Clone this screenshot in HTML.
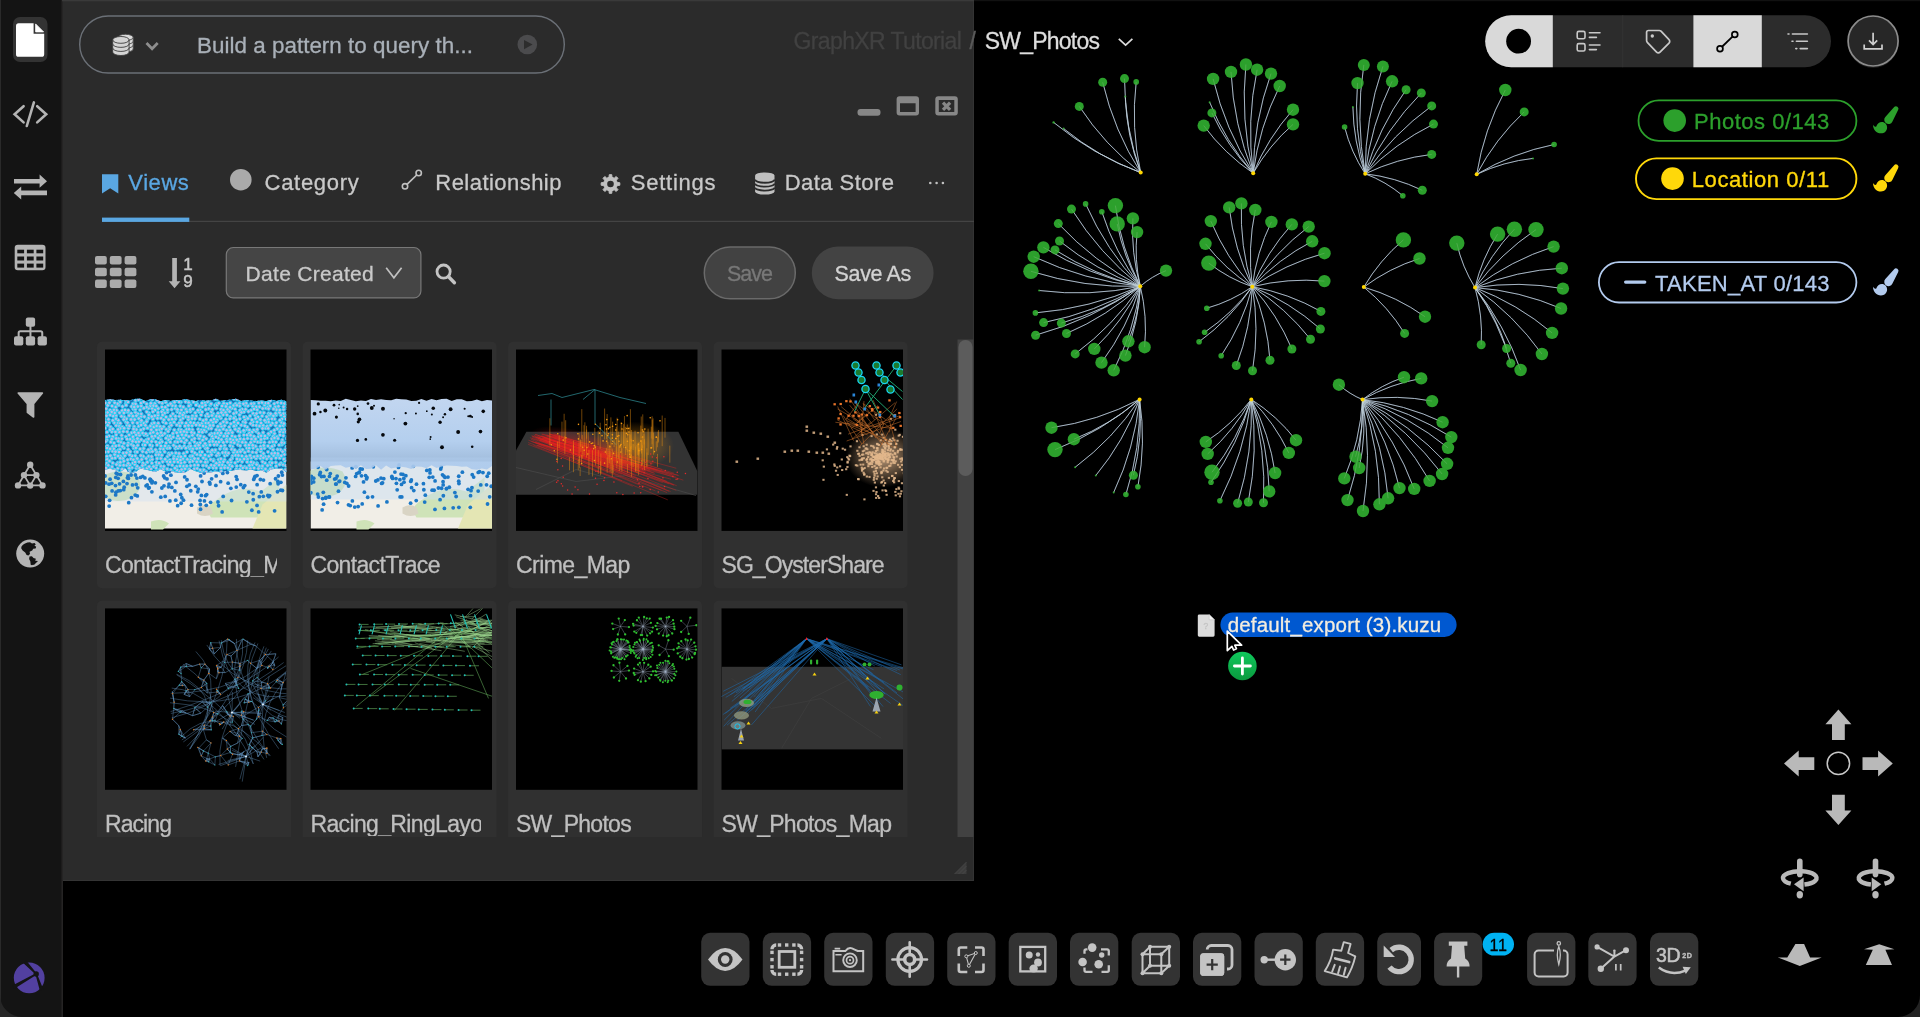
<!DOCTYPE html>
<html lang="en"><head><meta charset="utf-8"><title>GraphXR - SW_Photos</title>
<style>
html,body{margin:0;padding:0;background:#000;}
body{width:1920px;height:1017px;overflow:hidden;position:relative;font-family:"Liberation Sans",sans-serif;}
#g{position:absolute;left:0;top:0;width:1920px;height:1017px;display:block;}
.t{position:absolute;white-space:nowrap;display:block;-webkit-text-stroke:0.3px currentColor;}
#tx{position:absolute;left:0;top:0;width:1920px;height:1017px;will-change:transform;}
svg text{font-family:"Liberation Sans",sans-serif;}
</style></head><body>
<svg id="g" width="1920" height="1017" viewBox="0 0 1920 1017">
<rect x="0" y="0" width="61.200" height="1017" fill="#141414"/>
<rect x="61.200" y="0" width="1.800" height="1017" fill="#252424"/>
<rect x="0" y="0" width="1" height="1017" fill="#2a2a2a"/>
<rect x="13" y="17" width="34.5" height="45" rx="7" fill="#333"/>
<path d="M18.6 23.3H33.6V33.8H44.2V54.2a2.6 2.6 0 0 1-2.6 2.6H18.6a2.6 2.6 0 0 1-2.6-2.6V25.9a2.6 2.6 0 0 1 2.6-2.6Z" fill="#fff"/>
<path d="M35.6 23.9V31.9H43.6Z" fill="#fff" stroke="#fff" stroke-width="0.8" stroke-linejoin="round"/>
<path d="M23.6 106.2L14.6 114.2L23.6 122.4M33.9 102.4L26.8 126M37.2 106.2L46.2 114.2L37.2 122.4" fill="none" stroke="#b4b4b4" stroke-width="2.6" stroke-linecap="round" stroke-linejoin="miter"/>
<path d="M14 178.9H39.6V174.6L47 181.2L39.6 187.8V183.6H14ZM47 190.5H21.2V186.4L13.8 193L21.2 199.6V195.2H47Z" fill="#b4b4b4"/>
<rect x="14.7" y="244.7" width="30.8" height="25.6" rx="3.2" fill="#b4b4b4"/>
<rect x="17.3" y="249.7" width="6.8" height="3.6" fill="#141414"/>
<rect x="17.3" y="256.5" width="6.8" height="4" fill="#141414"/>
<rect x="17.3" y="263.6" width="6.8" height="4" fill="#141414"/>
<rect x="26.9" y="249.7" width="6.8" height="3.6" fill="#141414"/>
<rect x="26.9" y="256.5" width="6.8" height="4" fill="#141414"/>
<rect x="26.9" y="263.6" width="6.8" height="4" fill="#141414"/>
<rect x="36.4" y="249.7" width="6.8" height="3.6" fill="#141414"/>
<rect x="36.4" y="256.5" width="6.8" height="4" fill="#141414"/>
<rect x="36.4" y="263.6" width="6.8" height="4" fill="#141414"/>
<rect x="25.8" y="317.4" width="9.3" height="9.3" rx="2" fill="#b4b4b4"/>
<rect x="14" y="336.2" width="9.3" height="9.3" rx="2" fill="#b4b4b4"/>
<rect x="25.8" y="336.2" width="9.3" height="9.3" rx="2" fill="#b4b4b4"/>
<rect x="37.6" y="336.2" width="9.3" height="9.3" rx="2" fill="#b4b4b4"/>
<path d="M30.45 326V337M18.65 337V332.8a1.6 1.6 0 0 1 1.6-1.6H40.65a1.6 1.6 0 0 1 1.6 1.6V337" fill="none" stroke="#b4b4b4" stroke-width="2"/>
<path d="M18.2 393H42.4L33.6 403.8V417L27.4 412.4V403.8Z" fill="#b4b4b4" stroke="#b4b4b4" stroke-width="1.6" stroke-linejoin="round"/>
<path d="M30.2 464.8L18 485.4H42.5ZM24 475.1H36.4L30.2 485.6Z" fill="none" stroke="#b4b4b4" stroke-width="1.8" stroke-linejoin="round"/>
<circle cx="30.2" cy="464.8" r="3.2" fill="#b4b4b4"/>
<circle cx="24" cy="475.1" r="3.2" fill="#b4b4b4"/>
<circle cx="36.4" cy="475.1" r="3.2" fill="#b4b4b4"/>
<circle cx="18" cy="485.4" r="3.2" fill="#b4b4b4"/>
<circle cx="30.2" cy="485.6" r="3.2" fill="#b4b4b4"/>
<circle cx="42.5" cy="485.4" r="3.2" fill="#b4b4b4"/>
<circle cx="30.2" cy="553.6" r="14" fill="#b4b4b4"/>
<path d="M21.5 546.5c1.5-2.5 5-4.3 8.5-4.3l2 1.2 2.6-.4 1.2 1.6-1.4 1 1.8 1.2-.6 1.6-2.4.4-1 1.8-2.6 1.2.4 2.2-1.6 1.4-1.8-.4-1.4-2.6-2.6-1.8-1.4-2.4Z M29.5 556.5l2.4-.2 1.6 1.6 2.4.8-.8 2.2-2.2 2-.8 2.4-1.4-.6-.4-3.4-1.2-2.2Z M33 560.5l5 .6-3.8 3.6-2.4.2Z" fill="#141414"/>
<circle cx="29.200" cy="977.800" r="15.400" fill="#5240a0"/>
<path d="M36.78 973.45L25.99 960.3L23.21 962.9L35.62 974.55ZM35.8 973.31L12.45 985.56L14.35 988.84L36.6 974.69ZM35.44 974.26L39.8 990.61L43.4 989.39L36.96 973.74Z" fill="#141414"/>
<circle cx="36.200" cy="974" r="2.700" fill="#141414"/>
<path d="M0 1017V995A22 22 0 0 0 22 1017Z" fill="#262626"/>
<path d="M1920 1017V995A22 22 0 0 1 1898 1017Z" fill="#222"/>
<rect x="63" y="0" width="911" height="881" fill="#2b2b2b"/>
<rect x="63" y="880" width="911" height="1" fill="#343434"/>
<rect x="973" y="0" width="1" height="881" fill="#333"/>
<rect x="62" y="0" width="912" height="1.3" fill="#3a3a3a"/>
<rect x="974" y="0" width="946" height="1.2" fill="#111"/>
<rect x="79.7" y="16" width="484.6" height="57" rx="28.5" fill="none" stroke="#6b7077" stroke-width="1.4"/>
<path d="M118 37.4V49A7.6 3.1 0 0 0 133.2 49V37.4A7.6 3.1 0 0 0 118 37.4Z" fill="#dadada" stroke="#4a4a4a" stroke-width="0.9"/><path d="M118 37.4A7.6 3.1 0 0 0 133.2 37.4" fill="none" stroke="#4a4a4a" stroke-width="0.9"/><path d="M118 41.27A7.6 3.1 0 0 0 133.2 41.27" fill="none" stroke="#4a4a4a" stroke-width="0.9"/><path d="M118 45.13A7.6 3.1 0 0 0 133.2 45.13" fill="none" stroke="#4a4a4a" stroke-width="0.9"/>
<path d="M112.7 39.9V52.1A8.2 3.4 0 0 0 129.1 52.1V39.9A8.2 3.4 0 0 0 112.7 39.9Z" fill="#d4d4d4" stroke="#3c3c3c" stroke-width="0.9"/><path d="M112.7 39.9A8.2 3.4 0 0 0 129.1 39.9" fill="none" stroke="#3c3c3c" stroke-width="0.9"/><path d="M112.7 43.97A8.2 3.4 0 0 0 129.1 43.97" fill="none" stroke="#3c3c3c" stroke-width="0.9"/><path d="M112.7 48.03A8.2 3.4 0 0 0 129.1 48.03" fill="none" stroke="#3c3c3c" stroke-width="0.9"/>
<path d="M146.5 43L152.1 48.8L157.7 43" fill="none" stroke="#8e8e8e" stroke-width="2.7" stroke-linejoin="miter"/>
<circle cx="527.3" cy="44.5" r="9.8" fill="#4b4b4d"/>
<path d="M524 39.9V49.2L532.6 44.5Z" fill="#2d2d2d"/>
<rect x="857.500" y="109" width="23" height="6.800" rx="3" fill="#878787"/>
<path d="M899.600 96.300H916a3 3 0 0 1 3 3V112.600a3 3 0 0 1-3 3H899.600a3 3 0 0 1-3-3V99.300a3 3 0 0 1 3-3ZM900 103.300V111.900H915.600V103.300Z" fill="#878787" fill-rule="evenodd"/>
<path d="M938.300 96.300H954.800a3 3 0 0 1 3 3V112.600a3 3 0 0 1-3 3H938.300a3 3 0 0 1-3-3V99.300a3 3 0 0 1 3-3ZM938.800 99.900V111.900H954.300V99.900Z" fill="#878787" fill-rule="evenodd"/>
<path d="M943 102.700L950.100 109.800M950.100 102.700L943 109.800" stroke="#878787" stroke-width="3.300" fill="none"/>
<rect x="102" y="220.800" width="872" height="1.100" fill="#484848"/>
<rect x="102" y="217.600" width="87.300" height="4.300" fill="#5aa7e2"/>
<path d="M102 174.300H118.300V193.600L110.150 188.200L102 193.600Z" fill="#5aa7e2"/>
<circle cx="240.800" cy="179.700" r="10.800" fill="#aaa"/>
<path d="M407 184.300L416.700 175" stroke="#c0c0c0" stroke-width="1.700" fill="none"/>
<circle cx="418.700" cy="173" r="2.700" fill="none" stroke="#c0c0c0" stroke-width="1.600"/>
<circle cx="405" cy="186.300" r="2.700" fill="none" stroke="#c0c0c0" stroke-width="1.600"/>
<path d="M617.23 182.49L619.82 182.75L619.82 185.25L617.23 185.51L616.33 187.7L617.97 189.7L616.2 191.47L614.2 189.83L612.01 190.73L611.75 193.32L609.25 193.32L608.99 190.73L606.8 189.83L604.8 191.47L603.03 189.7L604.67 187.7L603.77 185.51L601.18 185.25L601.18 182.75L603.77 182.49L604.67 180.3L603.03 178.3L604.8 176.53L606.8 178.17L608.99 177.27L609.25 174.68L611.75 174.68L612.01 177.27L614.2 178.17L616.2 176.53L617.97 178.3L616.33 180.3Z" fill="#c0c0c0" stroke="#c0c0c0" stroke-width="1" stroke-linejoin="round"/><circle cx="610.5" cy="184" r="3.3" fill="#2b2b2b"/>
<path d="M755.1 175.6V191.4A9.7 3.2 0 0 0 774.5 191.4V175.6A9.7 3.2 0 0 0 755.1 175.6Z" fill="#c0c0c0"/><path d="M755.1 179.55A9.7 3.2 0 0 0 774.5 179.55" fill="none" stroke="#2b2b2b" stroke-width="1.8"/><path d="M755.1 183.5A9.7 3.2 0 0 0 774.5 183.5" fill="none" stroke="#2b2b2b" stroke-width="1.8"/><path d="M755.1 187.45A9.7 3.2 0 0 0 774.5 187.45" fill="none" stroke="#2b2b2b" stroke-width="1.8"/><path d="M755.1 175.6A9.7 3.2 0 0 0 774.5 175.6" fill="none" stroke="#2b2b2b" stroke-width="0"/>
<circle cx="930.3" cy="183" r="1.300" fill="#c0c0c0"/>
<circle cx="936.6" cy="183" r="1.300" fill="#c0c0c0"/>
<circle cx="942.9" cy="183" r="1.300" fill="#c0c0c0"/>
<rect x="95" y="256" width="11.800" height="8.600" rx="2" fill="#ababab"/>
<rect x="109.8" y="256" width="11.800" height="8.600" rx="2" fill="#ababab"/>
<rect x="124.6" y="256" width="11.800" height="8.600" rx="2" fill="#ababab"/>
<rect x="95" y="267.7" width="11.800" height="8.600" rx="2" fill="#ababab"/>
<rect x="109.8" y="267.7" width="11.800" height="8.600" rx="2" fill="#ababab"/>
<rect x="124.6" y="267.7" width="11.800" height="8.600" rx="2" fill="#ababab"/>
<rect x="95" y="279.4" width="11.800" height="8.600" rx="2" fill="#ababab"/>
<rect x="109.8" y="279.4" width="11.800" height="8.600" rx="2" fill="#ababab"/>
<rect x="124.6" y="279.4" width="11.800" height="8.600" rx="2" fill="#ababab"/>
<path d="M172.200 258.100H176.900V281.300H180.400L174.550 288.300L168.700 281.300H172.200Z" fill="#b4b4b4"/>
<rect x="226.300" y="247.500" width="194.600" height="50.400" rx="7" fill="#454545" stroke="#787878" stroke-width="1.200"/>
<path d="M386.200 267.800L393.900 277.800L401.600 267.800" fill="none" stroke="#c0c0c0" stroke-width="1.700"/>
<circle cx="443.600" cy="271.600" r="6.600" fill="none" stroke="#c4c4c4" stroke-width="2.800"/>
<path d="M448.600 276.800L454.400 282.800" stroke="#c4c4c4" stroke-width="3.400" stroke-linecap="round"/>
<rect x="704.300" y="247" width="91" height="51.800" rx="25.900" fill="#424242" stroke="#6a6a6a" stroke-width="1.500"/>
<rect x="811.800" y="246.500" width="121.800" height="52.800" rx="26.400" fill="#434343"/>
<rect x="957.500" y="339.500" width="16" height="497.500" fill="#424242"/>
<rect x="958.500" y="340" width="14" height="136" rx="7" fill="#5c5c5c"/>
<path d="M966.500 862L954.500 874H966.500Z" fill="#3c3c3c"/>
<path d="M966.500 866L958.500 874M966.500 870L962.500 874M966.500 862L954.500 874" stroke="#4a4a4a" stroke-width="0.800" fill="none"/>
<clipPath id="sc"><rect x="62" y="339" width="896" height="498"/></clipPath>
<g clip-path="url(#sc)">
<rect x="97" y="341.8" width="194" height="246.500" rx="5" fill="#303030"/>
<rect x="105" y="349.5" width="181.500" height="181.400" fill="#000"/>
<rect x="302.6" y="341.8" width="194" height="246.500" rx="5" fill="#303030"/>
<rect x="310.5" y="349.5" width="181.500" height="181.400" fill="#000"/>
<rect x="508.1" y="341.8" width="194" height="246.500" rx="5" fill="#303030"/>
<rect x="516" y="349.5" width="181.500" height="181.400" fill="#000"/>
<rect x="713.6" y="341.8" width="194" height="246.500" rx="5" fill="#303030"/>
<rect x="721.5" y="349.5" width="181.500" height="181.400" fill="#000"/>
<rect x="97" y="600.7" width="194" height="246.500" rx="5" fill="#303030"/>
<rect x="105" y="608.4" width="181.500" height="181.400" fill="#000"/>
<rect x="302.6" y="600.7" width="194" height="246.500" rx="5" fill="#303030"/>
<rect x="310.5" y="608.4" width="181.500" height="181.400" fill="#000"/>
<rect x="508.1" y="600.7" width="194" height="246.500" rx="5" fill="#303030"/>
<rect x="516" y="608.4" width="181.500" height="181.400" fill="#000"/>
<rect x="713.6" y="600.7" width="194" height="246.500" rx="5" fill="#303030"/>
<rect x="721.5" y="608.4" width="181.500" height="181.400" fill="#000"/>
</g>
<clipPath id="t1"><rect x="105" y="349.5" width="181.500" height="181.400"/></clipPath>
<clipPath id="t1b"><path d="M105 400L110.04 399.32L115.08 400.11L120.12 399.66L125.17 400.27L130.21 400.33L135.25 398.87L140.29 398.73L145.33 400.88L150.38 399.37L155.42 399.31L160.46 401.29L165.5 399.92L170.54 400.87L175.58 399.94L180.62 400.36L185.67 399.09L190.71 400.35L195.75 400.96L200.79 400.06L205.83 400.63L210.88 400.45L215.92 398.87L220.96 400.67L226 400.24L231.04 399.48L236.08 398.78L241.12 400.95L246.17 399.93L251.21 400.57L256.25 400.98L261.29 400.56L266.33 401.09L271.38 399.73L276.42 400.78L281.46 399.86L286.5 401.13L286.5 472.27L281.46 468.62L276.42 468.8L271.38 469.18L266.33 472.68L261.29 470.2L256.25 471.09L251.21 469.57L246.17 470.53L241.12 469.97L236.08 469.8L231.04 470.9L226 470.89L220.96 472.39L215.92 471.35L210.88 472.51L205.83 472.17L200.79 472.8L195.75 471.3L190.71 468.92L185.67 472.19L180.62 472.67L175.58 472.39L170.54 470.82L165.5 471.5L160.46 469.15L155.42 472.05L150.38 470.84L145.33 469.49L140.29 468.46L135.25 472.16L130.21 472.79L125.17 468.57L120.12 471.91L115.08 470.08L110.04 468.87L105 469.54Z"/></clipPath>
<g clip-path="url(#t1)"><rect x="105" y="465.5" width="181.500" height="63" fill="#f1eee7"/><path d="M103 475.5q16 -8 34 0q8 12 -4 22q-18 8 -32 -2z" fill="#c6deaa"/><path d="M217 499.5q20 -16 44 -8l18 -14v40h-68q-8 -10 6 -18z" fill="#cfe3b8"/><path d="M262.5 504.5l24 -20v44h-34z" fill="#e4e6b4"/><path d="M197 507.5q8 -5 14 0l2 6q-8 5 -16 0z" fill="#d9d4c4"/><path d="M151 521.5q10 -4 18 2l-6 6h-12z" fill="#cfe3b8"/><rect x="105" y="467.5" width="181.500" height="34" fill="#cfe0f4" opacity="0.420"/><g fill="#1c78c6"><circle cx="163.61" cy="476.01" r="1.900"/><circle cx="222.82" cy="473.4" r="1.900"/><circle cx="201.99" cy="481.49" r="1.900"/><circle cx="115.5" cy="485.53" r="1.900"/><circle cx="111.79" cy="483.36" r="1.900"/><circle cx="117.64" cy="474.1" r="1.900"/><circle cx="181.84" cy="497.73" r="1.900"/><circle cx="127.41" cy="477.86" r="1.900"/><circle cx="218.57" cy="505.73" r="1.900"/><circle cx="209.46" cy="482.33" r="1.900"/><circle cx="281.7" cy="472.23" r="1.900"/><circle cx="260.38" cy="479.5" r="1.900"/><circle cx="131.11" cy="475.02" r="1.900"/><circle cx="160.84" cy="497.19" r="1.900"/><circle cx="137.71" cy="487.87" r="1.900"/><circle cx="220.64" cy="481.67" r="1.900"/><circle cx="204.14" cy="472.99" r="1.900"/><circle cx="115.79" cy="477.44" r="1.900"/><circle cx="228.15" cy="483.19" r="1.900"/><circle cx="161.86" cy="488.01" r="1.900"/><circle cx="187.03" cy="479.76" r="1.900"/><circle cx="248.78" cy="492.07" r="1.900"/><circle cx="149.18" cy="487.64" r="1.900"/><circle cx="200.06" cy="500.41" r="1.900"/><circle cx="237.03" cy="479.46" r="1.900"/><circle cx="282.41" cy="475.03" r="1.900"/><circle cx="180.68" cy="494.45" r="1.900"/><circle cx="132.51" cy="484.97" r="1.900"/><circle cx="112.1" cy="490.9" r="1.900"/><circle cx="243.39" cy="487.59" r="1.900"/><circle cx="263.46" cy="480.12" r="1.900"/><circle cx="230.85" cy="488.3" r="1.900"/><circle cx="209.96" cy="484.01" r="1.900"/><circle cx="257.03" cy="505.46" r="1.900"/><circle cx="190.81" cy="490.75" r="1.900"/><circle cx="115.98" cy="492.17" r="1.900"/><circle cx="222.13" cy="511.95" r="1.900"/><circle cx="253.77" cy="479.38" r="1.900"/><circle cx="174.83" cy="490.92" r="1.900"/><circle cx="109.08" cy="484.17" r="1.900"/><circle cx="135.42" cy="475" r="1.900"/><circle cx="115.67" cy="494.94" r="1.900"/><circle cx="128.41" cy="478.45" r="1.900"/><circle cx="175.76" cy="500.19" r="1.900"/><circle cx="119.59" cy="483.8" r="1.900"/><circle cx="204.45" cy="500.92" r="1.900"/><circle cx="253.29" cy="499.75" r="1.900"/><circle cx="155.39" cy="482.84" r="1.900"/><circle cx="169.94" cy="500.97" r="1.900"/><circle cx="278.35" cy="476.01" r="1.900"/><circle cx="136.9" cy="478.07" r="1.900"/><circle cx="147.23" cy="484.85" r="1.900"/><circle cx="211.63" cy="478.83" r="1.900"/><circle cx="105.74" cy="482.94" r="1.900"/><circle cx="171.83" cy="487.38" r="1.900"/><circle cx="277.51" cy="491.74" r="1.900"/><circle cx="198.3" cy="489.09" r="1.900"/><circle cx="227.39" cy="472.59" r="1.900"/><circle cx="267.82" cy="495.47" r="1.900"/><circle cx="263.29" cy="496.3" r="1.900"/><circle cx="176.02" cy="482.39" r="1.900"/><circle cx="123.74" cy="489.67" r="1.900"/><circle cx="116.27" cy="473.19" r="1.900"/><circle cx="142.79" cy="476.33" r="1.900"/><circle cx="166.55" cy="472.52" r="1.900"/><circle cx="105.04" cy="476.02" r="1.900"/><circle cx="123.37" cy="481.43" r="1.900"/><circle cx="109.62" cy="500.36" r="1.900"/><circle cx="216.15" cy="475.94" r="1.900"/><circle cx="150.66" cy="481" r="1.900"/><circle cx="170.91" cy="475.18" r="1.900"/><circle cx="258.66" cy="511.95" r="1.900"/><circle cx="189.34" cy="484.82" r="1.900"/><circle cx="120.55" cy="474.5" r="1.900"/><circle cx="167.02" cy="478.88" r="1.900"/><circle cx="255.02" cy="476.3" r="1.900"/><circle cx="109.18" cy="506.04" r="1.900"/><circle cx="200.61" cy="475.89" r="1.900"/><circle cx="203.31" cy="471.1" r="1.900"/><circle cx="200.59" cy="509.24" r="1.900"/><circle cx="261.26" cy="491.96" r="1.900"/><circle cx="152.26" cy="481.51" r="1.900"/><circle cx="135.23" cy="495.1" r="1.900"/><circle cx="201.4" cy="495.43" r="1.900"/><circle cx="164.67" cy="477.85" r="1.900"/><circle cx="251.88" cy="510.26" r="1.900"/><circle cx="259.33" cy="496.69" r="1.900"/><circle cx="253.12" cy="493.72" r="1.900"/><circle cx="146.04" cy="485.84" r="1.900"/><circle cx="169.36" cy="471.23" r="1.900"/><circle cx="110.06" cy="479.25" r="1.900"/><circle cx="151.91" cy="491.82" r="1.900"/><circle cx="278.13" cy="483.75" r="1.900"/><circle cx="274.6" cy="510.83" r="1.900"/><circle cx="277.86" cy="481.46" r="1.900"/><circle cx="144.9" cy="477.95" r="1.900"/><circle cx="140.6" cy="477.4" r="1.900"/><circle cx="217.96" cy="502.02" r="1.900"/><circle cx="257.12" cy="484.69" r="1.900"/><circle cx="223.19" cy="496.38" r="1.900"/><circle cx="120.34" cy="490.62" r="1.900"/><circle cx="269.67" cy="495.57" r="1.900"/><circle cx="240.78" cy="484.64" r="1.900"/><circle cx="137.31" cy="495.89" r="1.900"/><circle cx="165.19" cy="496.44" r="1.900"/><circle cx="280.87" cy="482.3" r="1.900"/><circle cx="177.65" cy="505.65" r="1.900"/><circle cx="236.19" cy="476.53" r="1.900"/><circle cx="127.99" cy="476.02" r="1.900"/><circle cx="268.78" cy="496.71" r="1.900"/><circle cx="131.46" cy="497.71" r="1.900"/><circle cx="282.44" cy="490.5" r="1.900"/><circle cx="168.42" cy="486.81" r="1.900"/><circle cx="128.71" cy="470.11" r="1.900"/><circle cx="280.73" cy="490.22" r="1.900"/><circle cx="200.31" cy="504.5" r="1.900"/><circle cx="183.52" cy="500.2" r="1.900"/><circle cx="254.53" cy="477.57" r="1.900"/><circle cx="150.58" cy="479.59" r="1.900"/><circle cx="148.54" cy="488.03" r="1.900"/><circle cx="151.95" cy="482.95" r="1.900"/><circle cx="128.72" cy="502.69" r="1.900"/><circle cx="169.03" cy="484.06" r="1.900"/><circle cx="210.59" cy="502.29" r="1.900"/><circle cx="181.13" cy="503.25" r="1.900"/><circle cx="195.8" cy="486.28" r="1.900"/><circle cx="199.75" cy="470.5" r="1.900"/><circle cx="184.66" cy="476.88" r="1.900"/><circle cx="105.71" cy="496.36" r="1.900"/><circle cx="136.19" cy="484.51" r="1.900"/><circle cx="236.26" cy="487.06" r="1.900"/><circle cx="164" cy="485.86" r="1.900"/><circle cx="205.53" cy="495.66" r="1.900"/><circle cx="124.21" cy="487.18" r="1.900"/><circle cx="149.98" cy="479.18" r="1.900"/><circle cx="244.78" cy="485.53" r="1.900"/><circle cx="206.67" cy="494.58" r="1.900"/><circle cx="270.16" cy="483.63" r="1.900"/><circle cx="215.87" cy="485.47" r="1.900"/><circle cx="197.7" cy="491.83" r="1.900"/><circle cx="186.87" cy="486.32" r="1.900"/><circle cx="191.52" cy="505.17" r="1.900"/><circle cx="231.56" cy="500.49" r="1.900"/><circle cx="275.53" cy="478.75" r="1.900"/><circle cx="206.27" cy="505.33" r="1.900"/><circle cx="257.04" cy="475.61" r="1.900"/><circle cx="127.01" cy="483.6" r="1.900"/><circle cx="118.13" cy="478.28" r="1.900"/><circle cx="118.23" cy="490.95" r="1.900"/><circle cx="246.89" cy="501.8" r="1.900"/></g><g clip-path="url(#t1b)"><rect x="105" y="395.5" width="181.500" height="80" fill="#1870b8"/><g fill="#c2b8e6" stroke="#2ad4f6" stroke-width="0.950"><circle cx="125.88" cy="403.56" r="1.750"/><circle cx="237.83" cy="461.22" r="1.750"/><circle cx="214.55" cy="451.61" r="1.750"/><circle cx="111.77" cy="431.72" r="1.750"/><circle cx="282.34" cy="440.12" r="1.750"/><circle cx="289.29" cy="422.22" r="1.750"/><circle cx="107.5" cy="412.49" r="1.750"/><circle cx="252.42" cy="472.68" r="1.750"/><circle cx="266.17" cy="408.25" r="1.750"/><circle cx="232.49" cy="456.06" r="1.750"/><circle cx="230.17" cy="468.97" r="1.750"/><circle cx="182.78" cy="418.39" r="1.750"/><circle cx="131.9" cy="467.65" r="1.750"/><circle cx="275.3" cy="407.08" r="1.750"/><circle cx="213.26" cy="467.84" r="1.750"/><circle cx="148.97" cy="413.24" r="1.750"/><circle cx="268.39" cy="471.24" r="1.750"/><circle cx="167.72" cy="436.2" r="1.750"/><circle cx="227.9" cy="467.76" r="1.750"/><circle cx="168.66" cy="471.7" r="1.750"/><circle cx="186.93" cy="452.08" r="1.750"/><circle cx="115.67" cy="407.11" r="1.750"/><circle cx="245.66" cy="442.6" r="1.750"/><circle cx="218.84" cy="442.12" r="1.750"/><circle cx="185.93" cy="416.62" r="1.750"/><circle cx="213.15" cy="413.78" r="1.750"/><circle cx="234.04" cy="422.14" r="1.750"/><circle cx="196.93" cy="454.44" r="1.750"/><circle cx="129.68" cy="465.07" r="1.750"/><circle cx="256.03" cy="458.41" r="1.750"/><circle cx="205.97" cy="445.1" r="1.750"/><circle cx="189.8" cy="448.46" r="1.750"/><circle cx="257.16" cy="409.68" r="1.750"/><circle cx="274.56" cy="419.06" r="1.750"/><circle cx="152.27" cy="399.41" r="1.750"/><circle cx="158.24" cy="408.56" r="1.750"/><circle cx="150.49" cy="425.94" r="1.750"/><circle cx="226.79" cy="422.42" r="1.750"/><circle cx="221.03" cy="409.44" r="1.750"/><circle cx="198.41" cy="473" r="1.750"/><circle cx="211.22" cy="465.16" r="1.750"/><circle cx="163.26" cy="421.99" r="1.750"/><circle cx="162.94" cy="409.94" r="1.750"/><circle cx="194.12" cy="432.97" r="1.750"/><circle cx="186.23" cy="423.1" r="1.750"/><circle cx="146.73" cy="411.82" r="1.750"/><circle cx="136.05" cy="441.77" r="1.750"/><circle cx="157.13" cy="458.57" r="1.750"/><circle cx="119.27" cy="425.94" r="1.750"/><circle cx="194.66" cy="452.73" r="1.750"/><circle cx="127.18" cy="425.27" r="1.750"/><circle cx="174.03" cy="456.44" r="1.750"/><circle cx="128.19" cy="449.55" r="1.750"/><circle cx="148.55" cy="456.25" r="1.750"/><circle cx="143.02" cy="468.76" r="1.750"/><circle cx="271.66" cy="438.77" r="1.750"/><circle cx="170.55" cy="423.24" r="1.750"/><circle cx="183.53" cy="466.17" r="1.750"/><circle cx="211.42" cy="411.73" r="1.750"/><circle cx="284.36" cy="416.4" r="1.750"/><circle cx="223.46" cy="410.12" r="1.750"/><circle cx="136.17" cy="434.79" r="1.750"/><circle cx="172.94" cy="433.46" r="1.750"/><circle cx="165.67" cy="402.15" r="1.750"/><circle cx="123.34" cy="431.39" r="1.750"/><circle cx="208.68" cy="408.68" r="1.750"/><circle cx="281.84" cy="444.53" r="1.750"/><circle cx="227.07" cy="404" r="1.750"/><circle cx="190.77" cy="472.47" r="1.750"/><circle cx="221.46" cy="426.35" r="1.750"/><circle cx="155.8" cy="441.82" r="1.750"/><circle cx="252.51" cy="452.17" r="1.750"/><circle cx="158.02" cy="415.27" r="1.750"/><circle cx="118.34" cy="450.17" r="1.750"/><circle cx="166.32" cy="429.56" r="1.750"/><circle cx="128.28" cy="443.05" r="1.750"/><circle cx="251.51" cy="439.02" r="1.750"/><circle cx="224.68" cy="398.89" r="1.750"/><circle cx="283.55" cy="413.61" r="1.750"/><circle cx="223.21" cy="414.83" r="1.750"/><circle cx="137.78" cy="406.5" r="1.750"/><circle cx="200.51" cy="455.16" r="1.750"/><circle cx="179.22" cy="423.01" r="1.750"/><circle cx="242.15" cy="409.34" r="1.750"/><circle cx="168.75" cy="446.49" r="1.750"/><circle cx="163.37" cy="449.11" r="1.750"/><circle cx="167.27" cy="461.62" r="1.750"/><circle cx="190.45" cy="411.59" r="1.750"/><circle cx="175.38" cy="408.41" r="1.750"/><circle cx="250.36" cy="468.45" r="1.750"/><circle cx="156.84" cy="452.13" r="1.750"/><circle cx="190.32" cy="409.54" r="1.750"/><circle cx="119.51" cy="400.2" r="1.750"/><circle cx="207.77" cy="451.46" r="1.750"/><circle cx="190.72" cy="460.08" r="1.750"/><circle cx="234.19" cy="473.28" r="1.750"/><circle cx="177.32" cy="411.78" r="1.750"/><circle cx="200.07" cy="451.87" r="1.750"/><circle cx="186.67" cy="429.32" r="1.750"/><circle cx="166.1" cy="416.97" r="1.750"/><circle cx="224.44" cy="459.76" r="1.750"/><circle cx="129.46" cy="470.98" r="1.750"/><circle cx="119.25" cy="473.2" r="1.750"/><circle cx="192.09" cy="425.7" r="1.750"/><circle cx="180.3" cy="406.09" r="1.750"/><circle cx="283.59" cy="409.43" r="1.750"/><circle cx="277.94" cy="455.33" r="1.750"/><circle cx="183.36" cy="406.91" r="1.750"/><circle cx="201.7" cy="423.53" r="1.750"/><circle cx="177.14" cy="438.24" r="1.750"/><circle cx="264.57" cy="405.11" r="1.750"/><circle cx="245.31" cy="445.44" r="1.750"/><circle cx="103.86" cy="459.99" r="1.750"/><circle cx="175.77" cy="452.91" r="1.750"/><circle cx="232.94" cy="439.92" r="1.750"/><circle cx="247.85" cy="405.73" r="1.750"/><circle cx="208.88" cy="467.77" r="1.750"/><circle cx="139" cy="441.56" r="1.750"/><circle cx="196.31" cy="415.99" r="1.750"/><circle cx="205.82" cy="409.46" r="1.750"/><circle cx="247.59" cy="438.39" r="1.750"/><circle cx="198.19" cy="465.14" r="1.750"/><circle cx="179.74" cy="438.62" r="1.750"/><circle cx="252.92" cy="425.2" r="1.750"/><circle cx="175.51" cy="405.89" r="1.750"/><circle cx="118.99" cy="445.5" r="1.750"/><circle cx="146.38" cy="452.41" r="1.750"/><circle cx="238.28" cy="441.42" r="1.750"/><circle cx="205.8" cy="422.94" r="1.750"/><circle cx="123.98" cy="447.9" r="1.750"/><circle cx="185.57" cy="401.75" r="1.750"/><circle cx="230.33" cy="439.01" r="1.750"/><circle cx="287.18" cy="424.92" r="1.750"/><circle cx="178.88" cy="429.47" r="1.750"/><circle cx="177.96" cy="435.87" r="1.750"/><circle cx="103.89" cy="399.64" r="1.750"/><circle cx="176.62" cy="466.53" r="1.750"/><circle cx="223.39" cy="461.72" r="1.750"/><circle cx="239.75" cy="469.48" r="1.750"/><circle cx="115.19" cy="458.02" r="1.750"/><circle cx="169.56" cy="428.91" r="1.750"/><circle cx="265.61" cy="428.18" r="1.750"/><circle cx="272.31" cy="423.22" r="1.750"/><circle cx="281.75" cy="469.94" r="1.750"/><circle cx="141.3" cy="416.34" r="1.750"/><circle cx="288.19" cy="415.43" r="1.750"/><circle cx="208.81" cy="428.47" r="1.750"/><circle cx="184.56" cy="442.71" r="1.750"/><circle cx="120.67" cy="442.12" r="1.750"/><circle cx="245.48" cy="416.97" r="1.750"/><circle cx="184.89" cy="426.11" r="1.750"/><circle cx="230.28" cy="402.91" r="1.750"/><circle cx="146.59" cy="439.79" r="1.750"/><circle cx="280.77" cy="415.1" r="1.750"/><circle cx="127.71" cy="445.42" r="1.750"/><circle cx="107.47" cy="445.88" r="1.750"/><circle cx="108.97" cy="422.75" r="1.750"/><circle cx="276.19" cy="414.92" r="1.750"/><circle cx="160.97" cy="439.73" r="1.750"/><circle cx="278.5" cy="406.27" r="1.750"/><circle cx="280.83" cy="463.23" r="1.750"/><circle cx="106.77" cy="463.31" r="1.750"/><circle cx="192.65" cy="448.96" r="1.750"/><circle cx="120.5" cy="456.34" r="1.750"/><circle cx="150.55" cy="459.98" r="1.750"/><circle cx="180.74" cy="402.25" r="1.750"/><circle cx="181.08" cy="429.84" r="1.750"/><circle cx="202.71" cy="440.14" r="1.750"/><circle cx="114.14" cy="442.94" r="1.750"/><circle cx="230.43" cy="430.17" r="1.750"/><circle cx="222.27" cy="464.86" r="1.750"/><circle cx="132.84" cy="463.03" r="1.750"/><circle cx="180.82" cy="463.01" r="1.750"/><circle cx="126.67" cy="465.35" r="1.750"/><circle cx="202.04" cy="471.46" r="1.750"/><circle cx="231.07" cy="442.34" r="1.750"/><circle cx="203.17" cy="420.47" r="1.750"/><circle cx="263.84" cy="412.71" r="1.750"/><circle cx="218.55" cy="459.56" r="1.750"/><circle cx="160.25" cy="448.73" r="1.750"/><circle cx="129.24" cy="468.24" r="1.750"/><circle cx="205.8" cy="459.26" r="1.750"/><circle cx="133.68" cy="448.09" r="1.750"/><circle cx="189.19" cy="469.35" r="1.750"/><circle cx="150.03" cy="451.53" r="1.750"/><circle cx="241.85" cy="455.91" r="1.750"/><circle cx="126.46" cy="418.75" r="1.750"/><circle cx="266.72" cy="458.78" r="1.750"/><circle cx="163.16" cy="468.91" r="1.750"/><circle cx="199.82" cy="447.95" r="1.750"/><circle cx="124.79" cy="455.69" r="1.750"/><circle cx="156.81" cy="471.73" r="1.750"/><circle cx="181.4" cy="409.95" r="1.750"/><circle cx="231.98" cy="435.84" r="1.750"/><circle cx="160.02" cy="436.02" r="1.750"/><circle cx="159.84" cy="472.75" r="1.750"/><circle cx="235.19" cy="409.19" r="1.750"/><circle cx="118.19" cy="456.11" r="1.750"/><circle cx="259.33" cy="400.42" r="1.750"/><circle cx="188.34" cy="419.6" r="1.750"/><circle cx="117.86" cy="462.71" r="1.750"/><circle cx="286.08" cy="418.97" r="1.750"/><circle cx="199.74" cy="418.99" r="1.750"/><circle cx="166.03" cy="423.24" r="1.750"/><circle cx="192.03" cy="439.66" r="1.750"/><circle cx="116.61" cy="410.36" r="1.750"/><circle cx="194.36" cy="468.81" r="1.750"/><circle cx="255.6" cy="446.32" r="1.750"/><circle cx="196.78" cy="448.42" r="1.750"/><circle cx="216.26" cy="467.89" r="1.750"/><circle cx="141.32" cy="413.9" r="1.750"/><circle cx="112.76" cy="436.71" r="1.750"/><circle cx="127.21" cy="431.65" r="1.750"/><circle cx="179.22" cy="471.26" r="1.750"/><circle cx="211.55" cy="439.37" r="1.750"/><circle cx="216.58" cy="403.91" r="1.750"/><circle cx="175.51" cy="418.92" r="1.750"/><circle cx="150.41" cy="433.35" r="1.750"/><circle cx="203.4" cy="445.78" r="1.750"/><circle cx="217.92" cy="426.42" r="1.750"/><circle cx="175.34" cy="448.4" r="1.750"/><circle cx="219.01" cy="454.68" r="1.750"/><circle cx="239.04" cy="428.63" r="1.750"/><circle cx="162.05" cy="441.69" r="1.750"/><circle cx="153.73" cy="427.08" r="1.750"/><circle cx="110.52" cy="426.97" r="1.750"/><circle cx="144.01" cy="423.29" r="1.750"/><circle cx="127.66" cy="412.06" r="1.750"/><circle cx="275.84" cy="457.95" r="1.750"/><circle cx="112.67" cy="462.96" r="1.750"/><circle cx="276.11" cy="473.14" r="1.750"/><circle cx="253.14" cy="413.42" r="1.750"/><circle cx="268.25" cy="399.84" r="1.750"/><circle cx="131.7" cy="432.74" r="1.750"/><circle cx="157.5" cy="418.35" r="1.750"/><circle cx="121.9" cy="438.65" r="1.750"/><circle cx="158.25" cy="423.19" r="1.750"/><circle cx="143.28" cy="456.32" r="1.750"/><circle cx="286.87" cy="413.34" r="1.750"/><circle cx="258.63" cy="472.1" r="1.750"/><circle cx="256.21" cy="431.41" r="1.750"/><circle cx="214.6" cy="433.38" r="1.750"/><circle cx="196.77" cy="403.74" r="1.750"/><circle cx="131.58" cy="444.59" r="1.750"/><circle cx="232.39" cy="446.58" r="1.750"/><circle cx="178.07" cy="448.09" r="1.750"/><circle cx="208.56" cy="423.1" r="1.750"/><circle cx="137.76" cy="413.71" r="1.750"/><circle cx="263.14" cy="432.5" r="1.750"/><circle cx="192.63" cy="461.24" r="1.750"/><circle cx="235.11" cy="436.63" r="1.750"/><circle cx="104.28" cy="446.79" r="1.750"/><circle cx="122.46" cy="427.08" r="1.750"/><circle cx="136.33" cy="429.55" r="1.750"/><circle cx="156.64" cy="425.98" r="1.750"/><circle cx="289.34" cy="462.81" r="1.750"/><circle cx="185.06" cy="468.69" r="1.750"/><circle cx="172.1" cy="419.25" r="1.750"/><circle cx="199.5" cy="406.27" r="1.750"/><circle cx="271.13" cy="431.8" r="1.750"/><circle cx="152.45" cy="451.44" r="1.750"/><circle cx="192.48" cy="415.93" r="1.750"/><circle cx="268.44" cy="406.63" r="1.750"/><circle cx="273.4" cy="415.89" r="1.750"/><circle cx="188.71" cy="446.48" r="1.750"/><circle cx="210.72" cy="452.01" r="1.750"/><circle cx="243.78" cy="435.02" r="1.750"/><circle cx="119.36" cy="432.1" r="1.750"/><circle cx="224.67" cy="445.58" r="1.750"/><circle cx="276.55" cy="409.69" r="1.750"/><circle cx="130.04" cy="439.31" r="1.750"/><circle cx="168.06" cy="405.31" r="1.750"/><circle cx="175.83" cy="446.63" r="1.750"/><circle cx="267.12" cy="438.07" r="1.750"/><circle cx="221.07" cy="468.34" r="1.750"/><circle cx="260.47" cy="458.29" r="1.750"/><circle cx="125.81" cy="422.08" r="1.750"/><circle cx="287.47" cy="471.36" r="1.750"/><circle cx="251.51" cy="398.95" r="1.750"/><circle cx="211.39" cy="433.62" r="1.750"/><circle cx="116.13" cy="415.65" r="1.750"/><circle cx="275.56" cy="425.49" r="1.750"/><circle cx="225.76" cy="433.47" r="1.750"/><circle cx="124.4" cy="469.66" r="1.750"/><circle cx="243.36" cy="421.83" r="1.750"/><circle cx="122.03" cy="399.03" r="1.750"/><circle cx="164.57" cy="451.87" r="1.750"/><circle cx="217.81" cy="433.23" r="1.750"/><circle cx="175.18" cy="441.74" r="1.750"/><circle cx="138.71" cy="426.15" r="1.750"/><circle cx="136.39" cy="468.21" r="1.750"/><circle cx="186.03" cy="409.45" r="1.750"/><circle cx="263.12" cy="425.51" r="1.750"/><circle cx="199.12" cy="438.48" r="1.750"/><circle cx="228.44" cy="433.2" r="1.750"/><circle cx="157.06" cy="400.32" r="1.750"/><circle cx="239.78" cy="450.19" r="1.750"/><circle cx="279.93" cy="434.96" r="1.750"/><circle cx="164.23" cy="472.31" r="1.750"/><circle cx="205.77" cy="415.81" r="1.750"/><circle cx="231.68" cy="449.3" r="1.750"/><circle cx="190.5" cy="422.39" r="1.750"/><circle cx="121.88" cy="471.17" r="1.750"/><circle cx="248.92" cy="445.1" r="1.750"/><circle cx="158" cy="412.51" r="1.750"/><circle cx="217.01" cy="399.1" r="1.750"/><circle cx="230.8" cy="423.73" r="1.750"/><circle cx="189.61" cy="461.96" r="1.750"/><circle cx="183.62" cy="438.08" r="1.750"/><circle cx="188.9" cy="436.53" r="1.750"/><circle cx="244.74" cy="466.64" r="1.750"/><circle cx="203.76" cy="469.86" r="1.750"/><circle cx="227.16" cy="436.18" r="1.750"/><circle cx="190.38" cy="404.98" r="1.750"/><circle cx="281.26" cy="402.99" r="1.750"/><circle cx="187.36" cy="459.27" r="1.750"/><circle cx="183.21" cy="472.05" r="1.750"/><circle cx="247.04" cy="448.22" r="1.750"/><circle cx="118.61" cy="404.93" r="1.750"/><circle cx="256.27" cy="406.71" r="1.750"/><circle cx="270.31" cy="405.99" r="1.750"/><circle cx="200.86" cy="461.55" r="1.750"/><circle cx="230.05" cy="445.65" r="1.750"/><circle cx="173.59" cy="400.69" r="1.750"/><circle cx="136.38" cy="415.74" r="1.750"/><circle cx="173.53" cy="445.3" r="1.750"/><circle cx="159.82" cy="452.31" r="1.750"/><circle cx="215.39" cy="449.88" r="1.750"/><circle cx="246.56" cy="468.04" r="1.750"/><circle cx="213.61" cy="459.65" r="1.750"/><circle cx="269.99" cy="462.54" r="1.750"/><circle cx="156.01" cy="454.76" r="1.750"/><circle cx="240.12" cy="438.73" r="1.750"/><circle cx="270.8" cy="464.66" r="1.750"/><circle cx="192.31" cy="435.28" r="1.750"/><circle cx="212.21" cy="436.4" r="1.750"/><circle cx="220.79" cy="418.3" r="1.750"/><circle cx="251.31" cy="457.91" r="1.750"/><circle cx="152.07" cy="423.56" r="1.750"/><circle cx="233.64" cy="405.38" r="1.750"/><circle cx="284.38" cy="454.55" r="1.750"/><circle cx="197.26" cy="468.44" r="1.750"/><circle cx="279.56" cy="412.47" r="1.750"/><circle cx="219.86" cy="448.79" r="1.750"/><circle cx="161.05" cy="399.84" r="1.750"/><circle cx="217.03" cy="420.2" r="1.750"/><circle cx="122.52" cy="406.53" r="1.750"/><circle cx="168.53" cy="464.38" r="1.750"/><circle cx="194.44" cy="441.92" r="1.750"/><circle cx="216.35" cy="408.27" r="1.750"/><circle cx="214.87" cy="398.95" r="1.750"/><circle cx="239.47" cy="403.29" r="1.750"/><circle cx="143.63" cy="428.8" r="1.750"/><circle cx="284.36" cy="403.61" r="1.750"/><circle cx="239.63" cy="406.03" r="1.750"/><circle cx="224.76" cy="455.86" r="1.750"/><circle cx="283.41" cy="432.15" r="1.750"/><circle cx="106.95" cy="456.39" r="1.750"/><circle cx="279.87" cy="426.05" r="1.750"/><circle cx="140.79" cy="455.58" r="1.750"/><circle cx="262" cy="402.52" r="1.750"/><circle cx="192.85" cy="409.11" r="1.750"/><circle cx="112.01" cy="458.29" r="1.750"/><circle cx="252.99" cy="421.66" r="1.750"/><circle cx="243.71" cy="399.84" r="1.750"/><circle cx="161.1" cy="418.27" r="1.750"/><circle cx="224.44" cy="448.75" r="1.750"/><circle cx="190.4" cy="456.15" r="1.750"/><circle cx="247.5" cy="459.06" r="1.750"/><circle cx="141.18" cy="425.08" r="1.750"/><circle cx="156.51" cy="465.3" r="1.750"/><circle cx="180.59" cy="420.11" r="1.750"/><circle cx="143.6" cy="448.54" r="1.750"/><circle cx="267.97" cy="451.85" r="1.750"/><circle cx="260.84" cy="451.46" r="1.750"/><circle cx="117.75" cy="468.47" r="1.750"/><circle cx="150.97" cy="468.82" r="1.750"/><circle cx="252.17" cy="464.86" r="1.750"/><circle cx="150.51" cy="405.82" r="1.750"/><circle cx="253.96" cy="436.46" r="1.750"/><circle cx="221.19" cy="471.42" r="1.750"/><circle cx="183.63" cy="453.41" r="1.750"/><circle cx="130.25" cy="451.77" r="1.750"/><circle cx="260.11" cy="412.47" r="1.750"/><circle cx="237.14" cy="399.37" r="1.750"/><circle cx="284.22" cy="429.42" r="1.750"/><circle cx="226.47" cy="439.32" r="1.750"/><circle cx="203.95" cy="436.75" r="1.750"/><circle cx="169.96" cy="436.14" r="1.750"/><circle cx="106.94" cy="432.23" r="1.750"/><circle cx="275.82" cy="462.5" r="1.750"/><circle cx="127.69" cy="473.2" r="1.750"/><circle cx="222.66" cy="452.61" r="1.750"/><circle cx="135.28" cy="455.73" r="1.750"/><circle cx="221.42" cy="439.57" r="1.750"/><circle cx="283.28" cy="464.82" r="1.750"/><circle cx="192.44" cy="429.71" r="1.750"/><circle cx="261.06" cy="423.12" r="1.750"/><circle cx="144.41" cy="435.07" r="1.750"/><circle cx="194.08" cy="423" r="1.750"/><circle cx="152.2" cy="445.81" r="1.750"/><circle cx="205.16" cy="403" r="1.750"/><circle cx="110.34" cy="469" r="1.750"/><circle cx="171.69" cy="453.21" r="1.750"/><circle cx="159.48" cy="429.46" r="1.750"/><circle cx="205.78" cy="426.7" r="1.750"/><circle cx="130.82" cy="459.01" r="1.750"/><circle cx="179.29" cy="416.33" r="1.750"/><circle cx="283.93" cy="442.8" r="1.750"/><circle cx="177.02" cy="400" r="1.750"/><circle cx="272.04" cy="462.83" r="1.750"/><circle cx="255.24" cy="415.38" r="1.750"/><circle cx="190.58" cy="445.99" r="1.750"/><circle cx="186.85" cy="411.67" r="1.750"/><circle cx="230.48" cy="416.61" r="1.750"/><circle cx="213.1" cy="438.87" r="1.750"/><circle cx="208.75" cy="456.07" r="1.750"/><circle cx="210.29" cy="404.96" r="1.750"/><circle cx="270.4" cy="447.83" r="1.750"/><circle cx="247.48" cy="399.31" r="1.750"/><circle cx="107.75" cy="405.45" r="1.750"/><circle cx="272.22" cy="468.32" r="1.750"/><circle cx="154.2" cy="471.88" r="1.750"/><circle cx="172.28" cy="405.56" r="1.750"/><circle cx="250.13" cy="415.95" r="1.750"/><circle cx="146.21" cy="458.53" r="1.750"/><circle cx="131.18" cy="413.45" r="1.750"/><circle cx="279.45" cy="399.09" r="1.750"/><circle cx="264.43" cy="442.39" r="1.750"/><circle cx="250.5" cy="423.58" r="1.750"/><circle cx="220.89" cy="458.82" r="1.750"/><circle cx="211.3" cy="428.59" r="1.750"/><circle cx="268.79" cy="456.45" r="1.750"/><circle cx="242.1" cy="461.65" r="1.750"/><circle cx="257.96" cy="417.05" r="1.750"/><circle cx="241.3" cy="425.27" r="1.750"/><circle cx="280.46" cy="449.73" r="1.750"/><circle cx="253.59" cy="430.15" r="1.750"/><circle cx="203.38" cy="457.9" r="1.750"/><circle cx="159.96" cy="469.65" r="1.750"/><circle cx="243.87" cy="411.9" r="1.750"/><circle cx="192.05" cy="418.61" r="1.750"/><circle cx="179.56" cy="398.85" r="1.750"/><circle cx="137.21" cy="458.57" r="1.750"/><circle cx="240.19" cy="432.02" r="1.750"/><circle cx="164.8" cy="399.89" r="1.750"/><circle cx="119.53" cy="412.77" r="1.750"/><circle cx="133.35" cy="409.04" r="1.750"/><circle cx="122.25" cy="410.55" r="1.750"/><circle cx="145.87" cy="398.44" r="1.750"/><circle cx="283.51" cy="406.81" r="1.750"/><circle cx="165.31" cy="407.18" r="1.750"/><circle cx="256.28" cy="425.4" r="1.750"/><circle cx="253.59" cy="462.63" r="1.750"/><circle cx="152.26" cy="459.22" r="1.750"/><circle cx="208.56" cy="416.23" r="1.750"/><circle cx="239.87" cy="459.59" r="1.750"/><circle cx="171.29" cy="438.48" r="1.750"/><circle cx="216.28" cy="429.67" r="1.750"/><circle cx="268.56" cy="413.43" r="1.750"/><circle cx="245.11" cy="405.33" r="1.750"/><circle cx="212.26" cy="450.19" r="1.750"/><circle cx="251.06" cy="410.36" r="1.750"/><circle cx="134.96" cy="464.47" r="1.750"/><circle cx="135.89" cy="447.86" r="1.750"/><circle cx="120.02" cy="449.51" r="1.750"/><circle cx="205.45" cy="405.23" r="1.750"/><circle cx="148.85" cy="414.85" r="1.750"/><circle cx="107.03" cy="448.12" r="1.750"/><circle cx="276.51" cy="469.29" r="1.750"/><circle cx="221.38" cy="412.62" r="1.750"/><circle cx="268.39" cy="419.15" r="1.750"/><circle cx="271.34" cy="458.8" r="1.750"/><circle cx="258.59" cy="436.5" r="1.750"/><circle cx="169.73" cy="460.04" r="1.750"/><circle cx="268.54" cy="422.07" r="1.750"/><circle cx="132.97" cy="436.85" r="1.750"/><circle cx="156.46" cy="429.9" r="1.750"/><circle cx="275.76" cy="442.03" r="1.750"/><circle cx="152.22" cy="408.61" r="1.750"/><circle cx="244.18" cy="431.45" r="1.750"/><circle cx="167.58" cy="456.4" r="1.750"/><circle cx="118.11" cy="422.75" r="1.750"/><circle cx="161.09" cy="466.31" r="1.750"/><circle cx="186.48" cy="440.29" r="1.750"/><circle cx="270.43" cy="468.95" r="1.750"/><circle cx="235.67" cy="403.76" r="1.750"/><circle cx="277.9" cy="453.48" r="1.750"/><circle cx="131.97" cy="455.94" r="1.750"/><circle cx="252.67" cy="406.15" r="1.750"/><circle cx="253.9" cy="403.5" r="1.750"/><circle cx="168.69" cy="453.39" r="1.750"/><circle cx="167.44" cy="411.98" r="1.750"/><circle cx="148.44" cy="408.35" r="1.750"/><circle cx="121.64" cy="435.35" r="1.750"/><circle cx="135.56" cy="400.62" r="1.750"/><circle cx="131.06" cy="398.4" r="1.750"/><circle cx="236.94" cy="405.33" r="1.750"/><circle cx="170.88" cy="469.81" r="1.750"/><circle cx="106.77" cy="440.08" r="1.750"/><circle cx="223.37" cy="429.11" r="1.750"/><circle cx="258.67" cy="433.46" r="1.750"/><circle cx="108.82" cy="399.42" r="1.750"/><circle cx="245.6" cy="409.24" r="1.750"/><circle cx="214.99" cy="405.47" r="1.750"/><circle cx="230.86" cy="462.19" r="1.750"/><circle cx="141.18" cy="398.34" r="1.750"/><circle cx="266.65" cy="416.76" r="1.750"/><circle cx="161.81" cy="406.94" r="1.750"/><circle cx="106.26" cy="408.69" r="1.750"/><circle cx="232.06" cy="458.54" r="1.750"/><circle cx="247.26" cy="429.44" r="1.750"/><circle cx="219.58" cy="462.44" r="1.750"/><circle cx="239.8" cy="418.83" r="1.750"/><circle cx="246.32" cy="456.37" r="1.750"/><circle cx="270.24" cy="400.67" r="1.750"/><circle cx="273.17" cy="449.74" r="1.750"/><circle cx="156.37" cy="462.36" r="1.750"/><circle cx="219.9" cy="435.03" r="1.750"/><circle cx="235.83" cy="425.61" r="1.750"/><circle cx="119.88" cy="465.36" r="1.750"/><circle cx="251.95" cy="432.16" r="1.750"/><circle cx="116.12" cy="425.62" r="1.750"/><circle cx="122.81" cy="458.52" r="1.750"/><circle cx="242.56" cy="449.8" r="1.750"/><circle cx="128.22" cy="463.32" r="1.750"/><circle cx="245.14" cy="419.77" r="1.750"/><circle cx="287.3" cy="403.4" r="1.750"/><circle cx="181.48" cy="447.85" r="1.750"/><circle cx="162.12" cy="403.33" r="1.750"/><circle cx="285.42" cy="399.7" r="1.750"/><circle cx="157.36" cy="433.47" r="1.750"/><circle cx="257.64" cy="442.07" r="1.750"/><circle cx="146.59" cy="403.91" r="1.750"/><circle cx="122.18" cy="469.32" r="1.750"/><circle cx="103.28" cy="432.42" r="1.750"/><circle cx="223.29" cy="442.39" r="1.750"/><circle cx="257.56" cy="449.61" r="1.750"/><circle cx="206.12" cy="471.69" r="1.750"/><circle cx="154.3" cy="422.92" r="1.750"/><circle cx="242.75" cy="467.79" r="1.750"/><circle cx="112.66" cy="446.35" r="1.750"/><circle cx="212.39" cy="409.41" r="1.750"/><circle cx="112.58" cy="451.16" r="1.750"/><circle cx="227.65" cy="409.38" r="1.750"/><circle cx="254.1" cy="468.07" r="1.750"/><circle cx="168.49" cy="439.69" r="1.750"/><circle cx="249.16" cy="448.21" r="1.750"/><circle cx="285.29" cy="449.64" r="1.750"/><circle cx="225.03" cy="466.05" r="1.750"/><circle cx="186.65" cy="466.08" r="1.750"/><circle cx="225.64" cy="412.53" r="1.750"/><circle cx="103.43" cy="439.82" r="1.750"/><circle cx="205.97" cy="431.46" r="1.750"/><circle cx="269.55" cy="415.08" r="1.750"/><circle cx="147.49" cy="428.04" r="1.750"/><circle cx="209.67" cy="434.68" r="1.750"/><circle cx="206.18" cy="419.42" r="1.750"/><circle cx="286.61" cy="446.76" r="1.750"/><circle cx="207.42" cy="413.88" r="1.750"/><circle cx="114.21" cy="422.7" r="1.750"/><circle cx="236.31" cy="419.69" r="1.750"/><circle cx="213.03" cy="422.41" r="1.750"/><circle cx="143.14" cy="444.86" r="1.750"/><circle cx="192.57" cy="456" r="1.750"/><circle cx="118.27" cy="420.24" r="1.750"/><circle cx="209.38" cy="399.81" r="1.750"/><circle cx="108.29" cy="451.7" r="1.750"/><circle cx="142.62" cy="433.1" r="1.750"/><circle cx="183.29" cy="398.47" r="1.750"/><circle cx="133.44" cy="459.85" r="1.750"/><circle cx="287.7" cy="408.67" r="1.750"/><circle cx="177.03" cy="469.85" r="1.750"/><circle cx="215.93" cy="442.14" r="1.750"/><circle cx="254.12" cy="456.66" r="1.750"/><circle cx="203.78" cy="399.43" r="1.750"/><circle cx="240" cy="410.42" r="1.750"/><circle cx="161.7" cy="411.8" r="1.750"/><circle cx="123.77" cy="461.26" r="1.750"/><circle cx="230.47" cy="459.85" r="1.750"/><circle cx="124.99" cy="410.1" r="1.750"/><circle cx="188.46" cy="425.43" r="1.750"/><circle cx="159.64" cy="442.8" r="1.750"/><circle cx="257.14" cy="421.92" r="1.750"/><circle cx="150.98" cy="448.74" r="1.750"/><circle cx="196.3" cy="400.33" r="1.750"/><circle cx="167.26" cy="468.88" r="1.750"/><circle cx="146.93" cy="435.17" r="1.750"/><circle cx="197.95" cy="423.33" r="1.750"/><circle cx="113.84" cy="409.92" r="1.750"/><circle cx="174.24" cy="461.86" r="1.750"/><circle cx="281.46" cy="422.55" r="1.750"/><circle cx="199.16" cy="411.85" r="1.750"/><circle cx="256.22" cy="452.53" r="1.750"/><circle cx="200.2" cy="410.24" r="1.750"/><circle cx="263.31" cy="471.06" r="1.750"/><circle cx="152.85" cy="419.12" r="1.750"/><circle cx="138.57" cy="399.78" r="1.750"/><circle cx="211.14" cy="403.78" r="1.750"/><circle cx="144.87" cy="464.58" r="1.750"/><circle cx="182.76" cy="458.81" r="1.750"/><circle cx="107.3" cy="459.37" r="1.750"/><circle cx="178.38" cy="456.56" r="1.750"/><circle cx="133.53" cy="445.72" r="1.750"/><circle cx="273.33" cy="436.32" r="1.750"/><circle cx="214.9" cy="472.2" r="1.750"/><circle cx="223.83" cy="436.15" r="1.750"/><circle cx="116.22" cy="434.85" r="1.750"/><circle cx="236.71" cy="466.02" r="1.750"/><circle cx="219.49" cy="430.23" r="1.750"/><circle cx="261.67" cy="467.79" r="1.750"/><circle cx="244.21" cy="472.8" r="1.750"/><circle cx="110.23" cy="410.16" r="1.750"/><circle cx="247.23" cy="427.08" r="1.750"/><circle cx="112.79" cy="420.39" r="1.750"/><circle cx="129.58" cy="454.87" r="1.750"/><circle cx="164.64" cy="433.47" r="1.750"/><circle cx="197.93" cy="410.36" r="1.750"/><circle cx="255.68" cy="418.38" r="1.750"/><circle cx="168.17" cy="431.43" r="1.750"/><circle cx="123.38" cy="453.05" r="1.750"/><circle cx="109.49" cy="461.03" r="1.750"/><circle cx="261.07" cy="435.77" r="1.750"/><circle cx="243.87" cy="417.07" r="1.750"/><circle cx="216.95" cy="444.66" r="1.750"/><circle cx="209.98" cy="444.93" r="1.750"/><circle cx="247.88" cy="418.44" r="1.750"/><circle cx="264.33" cy="448.3" r="1.750"/><circle cx="259.54" cy="406.8" r="1.750"/><circle cx="197.8" cy="398.8" r="1.750"/><circle cx="154.9" cy="410.09" r="1.750"/><circle cx="173.32" cy="436.96" r="1.750"/><circle cx="160.92" cy="458.46" r="1.750"/><circle cx="239.34" cy="435.85" r="1.750"/><circle cx="170.62" cy="416.02" r="1.750"/><circle cx="142.58" cy="451.61" r="1.750"/><circle cx="289.03" cy="428.04" r="1.750"/><circle cx="118.35" cy="438.65" r="1.750"/><circle cx="236.26" cy="469.24" r="1.750"/><circle cx="233.66" cy="452.19" r="1.750"/><circle cx="165.97" cy="438.25" r="1.750"/><circle cx="179.1" cy="402.09" r="1.750"/><circle cx="197.51" cy="443.41" r="1.750"/><circle cx="286.18" cy="459.17" r="1.750"/><circle cx="117.48" cy="403.68" r="1.750"/><circle cx="133.41" cy="439.87" r="1.750"/><circle cx="167.42" cy="448.15" r="1.750"/><circle cx="150.87" cy="403.29" r="1.750"/><circle cx="147.15" cy="468.28" r="1.750"/><circle cx="235.14" cy="462.81" r="1.750"/><circle cx="148.49" cy="418.25" r="1.750"/><circle cx="162.65" cy="461.72" r="1.750"/><circle cx="214.23" cy="444.8" r="1.750"/><circle cx="276.45" cy="422.72" r="1.750"/><circle cx="236.73" cy="471.23" r="1.750"/><circle cx="229.58" cy="464.92" r="1.750"/><circle cx="244.12" cy="458.92" r="1.750"/><circle cx="116.4" cy="464.48" r="1.750"/><circle cx="140.83" cy="421.55" r="1.750"/><circle cx="233.99" cy="426.27" r="1.750"/><circle cx="279.21" cy="445.05" r="1.750"/><circle cx="267.9" cy="446" r="1.750"/><circle cx="247.17" cy="435" r="1.750"/><circle cx="127.55" cy="422.64" r="1.750"/><circle cx="257.53" cy="456.09" r="1.750"/><circle cx="154.99" cy="436.19" r="1.750"/><circle cx="251.26" cy="403.69" r="1.750"/><circle cx="206.27" cy="438.71" r="1.750"/><circle cx="236.24" cy="412.59" r="1.750"/><circle cx="207.32" cy="461.98" r="1.750"/><circle cx="264.98" cy="456.49" r="1.750"/><circle cx="183.81" cy="413.15" r="1.750"/><circle cx="150.03" cy="445.06" r="1.750"/><circle cx="176.99" cy="459.26" r="1.750"/><circle cx="234.3" cy="442.8" r="1.750"/><circle cx="194.55" cy="438.51" r="1.750"/><circle cx="218.36" cy="438.04" r="1.750"/><circle cx="273.52" cy="455.49" r="1.750"/><circle cx="138.81" cy="418.56" r="1.750"/><circle cx="241.37" cy="412.47" r="1.750"/><circle cx="207.64" cy="401.68" r="1.750"/><circle cx="176.72" cy="424.93" r="1.750"/><circle cx="123.6" cy="465.21" r="1.750"/><circle cx="265.73" cy="421.94" r="1.750"/><circle cx="250.78" cy="442.53" r="1.750"/><circle cx="198.27" cy="429.24" r="1.750"/><circle cx="205.64" cy="448.54" r="1.750"/><circle cx="118.28" cy="441.25" r="1.750"/><circle cx="287.22" cy="452.66" r="1.750"/><circle cx="201.42" cy="430.01" r="1.750"/><circle cx="265.7" cy="403.06" r="1.750"/><circle cx="286.92" cy="438.54" r="1.750"/><circle cx="142.62" cy="472.84" r="1.750"/><circle cx="213.18" cy="425.43" r="1.750"/><circle cx="288.11" cy="455.08" r="1.750"/><circle cx="110.75" cy="442.06" r="1.750"/><circle cx="180.01" cy="413.32" r="1.750"/><circle cx="237.89" cy="444.63" r="1.750"/><circle cx="120.12" cy="428.54" r="1.750"/><circle cx="189.15" cy="429.2" r="1.750"/><circle cx="152.82" cy="411.73" r="1.750"/><circle cx="128.48" cy="428.17" r="1.750"/><circle cx="260.65" cy="442.17" r="1.750"/><circle cx="229.09" cy="471.76" r="1.750"/><circle cx="198.14" cy="458.65" r="1.750"/><circle cx="174.32" cy="429.89" r="1.750"/><circle cx="282.58" cy="451.66" r="1.750"/><circle cx="277.45" cy="402.53" r="1.750"/><circle cx="233.91" cy="398.73" r="1.750"/><circle cx="175.42" cy="416.16" r="1.750"/><circle cx="104.07" cy="412.55" r="1.750"/><circle cx="149.14" cy="466.59" r="1.750"/><circle cx="209.95" cy="425.45" r="1.750"/><circle cx="111.77" cy="439.2" r="1.750"/><circle cx="221.13" cy="433.09" r="1.750"/><circle cx="217.91" cy="413.34" r="1.750"/><circle cx="188.24" cy="399.26" r="1.750"/><circle cx="168.72" cy="419.61" r="1.750"/><circle cx="105.65" cy="422.33" r="1.750"/><circle cx="196.09" cy="405" r="1.750"/><circle cx="166.17" cy="442.91" r="1.750"/><circle cx="279.53" cy="464.53" r="1.750"/><circle cx="153.07" cy="438.42" r="1.750"/><circle cx="134.33" cy="432.29" r="1.750"/><circle cx="113.82" cy="448.75" r="1.750"/><circle cx="164.57" cy="413.14" r="1.750"/><circle cx="141.28" cy="405.93" r="1.750"/><circle cx="261.06" cy="455.79" r="1.750"/><circle cx="249.39" cy="429.98" r="1.750"/><circle cx="134.09" cy="426.61" r="1.750"/><circle cx="284.83" cy="461.05" r="1.750"/><circle cx="104.11" cy="427" r="1.750"/><circle cx="168.5" cy="398.97" r="1.750"/><circle cx="155.58" cy="449.64" r="1.750"/><circle cx="191.89" cy="451.53" r="1.750"/><circle cx="277.07" cy="436.69" r="1.750"/><circle cx="133.07" cy="403.86" r="1.750"/><circle cx="225.39" cy="473.28" r="1.750"/><circle cx="196.79" cy="461.75" r="1.750"/><circle cx="289.16" cy="469.84" r="1.750"/><circle cx="260.62" cy="446.49" r="1.750"/><circle cx="118.93" cy="451.99" r="1.750"/><circle cx="282.11" cy="398.48" r="1.750"/><circle cx="202.9" cy="425.96" r="1.750"/><circle cx="264.47" cy="438.39" r="1.750"/><circle cx="145.06" cy="445.05" r="1.750"/><circle cx="106.54" cy="415.77" r="1.750"/><circle cx="212.62" cy="441.42" r="1.750"/><circle cx="179.95" cy="425.82" r="1.750"/><circle cx="124.26" cy="417.07" r="1.750"/><circle cx="283.34" cy="435.79" r="1.750"/><circle cx="180.6" cy="432.03" r="1.750"/><circle cx="267.14" cy="426.3" r="1.750"/><circle cx="225.91" cy="406.47" r="1.750"/><circle cx="133.51" cy="429.02" r="1.750"/><circle cx="289.47" cy="448.04" r="1.750"/><circle cx="250.08" cy="455.5" r="1.750"/><circle cx="158.78" cy="454.64" r="1.750"/><circle cx="259.34" cy="466.33" r="1.750"/><circle cx="237.09" cy="458.98" r="1.750"/><circle cx="193.47" cy="401.92" r="1.750"/><circle cx="197.71" cy="435.19" r="1.750"/><circle cx="232.15" cy="466.28" r="1.750"/><circle cx="154.72" cy="415.76" r="1.750"/><circle cx="172.82" cy="471.99" r="1.750"/><circle cx="277.28" cy="428.74" r="1.750"/><circle cx="146.53" cy="407.09" r="1.750"/><circle cx="110.13" cy="429.7" r="1.750"/><circle cx="154.72" cy="403.58" r="1.750"/><circle cx="203.97" cy="430.27" r="1.750"/><circle cx="173.58" cy="458.65" r="1.750"/><circle cx="114.68" cy="454.56" r="1.750"/><circle cx="150.31" cy="473.24" r="1.750"/><circle cx="256.91" cy="463.36" r="1.750"/><circle cx="216.47" cy="416.15" r="1.750"/><circle cx="225.75" cy="419.26" r="1.750"/><circle cx="159.1" cy="463.17" r="1.750"/><circle cx="141.18" cy="439.56" r="1.750"/><circle cx="110.15" cy="448.81" r="1.750"/><circle cx="227.16" cy="454.87" r="1.750"/><circle cx="200.37" cy="435.92" r="1.750"/><circle cx="194.62" cy="472.15" r="1.750"/><circle cx="128.27" cy="410.38" r="1.750"/><circle cx="260.98" cy="439.53" r="1.750"/><circle cx="151.62" cy="456.57" r="1.750"/><circle cx="105.08" cy="452.07" r="1.750"/><circle cx="254.04" cy="408.96" r="1.750"/><circle cx="279.75" cy="409.95" r="1.750"/><circle cx="258.77" cy="402.97" r="1.750"/><circle cx="108.98" cy="436.12" r="1.750"/><circle cx="148.86" cy="398.88" r="1.750"/><circle cx="244.75" cy="425.8" r="1.750"/><circle cx="162.25" cy="435.32" r="1.750"/><circle cx="148.55" cy="438.89" r="1.750"/><circle cx="151.78" cy="416.57" r="1.750"/><circle cx="186.7" cy="432.37" r="1.750"/><circle cx="206.33" cy="465.68" r="1.750"/><circle cx="285.68" cy="465.58" r="1.750"/><circle cx="132.55" cy="441.33" r="1.750"/><circle cx="277.6" cy="449.56" r="1.750"/><circle cx="229.31" cy="427.02" r="1.750"/><circle cx="205.01" cy="455.07" r="1.750"/><circle cx="144.6" cy="471.06" r="1.750"/><circle cx="112.73" cy="428.97" r="1.750"/><circle cx="283.14" cy="425.5" r="1.750"/><circle cx="202.34" cy="406.8" r="1.750"/><circle cx="223.66" cy="403.35" r="1.750"/><circle cx="281.74" cy="472.61" r="1.750"/><circle cx="275.59" cy="413.37" r="1.750"/><circle cx="196.2" cy="424.92" r="1.750"/><circle cx="227.76" cy="462.41" r="1.750"/><circle cx="224.65" cy="425.65" r="1.750"/><circle cx="125.86" cy="436.69" r="1.750"/><circle cx="111.87" cy="472.37" r="1.750"/><circle cx="106.81" cy="436.99" r="1.750"/><circle cx="134.62" cy="419.62" r="1.750"/><circle cx="181.88" cy="422.69" r="1.750"/><circle cx="120.34" cy="401.97" r="1.750"/><circle cx="120.32" cy="423.22" r="1.750"/><circle cx="188.72" cy="402.49" r="1.750"/><circle cx="160.16" cy="426.55" r="1.750"/><circle cx="260.3" cy="419.47" r="1.750"/><circle cx="118.11" cy="429.42" r="1.750"/><circle cx="113.12" cy="415.93" r="1.750"/><circle cx="215.91" cy="421.75" r="1.750"/><circle cx="169.58" cy="454.84" r="1.750"/><circle cx="135.37" cy="412.26" r="1.750"/><circle cx="108.47" cy="419.37" r="1.750"/><circle cx="144.38" cy="416.63" r="1.750"/><circle cx="286.33" cy="431.71" r="1.750"/><circle cx="270.49" cy="473.01" r="1.750"/><circle cx="253.19" cy="447.98" r="1.750"/><circle cx="268.18" cy="428.43" r="1.750"/><circle cx="163.9" cy="466.4" r="1.750"/><circle cx="139.44" cy="435.34" r="1.750"/><circle cx="240.21" cy="445.72" r="1.750"/><circle cx="102.87" cy="406.34" r="1.750"/><circle cx="240.06" cy="400.06" r="1.750"/><circle cx="174.57" cy="402.27" r="1.750"/><circle cx="138.5" cy="432.95" r="1.750"/><circle cx="274.51" cy="433.51" r="1.750"/><circle cx="202.04" cy="411.99" r="1.750"/><circle cx="172.24" cy="465.21" r="1.750"/><circle cx="153.6" cy="405.66" r="1.750"/><circle cx="282" cy="418.97" r="1.750"/><circle cx="141.02" cy="403.05" r="1.750"/><circle cx="135.37" cy="451.87" r="1.750"/><circle cx="235.2" cy="429.35" r="1.750"/><circle cx="139.09" cy="461.63" r="1.750"/><circle cx="278.04" cy="438.53" r="1.750"/><circle cx="127.09" cy="439.16" r="1.750"/><circle cx="129.21" cy="434.92" r="1.750"/><circle cx="265.06" cy="462.97" r="1.750"/><circle cx="216.57" cy="455.52" r="1.750"/><circle cx="128.1" cy="402.06" r="1.750"/><circle cx="264.6" cy="420.36" r="1.750"/><circle cx="271.93" cy="418.83" r="1.750"/><circle cx="131.57" cy="406.48" r="1.750"/><circle cx="126.48" cy="452.63" r="1.750"/><circle cx="164.92" cy="446" r="1.750"/><circle cx="211.98" cy="415.49" r="1.750"/><circle cx="205.1" cy="443.49" r="1.750"/><circle cx="194.49" cy="465.13" r="1.750"/><circle cx="273.55" cy="408.97" r="1.750"/><circle cx="184.27" cy="446.15" r="1.750"/><circle cx="234.84" cy="416.95" r="1.750"/><circle cx="156.2" cy="467.98" r="1.750"/><circle cx="262.5" cy="461.79" r="1.750"/><circle cx="105.04" cy="428.23" r="1.750"/><circle cx="249.35" cy="433.26" r="1.750"/><circle cx="140.22" cy="410.04" r="1.750"/><circle cx="248.11" cy="471.59" r="1.750"/><circle cx="151.87" cy="463.13" r="1.750"/><circle cx="210.7" cy="459.48" r="1.750"/><circle cx="175.56" cy="473.02" r="1.750"/><circle cx="226.97" cy="441.58" r="1.750"/><circle cx="256.49" cy="413.57" r="1.750"/><circle cx="248.43" cy="411.54" r="1.750"/><circle cx="218.28" cy="453.23" r="1.750"/><circle cx="184.02" cy="431.47" r="1.750"/><circle cx="171.57" cy="409.38" r="1.750"/><circle cx="120.28" cy="462.27" r="1.750"/><circle cx="265.47" cy="468.94" r="1.750"/><circle cx="112.03" cy="466.66" r="1.750"/><circle cx="177.93" cy="462.08" r="1.750"/><circle cx="107.76" cy="425.23" r="1.750"/><circle cx="233.68" cy="413.53" r="1.750"/><circle cx="153.18" cy="432.34" r="1.750"/><circle cx="219.15" cy="465.09" r="1.750"/><circle cx="161.06" cy="432.56" r="1.750"/><circle cx="201.17" cy="414.94" r="1.750"/><circle cx="267.56" cy="465.62" r="1.750"/><circle cx="111.62" cy="399.71" r="1.750"/><circle cx="234.57" cy="450.05" r="1.750"/><circle cx="179.06" cy="453.47" r="1.750"/><circle cx="145.37" cy="425.32" r="1.750"/><circle cx="115.58" cy="451.65" r="1.750"/><circle cx="199.78" cy="425.2" r="1.750"/><circle cx="127.57" cy="459.74" r="1.750"/><circle cx="124.08" cy="428.3" r="1.750"/><circle cx="104.19" cy="464.31" r="1.750"/><circle cx="287.55" cy="442.33" r="1.750"/><circle cx="140.2" cy="448.96" r="1.750"/><circle cx="226.44" cy="449.12" r="1.750"/><circle cx="217.14" cy="405.01" r="1.750"/><circle cx="209.38" cy="441.76" r="1.750"/><circle cx="105.57" cy="441.57" r="1.750"/><circle cx="252.72" cy="445.28" r="1.750"/><circle cx="188.41" cy="417.03" r="1.750"/><circle cx="276.08" cy="466.14" r="1.750"/><circle cx="137.23" cy="451.9" r="1.750"/><circle cx="106.16" cy="467.89" r="1.750"/><circle cx="279.64" cy="458.07" r="1.750"/><circle cx="268.57" cy="408.75" r="1.750"/><circle cx="137.28" cy="466.3" r="1.750"/><circle cx="195.02" cy="418.72" r="1.750"/><circle cx="129.43" cy="425.83" r="1.750"/><circle cx="141.7" cy="459.44" r="1.750"/><circle cx="181.57" cy="469.49" r="1.750"/><circle cx="182.64" cy="414.98" r="1.750"/><circle cx="156.33" cy="406.09" r="1.750"/><circle cx="167.52" cy="409.85" r="1.750"/><circle cx="205.3" cy="462.17" r="1.750"/><circle cx="170.64" cy="403.65" r="1.750"/><circle cx="120.15" cy="458.3" r="1.750"/><circle cx="278.42" cy="473.13" r="1.750"/><circle cx="169.43" cy="426.67" r="1.750"/><circle cx="122.46" cy="446.49" r="1.750"/><circle cx="243.84" cy="439.22" r="1.750"/><circle cx="189.66" cy="443.14" r="1.750"/><circle cx="202.04" cy="451.96" r="1.750"/><circle cx="262.49" cy="428.45" r="1.750"/><circle cx="137.42" cy="422.96" r="1.750"/><circle cx="242.32" cy="442.21" r="1.750"/><circle cx="232.3" cy="432.59" r="1.750"/><circle cx="192.23" cy="399.23" r="1.750"/><circle cx="271.77" cy="453.47" r="1.750"/><circle cx="274.31" cy="398.92" r="1.750"/><circle cx="121.43" cy="416.3" r="1.750"/><circle cx="274.1" cy="445.4" r="1.750"/><circle cx="163.81" cy="419.72" r="1.750"/><circle cx="281.11" cy="429.77" r="1.750"/><circle cx="110.41" cy="455.63" r="1.750"/><circle cx="188.76" cy="405.99" r="1.750"/><circle cx="231.76" cy="408.36" r="1.750"/><circle cx="180.48" cy="460.09" r="1.750"/><circle cx="216.99" cy="472.73" r="1.750"/><circle cx="141.4" cy="420.45" r="1.750"/><circle cx="274.77" cy="453.18" r="1.750"/><circle cx="239.5" cy="414.92" r="1.750"/><circle cx="263.76" cy="445.51" r="1.750"/><circle cx="148.42" cy="449.81" r="1.750"/><circle cx="225.61" cy="452.46" r="1.750"/><circle cx="241.5" cy="472.78" r="1.750"/><circle cx="160.98" cy="446.06" r="1.750"/><circle cx="230.14" cy="407.2" r="1.750"/><circle cx="135.21" cy="462" r="1.750"/><circle cx="281.64" cy="442.56" r="1.750"/><circle cx="146.8" cy="420.21" r="1.750"/><circle cx="248.44" cy="451.18" r="1.750"/><circle cx="188.28" cy="471.7" r="1.750"/><circle cx="185" cy="455.91" r="1.750"/><circle cx="179.55" cy="446.22" r="1.750"/><circle cx="195.32" cy="412.74" r="1.750"/><circle cx="200.22" cy="442.85" r="1.750"/><circle cx="123.84" cy="412.97" r="1.750"/><circle cx="170.18" cy="462.03" r="1.750"/><circle cx="139.6" cy="468.21" r="1.750"/><circle cx="251.16" cy="461.97" r="1.750"/><circle cx="199.06" cy="431.87" r="1.750"/><circle cx="272.68" cy="441.81" r="1.750"/><circle cx="211.53" cy="454.71" r="1.750"/><circle cx="214.03" cy="418.99" r="1.750"/><circle cx="115.96" cy="418.67" r="1.750"/><circle cx="135.3" cy="409.26" r="1.750"/><circle cx="214.4" cy="465.45" r="1.750"/><circle cx="174.96" cy="468.22" r="1.750"/><circle cx="145.77" cy="433.69" r="1.750"/><circle cx="202.05" cy="403.18" r="1.750"/><circle cx="200.26" cy="469.88" r="1.750"/><circle cx="143.71" cy="401.85" r="1.750"/><circle cx="215.82" cy="436.83" r="1.750"/><circle cx="174.05" cy="422.21" r="1.750"/><circle cx="270.62" cy="425.18" r="1.750"/><circle cx="126.09" cy="405.31" r="1.750"/><circle cx="202.34" cy="432.25" r="1.750"/><circle cx="147.25" cy="442.22" r="1.750"/><circle cx="263.39" cy="457.83" r="1.750"/><circle cx="114.69" cy="413.02" r="1.750"/><circle cx="162.6" cy="415.04" r="1.750"/><circle cx="262.91" cy="399.25" r="1.750"/><circle cx="228.47" cy="453.11" r="1.750"/><circle cx="163.6" cy="426.67" r="1.750"/><circle cx="161.79" cy="455.23" r="1.750"/><circle cx="137.41" cy="438.51" r="1.750"/><circle cx="270.62" cy="413.69" r="1.750"/><circle cx="138.25" cy="472.29" r="1.750"/><circle cx="237.4" cy="452.11" r="1.750"/><circle cx="190.6" cy="465.71" r="1.750"/><circle cx="246.14" cy="403.24" r="1.750"/><circle cx="114.6" cy="402.76" r="1.750"/><circle cx="151.26" cy="429.68" r="1.750"/><circle cx="151.9" cy="436.5" r="1.750"/><circle cx="262.23" cy="415.92" r="1.750"/><circle cx="207.75" cy="399.25" r="1.750"/><circle cx="153.54" cy="466.51" r="1.750"/><circle cx="255.94" cy="472.86" r="1.750"/><circle cx="177.6" cy="442.03" r="1.750"/><circle cx="159.33" cy="402.3" r="1.750"/><circle cx="115.45" cy="431.93" r="1.750"/><circle cx="170.27" cy="442.13" r="1.750"/><circle cx="256.61" cy="464.55" r="1.750"/><circle cx="229.84" cy="418.82" r="1.750"/><circle cx="268.29" cy="403.13" r="1.750"/><circle cx="135.57" cy="403.88" r="1.750"/><circle cx="226.6" cy="430.34" r="1.750"/><circle cx="269.3" cy="434.68" r="1.750"/><circle cx="144.13" cy="441.28" r="1.750"/><circle cx="235.67" cy="455.26" r="1.750"/><circle cx="288.14" cy="435.66" r="1.750"/><circle cx="176.76" cy="432.73" r="1.750"/><circle cx="219.38" cy="416.52" r="1.750"/><circle cx="171.4" cy="425.35" r="1.750"/><circle cx="240.64" cy="465.78" r="1.750"/><circle cx="114.64" cy="399.53" r="1.750"/><circle cx="261.24" cy="449.03" r="1.750"/><circle cx="249.38" cy="465.39" r="1.750"/><circle cx="229.64" cy="411.53" r="1.750"/><circle cx="108.37" cy="465.3" r="1.750"/><circle cx="195.18" cy="445.85" r="1.750"/><circle cx="125.82" cy="400.24" r="1.750"/><circle cx="111.67" cy="411.88" r="1.750"/><circle cx="264.83" cy="435.99" r="1.750"/><circle cx="137.74" cy="445.36" r="1.750"/><circle cx="210.99" cy="420.31" r="1.750"/><circle cx="263.52" cy="453.48" r="1.750"/><circle cx="257.28" cy="429.38" r="1.750"/><circle cx="123.9" cy="443.32" r="1.750"/><circle cx="132.61" cy="422.76" r="1.750"/><circle cx="116.1" cy="438.47" r="1.750"/><circle cx="213.42" cy="461.02" r="1.750"/><circle cx="285.58" cy="469.82" r="1.750"/><circle cx="243.68" cy="430.38" r="1.750"/><circle cx="203.02" cy="465.55" r="1.750"/><circle cx="269.51" cy="442.33" r="1.750"/><circle cx="238.08" cy="431.3" r="1.750"/><circle cx="147.29" cy="462.17" r="1.750"/><circle cx="281.28" cy="455.84" r="1.750"/><circle cx="180.87" cy="456.77" r="1.750"/><circle cx="104.2" cy="419.11" r="1.750"/><circle cx="271.99" cy="446.42" r="1.750"/><circle cx="224.59" cy="467.75" r="1.750"/><circle cx="151.61" cy="441.53" r="1.750"/><circle cx="191.41" cy="432.25" r="1.750"/><circle cx="247.21" cy="462.02" r="1.750"/><circle cx="185.86" cy="448.14" r="1.750"/><circle cx="268.44" cy="433.65" r="1.750"/><circle cx="115.71" cy="445.99" r="1.750"/><circle cx="243.4" cy="403.8" r="1.750"/><circle cx="236.71" cy="439.78" r="1.750"/><circle cx="279.84" cy="420.25" r="1.750"/><circle cx="222.91" cy="400.12" r="1.750"/><circle cx="156.95" cy="445.07" r="1.750"/><circle cx="220.48" cy="423.78" r="1.750"/><circle cx="116.44" cy="471.11" r="1.750"/><circle cx="135.19" cy="472.55" r="1.750"/><circle cx="222.11" cy="405.97" r="1.750"/><circle cx="262.48" cy="465.98" r="1.750"/><circle cx="238.44" cy="455.38" r="1.750"/><circle cx="140.74" cy="429.97" r="1.750"/><circle cx="105.28" cy="403.04" r="1.750"/><circle cx="257.13" cy="400.23" r="1.750"/><circle cx="259.5" cy="426" r="1.750"/><circle cx="244.84" cy="452.47" r="1.750"/><circle cx="146.7" cy="421.6" r="1.750"/><circle cx="274.28" cy="403.71" r="1.750"/><circle cx="251.86" cy="419.84" r="1.750"/><circle cx="250.56" cy="435.16" r="1.750"/><circle cx="134.26" cy="407.04" r="1.750"/><circle cx="240.52" cy="451.65" r="1.750"/><circle cx="165.21" cy="459.15" r="1.750"/><circle cx="109.39" cy="402.69" r="1.750"/><circle cx="216.32" cy="463.31" r="1.750"/><circle cx="131.04" cy="419.46" r="1.750"/><circle cx="283.93" cy="423.53" r="1.750"/><circle cx="218.75" cy="403.13" r="1.750"/><circle cx="184.65" cy="462.27" r="1.750"/><circle cx="179.98" cy="465.95" r="1.750"/><circle cx="220.85" cy="446.19" r="1.750"/><circle cx="142.97" cy="463.21" r="1.750"/><circle cx="142.4" cy="465.62" r="1.750"/><circle cx="158.33" cy="438" r="1.750"/><circle cx="172.84" cy="413.69" r="1.750"/><circle cx="254.58" cy="441.26" r="1.750"/><circle cx="233.86" cy="418.28" r="1.750"/><circle cx="245.45" cy="422.5" r="1.750"/><circle cx="114.46" cy="469.82" r="1.750"/><circle cx="274.46" cy="437.94" r="1.750"/><circle cx="143.87" cy="408.27" r="1.750"/><circle cx="228.44" cy="398.44" r="1.750"/><circle cx="161.74" cy="428.79" r="1.750"/><circle cx="177.43" cy="409.46" r="1.750"/><circle cx="262.72" cy="408.51" r="1.750"/><circle cx="279.75" cy="431.77" r="1.750"/><circle cx="102.85" cy="472.08" r="1.750"/><circle cx="194.5" cy="458.59" r="1.750"/><circle cx="210.94" cy="472.52" r="1.750"/><circle cx="258.39" cy="468.6" r="1.750"/><circle cx="108.02" cy="472.55" r="1.750"/><circle cx="185.94" cy="435.28" r="1.750"/><circle cx="129.1" cy="415.61" r="1.750"/><circle cx="223.4" cy="421.8" r="1.750"/><circle cx="181.22" cy="441.3" r="1.750"/><circle cx="255.54" cy="438.97" r="1.750"/><circle cx="132.88" cy="416.17" r="1.750"/><circle cx="112.08" cy="406.09" r="1.750"/><circle cx="198.69" cy="445.19" r="1.750"/><circle cx="237.98" cy="422.96" r="1.750"/><circle cx="287.47" cy="406.01" r="1.750"/><circle cx="123.68" cy="419.6" r="1.750"/><circle cx="181.97" cy="434.71" r="1.750"/><circle cx="110.23" cy="414.97" r="1.750"/><circle cx="207.49" cy="448.24" r="1.750"/><circle cx="169.72" cy="448.06" r="1.750"/><circle cx="283.73" cy="458.96" r="1.750"/><circle cx="274.27" cy="430.25" r="1.750"/><circle cx="226.89" cy="414.9" r="1.750"/></g></g></g>
<clipPath id="t2"><rect x="310.5" y="349.5" width="181.500" height="181.400"/></clipPath>
<linearGradient id="g2" x1="0" y1="0" x2="0" y2="1"><stop offset="0" stop-color="#c2d6f0"/><stop offset="0.600" stop-color="#b4cfee"/><stop offset="1" stop-color="#abc9ec" stop-opacity="0.900"/></linearGradient>
<g clip-path="url(#t2)"><rect x="310.5" y="461.5" width="181.500" height="67" fill="#f1eee7"/><path d="M308.5 471.5q16 -8 34 0q8 12 -4 22q-18 8 -32 -2z" fill="#c6deaa"/><path d="M422.5 499.5q20 -16 44 -8l18 -14v40h-68q-8 -10 6 -18z" fill="#cfe3b8"/><path d="M468 504.5l24 -20v44h-34z" fill="#e4e6b4"/><path d="M402.5 507.5q8 -5 14 0l2 6q-8 5 -16 0z" fill="#d9d4c4"/><path d="M356.5 521.5q10 -4 18 2l-6 6h-12z" fill="#cfe3b8"/><rect x="310.5" y="457.5" width="181.500" height="42" fill="#c6dcf4" opacity="0.450"/><g fill="#1c78c6"><circle cx="338.45" cy="491.2" r="1.900"/><circle cx="430.01" cy="472.95" r="1.900"/><circle cx="470.29" cy="507.28" r="1.900"/><circle cx="350.25" cy="505.56" r="1.900"/><circle cx="382.58" cy="482.84" r="1.900"/><circle cx="489.67" cy="496.83" r="1.900"/><circle cx="339.73" cy="481.11" r="1.900"/><circle cx="403.82" cy="478.42" r="1.900"/><circle cx="345.93" cy="477.85" r="1.900"/><circle cx="441.21" cy="466.99" r="1.900"/><circle cx="410.78" cy="481.38" r="1.900"/><circle cx="313.77" cy="478.21" r="1.900"/><circle cx="423.43" cy="483.65" r="1.900"/><circle cx="322.14" cy="509.93" r="1.900"/><circle cx="453.19" cy="507.83" r="1.900"/><circle cx="329.47" cy="476.42" r="1.900"/><circle cx="317.67" cy="494.06" r="1.900"/><circle cx="359.45" cy="472.49" r="1.900"/><circle cx="386.93" cy="501.93" r="1.900"/><circle cx="458.74" cy="476.23" r="1.900"/><circle cx="337.54" cy="502.53" r="1.900"/><circle cx="413.78" cy="490.54" r="1.900"/><circle cx="326.69" cy="469.49" r="1.900"/><circle cx="435.07" cy="480.93" r="1.900"/><circle cx="323.61" cy="504.18" r="1.900"/><circle cx="425.33" cy="495.19" r="1.900"/><circle cx="325.66" cy="498.21" r="1.900"/><circle cx="322.56" cy="498.61" r="1.900"/><circle cx="392.63" cy="478.42" r="1.900"/><circle cx="410.6" cy="503.15" r="1.900"/><circle cx="358.98" cy="472.48" r="1.900"/><circle cx="405.87" cy="475.7" r="1.900"/><circle cx="330.31" cy="473.54" r="1.900"/><circle cx="319.62" cy="474.72" r="1.900"/><circle cx="366.97" cy="477.48" r="1.900"/><circle cx="447.97" cy="477.07" r="1.900"/><circle cx="401.02" cy="474.04" r="1.900"/><circle cx="373.31" cy="466.87" r="1.900"/><circle cx="355.83" cy="466.59" r="1.900"/><circle cx="443.19" cy="484.94" r="1.900"/><circle cx="344.79" cy="482.45" r="1.900"/><circle cx="479.67" cy="471.64" r="1.900"/><circle cx="458.72" cy="481.13" r="1.900"/><circle cx="400.1" cy="496.95" r="1.900"/><circle cx="381.65" cy="483.47" r="1.900"/><circle cx="434.98" cy="509.46" r="1.900"/><circle cx="372.53" cy="496.82" r="1.900"/><circle cx="438.42" cy="487.98" r="1.900"/><circle cx="383.75" cy="478.66" r="1.900"/><circle cx="320.34" cy="472.5" r="1.900"/><circle cx="323.3" cy="492.28" r="1.900"/><circle cx="356.76" cy="473.59" r="1.900"/><circle cx="325.79" cy="497.33" r="1.900"/><circle cx="468.07" cy="489.32" r="1.900"/><circle cx="361.53" cy="475.8" r="1.900"/><circle cx="363.54" cy="481.97" r="1.900"/><circle cx="339.01" cy="481.55" r="1.900"/><circle cx="358.15" cy="506.58" r="1.900"/><circle cx="486.54" cy="484.81" r="1.900"/><circle cx="354.74" cy="507.05" r="1.900"/><circle cx="366.53" cy="478.92" r="1.900"/><circle cx="310.69" cy="479.64" r="1.900"/><circle cx="396.41" cy="483.34" r="1.900"/><circle cx="346.88" cy="483.4" r="1.900"/><circle cx="311.4" cy="476.38" r="1.900"/><circle cx="326.75" cy="480.16" r="1.900"/><circle cx="318.04" cy="467.25" r="1.900"/><circle cx="365.57" cy="475.55" r="1.900"/><circle cx="416.49" cy="484.21" r="1.900"/><circle cx="446.35" cy="488.81" r="1.900"/><circle cx="440.09" cy="499.64" r="1.900"/><circle cx="381" cy="478.06" r="1.900"/><circle cx="488.74" cy="473.16" r="1.900"/><circle cx="441.57" cy="488.26" r="1.900"/><circle cx="318.43" cy="496.99" r="1.900"/><circle cx="471.94" cy="487.66" r="1.900"/><circle cx="443.33" cy="495.74" r="1.900"/><circle cx="335.71" cy="484.03" r="1.900"/><circle cx="401.79" cy="496.97" r="1.900"/><circle cx="456.15" cy="496.5" r="1.900"/><circle cx="416.22" cy="500.57" r="1.900"/><circle cx="434.1" cy="490.24" r="1.900"/><circle cx="352.12" cy="467.91" r="1.900"/><circle cx="334.59" cy="479.03" r="1.900"/><circle cx="329.49" cy="497.02" r="1.900"/><circle cx="411.59" cy="487.67" r="1.900"/><circle cx="423.85" cy="489.73" r="1.900"/><circle cx="399.06" cy="464.94" r="1.900"/><circle cx="454.88" cy="492.62" r="1.900"/><circle cx="401.54" cy="484.41" r="1.900"/><circle cx="429.83" cy="469.92" r="1.900"/><circle cx="443.86" cy="476.06" r="1.900"/><circle cx="323.98" cy="476.41" r="1.900"/><circle cx="442.51" cy="474.82" r="1.900"/><circle cx="444.41" cy="508.4" r="1.900"/><circle cx="399.9" cy="479.66" r="1.900"/><circle cx="397.2" cy="489.85" r="1.900"/><circle cx="449.32" cy="487.27" r="1.900"/><circle cx="426.84" cy="470.45" r="1.900"/><circle cx="337.18" cy="476.11" r="1.900"/><circle cx="445.02" cy="477.46" r="1.900"/><circle cx="413.26" cy="466.29" r="1.900"/><circle cx="321.48" cy="476.5" r="1.900"/><circle cx="432.13" cy="490.2" r="1.900"/><circle cx="432.8" cy="477.09" r="1.900"/><circle cx="403.99" cy="482.13" r="1.900"/><circle cx="394.91" cy="472.1" r="1.900"/><circle cx="472.25" cy="474.65" r="1.900"/><circle cx="487.54" cy="503.99" r="1.900"/><circle cx="313.67" cy="481.95" r="1.900"/><circle cx="458.9" cy="507.36" r="1.900"/><circle cx="391.85" cy="476.5" r="1.900"/><circle cx="348.48" cy="504.86" r="1.900"/><circle cx="348.64" cy="486" r="1.900"/><circle cx="336.16" cy="484.04" r="1.900"/><circle cx="482.95" cy="472.6" r="1.900"/><circle cx="458.96" cy="483.53" r="1.900"/><circle cx="471.02" cy="490.66" r="1.900"/><circle cx="352.38" cy="500.91" r="1.900"/><circle cx="398.49" cy="467.44" r="1.900"/><circle cx="311.15" cy="482.98" r="1.900"/><circle cx="392.09" cy="477.4" r="1.900"/><circle cx="335.97" cy="478.56" r="1.900"/><circle cx="367.71" cy="497.27" r="1.900"/><circle cx="310.82" cy="492.73" r="1.900"/><circle cx="462.38" cy="472.15" r="1.900"/><circle cx="478.18" cy="491.07" r="1.900"/><circle cx="473.68" cy="477.07" r="1.900"/><circle cx="377.87" cy="479.96" r="1.900"/><circle cx="491.28" cy="486.27" r="1.900"/><circle cx="375.79" cy="481.01" r="1.900"/><circle cx="360.3" cy="468.99" r="1.900"/><circle cx="328.91" cy="496.96" r="1.900"/><circle cx="362.2" cy="503.93" r="1.900"/><circle cx="355.63" cy="476.42" r="1.900"/><circle cx="402.98" cy="474.38" r="1.900"/><circle cx="378.08" cy="505.95" r="1.900"/><circle cx="470.55" cy="495.72" r="1.900"/><circle cx="424.69" cy="502.08" r="1.900"/><circle cx="480.77" cy="484.88" r="1.900"/><circle cx="440.74" cy="469.06" r="1.900"/><circle cx="443.06" cy="481.7" r="1.900"/><circle cx="446.73" cy="488.31" r="1.900"/><circle cx="362.3" cy="469.03" r="1.900"/><circle cx="478.25" cy="472.41" r="1.900"/><circle cx="395.97" cy="478.55" r="1.900"/><circle cx="364.4" cy="492.2" r="1.900"/><circle cx="487.21" cy="476.27" r="1.900"/><circle cx="429.24" cy="477.37" r="1.900"/><circle cx="411.38" cy="480.01" r="1.900"/></g><path d="M310.5 400L315.54 400.32L320.58 400.63L325.62 400.77L330.67 401.15L335.71 400.62L340.75 401.1L345.79 398.78L350.83 399.91L355.88 401.15L360.92 400.39L365.96 401.04L371 398.99L376.04 399.92L381.08 399.34L386.12 400.11L391.17 400.19L396.21 398.73L401.25 399.26L406.29 399.43L411.33 401.08L416.38 400.69L421.42 399.11L426.46 400.77L431.5 399.06L436.54 400.31L441.58 399.03L446.62 398.7L451.67 400.97L456.71 399.24L461.75 399.26L466.79 401.25L471.83 400.97L476.88 399.45L481.92 401.2L486.96 400.1L492 400.46L492 466.12L486.96 469.56L481.92 468.39L476.88 469.68L471.83 469.34L466.79 466.56L461.75 466.85L456.71 465.94L451.67 465.84L446.62 465.46L441.58 466.57L436.54 467.98L431.5 465.18L426.46 468.33L421.42 466.74L416.38 466.61L411.33 468.99L406.29 467.41L401.25 466.64L396.21 467.41L391.17 468.46L386.12 465.43L381.08 469.72L376.04 465.27L371 468.67L365.96 469.11L360.92 465.24L355.88 468.85L350.83 466.87L345.79 467.87L340.75 465.2L335.71 465.38L330.67 466.01L325.62 469.63L320.58 466.08L315.54 468.7L310.5 469.51Z" fill="url(#g2)"/><g fill="#05080c"><circle cx="343.62" cy="407.42" r="0.97"/><circle cx="472.14" cy="416.91" r="0.99"/><circle cx="472.19" cy="446.77" r="1.28"/><circle cx="338.79" cy="408.2" r="0.82"/><circle cx="374" cy="405.69" r="1.01"/><circle cx="359.45" cy="419.35" r="1.85"/><circle cx="444.94" cy="414.28" r="1.24"/><circle cx="405.71" cy="413.22" r="1.14"/><circle cx="325.3" cy="410.44" r="1.96"/><circle cx="336.4" cy="417.11" r="1.52"/><circle cx="464.64" cy="408.81" r="1.05"/><circle cx="357.73" cy="413.9" r="1.28"/><circle cx="480.49" cy="431.62" r="1.83"/><circle cx="318.3" cy="403.99" r="1.62"/><circle cx="470.35" cy="416.15" r="1.46"/><circle cx="314.53" cy="413.65" r="1.9"/><circle cx="458.15" cy="432.03" r="1.96"/><circle cx="357.73" cy="406.12" r="0.9"/><circle cx="405.39" cy="423.59" r="1.92"/><circle cx="440.08" cy="422.21" r="1.69"/><circle cx="394.07" cy="418.72" r="0.75"/><circle cx="450.62" cy="409.24" r="1.9"/><circle cx="426.82" cy="411.15" r="0.87"/><circle cx="358.31" cy="421.78" r="1.61"/><circle cx="334.01" cy="405.18" r="1.38"/><circle cx="415.92" cy="413.55" r="0.99"/><circle cx="419.08" cy="402.92" r="1.09"/><circle cx="394.66" cy="440.19" r="1.54"/><circle cx="468.28" cy="416.21" r="1.01"/><circle cx="357.49" cy="440.38" r="1.62"/><circle cx="367.99" cy="403.55" r="1.35"/><circle cx="431.86" cy="414.5" r="1.03"/><circle cx="430.62" cy="436.93" r="0.99"/><circle cx="320.43" cy="412.11" r="1.25"/><circle cx="433.27" cy="408.35" r="1.74"/><circle cx="443.11" cy="417.16" r="0.97"/><circle cx="483.26" cy="411.37" r="1.77"/><circle cx="354.66" cy="408.95" r="1.69"/><circle cx="365.82" cy="439.42" r="1.34"/><circle cx="347.09" cy="409" r="1.24"/><circle cx="430.26" cy="439.1" r="0.89"/><circle cx="382.96" cy="408.73" r="1.97"/><circle cx="339.19" cy="404.65" r="0.78"/><circle cx="382.94" cy="434.83" r="1.85"/><circle cx="441.99" cy="447.22" r="1.91"/><circle cx="371.79" cy="408.02" r="1.92"/></g></g>
<clipPath id="t3"><rect x="516" y="349.5" width="181.500" height="181.400"/></clipPath>
<radialGradient id="og"><stop offset="0" stop-color="#f39a12" stop-opacity="0.550"/><stop offset="1" stop-color="#f39a12" stop-opacity="0"/></radialGradient><radialGradient id="rg"><stop offset="0" stop-color="#e42222" stop-opacity="0.650"/><stop offset="1" stop-color="#e42222" stop-opacity="0"/></radialGradient><radialGradient id="tg"><stop offset="0" stop-color="#e6bd94" stop-opacity="0.800"/><stop offset="0.600" stop-color="#e2b78c" stop-opacity="0.350"/><stop offset="1" stop-color="#e2b78c" stop-opacity="0"/></radialGradient>
<g clip-path="url(#t3)"><path d="M526.4 431.8L678.4 431.8L697.5 471.5V494.8H516V450.5Z" fill="#333"/><path d="M516 467.5l60 14l50 -6l70 20M536 489.5l40 -20l30 8" stroke="#4a4a4a" stroke-width="0.700" fill="none"/><path d="M538 395.5l14 -2l10 4l32 -8l26 8l26 6M551 399.5v26M595 389.5v34l22 22M595 389.5l-12 10" stroke="#2f8f98" stroke-width="0.800" fill="none" opacity="0.900"/><path d="M548.9 433.88L662.05 469.45M538.47 437.48L612.01 455.9M535.83 437.72L672.28 474.7M555 435.99L643.53 470.49M551.02 438.69L614.96 459.82M538.44 444.53L613.88 468.07M553.12 433.86L645.98 469.9M549.47 433.99L612.26 450.35M553.76 436.58L673.55 484.83M537.49 436.77L674.11 485.25M535.34 442.1L620.66 467.43M528.11 442.57L661.42 490.27M554.41 433.79L633.12 459.83M554.79 444.95L645.71 471.56M540.04 439.42L674.29 477.16M550.47 442.36L676.29 490.35M545 437.43L630.57 464.09M549.9 434.45L625.69 463.09M534.92 434.28L597.63 455.85M537.12 445.26L667.8 499.88M535.42 434.51L603.13 457.18M547.87 438.86L626.61 464.13M545.37 441.59L665.21 488.8M546.6 434.95L673.87 473.13M543.87 437.98L662.92 471.77M534.93 436.44L607.19 465.37M544.19 437.42L635.88 475.81M542.21 436.28L666.88 481.29M555.75 434.73L653.73 472.87M551.54 444.47L614.76 463.44M531.34 435.77L669.18 483.9M554.04 437.97L683.34 480.16M535.28 442.83L670.93 479.19M544.69 440.94L622.1 465.14M531.96 435.95L612.35 464.24M546.25 435.94L607.16 454.56M546.99 435.72L631.97 459.9M550.27 440.08L615.33 457.46M539.07 440.1L650.2 469.61M532.58 441.84L625.37 469.51M536.61 444.94L621.6 474.37M538 438.5L667.14 492.66M538.19 435.87L656.43 469.52M528.16 444.32L622.06 480.89M539.37 444.09L636.25 470.99M528.42 440.12L639.67 485.14M530.49 440.97L620.16 471.07M532.08 436.9L633.78 478.32M531.05 439.39L655.43 490.93M533.53 435.02L668.97 491.34M541.52 434.14L675.61 476.51M553.32 440.94L679.28 475.87M550 436.16L642.36 472.54M551.22 435.7L628.67 460.32M542.5 438.1L612.35 458.5M548.3 444.27L611.58 466.14M549.21 433.96L676.27 468.26M544.79 440.1L654.95 473.38M539.76 440.49L633.82 474.54M540.51 438.76L602.38 460.74M541.71 436.32L662.79 482.65M540.83 435.65L638.69 461.9M531.6 438.67L598.93 460.56M542.28 433.99L653.2 463.27M548.54 442.83L649.46 468.99M542.11 438.03L678.18 475.2M552 445.45L670.56 491.52M533.42 445.28L632.77 486.28M553.65 435.48L676.72 485.72M529.83 437.71L650.33 471.09" stroke="#e02020" stroke-width="0.700" stroke-opacity="0.550" fill="none"/><ellipse cx="594" cy="451.5" rx="66" ry="17" fill="url(#rg)" transform="rotate(17 594 451.5)"/><path d="M652.23 448.5v-28.84M586.53 457.59v-31.76M594.82 448.01v-20.17M606.42 438.97v-11.1M588.95 474.96v-25.03M652.1 444.25v-27.98M582.28 458.73v-23.82M610.16 472.42v-21.55M627.46 472.8v-8.93M669.8 462.69v-17.04M642.76 448.09v-33.73M627.27 451.91v-27.41M617.13 444.57v-26.82M569.5 470.29v-13.1M631.52 476.86v-22.4M633.14 450.01v-6.05M565.66 443.47v-23.25M616.32 458.01v-31.08M584.86 446.59v-24.29M561.97 437.6v-15.94M580.88 451.79v-12.28M627.71 461.06v-11.72M630.49 456.5v-9.77M657.39 447.24v-10.18M579.11 463.03v-30.4M641.51 453.58v-13.4M557.47 463.3v-21.75M609.31 463.32v-18.43M657.48 466.84v-12.96M653.05 439.26v-20.88M614.15 447.01v-7.63M641.25 437.99v-21.43M658.04 443.19v-11.59M629.41 457.78v-23.96M644.08 444.49v-14.66M604.61 439.44v-30.9M641.58 466.12v-6.18M646.86 467.31v-19.03M638.45 455.6v-12.33M580.7 446.79v-7.09M607.95 467.49v-25.46M646.94 465.97v-13.45M625.59 454.94v-28.08M623.37 448.11v-23.98M662.2 446.18v-30.64M559.2 447.91v-12.61M638.6 475.29v-26.89M607.15 472.71v-15.2M598.31 473.8v-23.66M635.05 464.11v-33.41M619.29 471.09v-25.53M648.11 454.99v-26.29M626.78 449.81v-11.94M630.4 440.61v-31.5M586.67 438.58v-8.99M656.3 451.29v-9.97M564.13 439.17v-25.39M631.16 465.38v-26.63M573.43 461.12v-16.18M644.44 470.28v-30.96M573.47 472.21v-31.6M658.56 441.78v-11.76M581.79 438.88v-29.74M643.96 462.87v-29.1M631 448.99v-8.8M579.46 467.79v-11.74M606.42 454.45v-6.59M600.19 448.8v-26.04M610.89 450.33v-32.99M621.91 471.56v-23.31M564.83 454.02v-18.22M640.8 451.37v-25.73M624.44 446.16v-30.14M578.25 470.29v-10.77M549.86 445.58v-27.34M665.01 437.67v-19.74M620.98 469.37v-11.17M621.22 451.39v-29.29M600.6 475.25v-13.94M595.56 465.48v-19.95M581.46 462.96v-8.26M641.97 465.39v-28.03M630.76 451.72v-17.24M613.19 473.12v-8.41M651.32 438.51v-11.77M600.87 473.55v-20.03M611.87 472.86v-12.54M618.61 458.76v-27.13M639.28 463.35v-15.76M607.13 443.71v-29.61M633.03 467.18v-10.75M616.85 468.44v-22.22M583.97 455.98v-30.78M598.17 445.16v-14.44M635.74 471.25v-10.33M588.24 447.4v-15.14M623.29 443.94v-15.19M592.53 476.51v-26.4M580.13 476v-8.85M612.3 476.85v-28.26M637.84 454.9v-11.49M631.43 441.77v-11.78M612.65 438.86v-17.17M642.22 465.24v-20.01M631.06 456.03v-9.97M629.1 453.69v-26.75M653.59 454.7v-22.07M638.99 454.35v-12.4M637.06 472.7v-27.67M635.53 471.6v-25.03" stroke="#f09010" stroke-width="0.700" stroke-opacity="0.650" fill="none"/><ellipse cx="634" cy="445.5" rx="40" ry="24" fill="url(#og)"/><g fill="#f59a10"><circle cx="627.73" cy="434.81" r="0.800"/><circle cx="603.06" cy="440.88" r="0.800"/><circle cx="577.9" cy="433.73" r="0.800"/><circle cx="638.39" cy="444.36" r="0.800"/><circle cx="626.93" cy="428.53" r="0.800"/><circle cx="612.37" cy="434.85" r="0.800"/><circle cx="626.4" cy="433.42" r="0.800"/><circle cx="630.06" cy="457.1" r="0.800"/><circle cx="589.63" cy="441.9" r="0.800"/><circle cx="638.03" cy="432.79" r="0.800"/><circle cx="617.37" cy="462.02" r="0.800"/><circle cx="565.92" cy="437.78" r="0.800"/><circle cx="586.9" cy="447.57" r="0.800"/><circle cx="656.35" cy="436.95" r="0.800"/><circle cx="578.42" cy="438.88" r="0.800"/><circle cx="621.01" cy="444.54" r="0.800"/><circle cx="618.98" cy="441.3" r="0.800"/><circle cx="642.66" cy="437.03" r="0.800"/><circle cx="611.33" cy="458.79" r="0.800"/><circle cx="592.74" cy="443.12" r="0.800"/><circle cx="609.89" cy="446.63" r="0.800"/><circle cx="581.68" cy="463.65" r="0.800"/><circle cx="606.8" cy="419.6" r="0.800"/><circle cx="599.42" cy="433.13" r="0.800"/><circle cx="557.76" cy="433.7" r="0.800"/><circle cx="612.13" cy="443.71" r="0.800"/><circle cx="606.52" cy="429.04" r="0.800"/><circle cx="594.31" cy="445.63" r="0.800"/><circle cx="656.24" cy="437.21" r="0.800"/><circle cx="593.71" cy="448.58" r="0.800"/><circle cx="609.85" cy="427.18" r="0.800"/><circle cx="582.67" cy="447.31" r="0.800"/><circle cx="640.82" cy="441.11" r="0.800"/><circle cx="615.85" cy="438.43" r="0.800"/><circle cx="594.48" cy="460.58" r="0.800"/><circle cx="606.6" cy="441.28" r="0.800"/><circle cx="641.68" cy="449.37" r="0.800"/><circle cx="615.77" cy="429.98" r="0.800"/><circle cx="621.51" cy="423.55" r="0.800"/><circle cx="643.13" cy="431.79" r="0.800"/><circle cx="644.84" cy="429.11" r="0.800"/><circle cx="608.55" cy="428.65" r="0.800"/><circle cx="612.57" cy="426.18" r="0.800"/><circle cx="551.29" cy="444.74" r="0.800"/><circle cx="600.08" cy="428.36" r="0.800"/><circle cx="602.03" cy="435.63" r="0.800"/><circle cx="612.76" cy="441.23" r="0.800"/><circle cx="628.94" cy="432.01" r="0.800"/><circle cx="654.48" cy="451.59" r="0.800"/><circle cx="570.36" cy="450.02" r="0.800"/><circle cx="651.26" cy="447.68" r="0.800"/><circle cx="584.21" cy="450.22" r="0.800"/><circle cx="627.17" cy="415.67" r="0.800"/><circle cx="556.93" cy="459.19" r="0.800"/><circle cx="628.71" cy="428.53" r="0.800"/><circle cx="578.49" cy="424.37" r="0.800"/><circle cx="595.29" cy="447.3" r="0.800"/><circle cx="606.03" cy="424.81" r="0.800"/><circle cx="651.03" cy="448.07" r="0.800"/><circle cx="587.79" cy="454.01" r="0.800"/><circle cx="625.54" cy="447.54" r="0.800"/><circle cx="629.58" cy="454.21" r="0.800"/><circle cx="638.89" cy="450.65" r="0.800"/><circle cx="591.31" cy="443.48" r="0.800"/><circle cx="620.3" cy="445.65" r="0.800"/><circle cx="613.54" cy="453.42" r="0.800"/><circle cx="621.98" cy="429.02" r="0.800"/><circle cx="595.35" cy="424.21" r="0.800"/><circle cx="617.61" cy="419.73" r="0.800"/><circle cx="615.7" cy="424.44" r="0.800"/><circle cx="617.49" cy="436.24" r="0.800"/><circle cx="620.91" cy="452.12" r="0.800"/><circle cx="554.29" cy="450.77" r="0.800"/><circle cx="615.76" cy="438.45" r="0.800"/><circle cx="629.36" cy="450.75" r="0.800"/><circle cx="608.45" cy="433.71" r="0.800"/><circle cx="660" cy="420.85" r="0.800"/><circle cx="627.43" cy="441.18" r="0.800"/><circle cx="563.23" cy="440.17" r="0.800"/><circle cx="630.58" cy="457.21" r="0.800"/><circle cx="604.62" cy="463.15" r="0.800"/><circle cx="618.87" cy="435.8" r="0.800"/><circle cx="650.2" cy="417.77" r="0.800"/><circle cx="633.2" cy="440.76" r="0.800"/><circle cx="605.34" cy="452.04" r="0.800"/><circle cx="607.71" cy="435.47" r="0.800"/><circle cx="619.93" cy="447.01" r="0.800"/><circle cx="592.81" cy="434.22" r="0.800"/><circle cx="612.28" cy="438.15" r="0.800"/><circle cx="642.44" cy="429.93" r="0.800"/></g><g fill="#e62a2a"><circle cx="665.26" cy="470.46" r="0.750"/><circle cx="622.49" cy="464.91" r="0.750"/><circle cx="622.85" cy="494.45" r="0.750"/><circle cx="642.4" cy="486.76" r="0.750"/><circle cx="599.68" cy="466.82" r="0.750"/><circle cx="595.5" cy="478.13" r="0.750"/><circle cx="639.8" cy="486.44" r="0.750"/><circle cx="561.29" cy="483.85" r="0.750"/><circle cx="672.9" cy="476.41" r="0.750"/><circle cx="562.56" cy="466.12" r="0.750"/><circle cx="556.82" cy="461.48" r="0.750"/><circle cx="677.63" cy="479.06" r="0.750"/><circle cx="642.86" cy="486.64" r="0.750"/><circle cx="676.1" cy="479.19" r="0.750"/><circle cx="637.4" cy="479.83" r="0.750"/><circle cx="647.93" cy="478.54" r="0.750"/><circle cx="645.89" cy="462.43" r="0.750"/><circle cx="644.04" cy="472.73" r="0.750"/><circle cx="656.67" cy="457.76" r="0.750"/><circle cx="579.93" cy="455.05" r="0.750"/><circle cx="658.24" cy="491.89" r="0.750"/><circle cx="642.55" cy="468.99" r="0.750"/><circle cx="664.58" cy="486.53" r="0.750"/><circle cx="630.2" cy="464.34" r="0.750"/><circle cx="595.87" cy="471.21" r="0.750"/><circle cx="598.04" cy="471.59" r="0.750"/><circle cx="640.71" cy="492.72" r="0.750"/><circle cx="563.21" cy="477.34" r="0.750"/><circle cx="561.2" cy="458.49" r="0.750"/><circle cx="662.96" cy="477.66" r="0.750"/><circle cx="677.26" cy="472.25" r="0.750"/><circle cx="557.87" cy="469.76" r="0.750"/><circle cx="634.14" cy="492.88" r="0.750"/><circle cx="685.46" cy="473.47" r="0.750"/><circle cx="610.44" cy="457.79" r="0.750"/><circle cx="641.07" cy="462.42" r="0.750"/><circle cx="576.03" cy="454.15" r="0.750"/><circle cx="556.63" cy="482.22" r="0.750"/><circle cx="572.06" cy="494.09" r="0.750"/><circle cx="567.63" cy="490.02" r="0.750"/><circle cx="573.02" cy="454.25" r="0.750"/><circle cx="650.95" cy="463.68" r="0.750"/><circle cx="652.83" cy="461.37" r="0.750"/><circle cx="562.62" cy="486.01" r="0.750"/><circle cx="650.19" cy="489.43" r="0.750"/><circle cx="652.32" cy="457.04" r="0.750"/><circle cx="638.98" cy="483.29" r="0.750"/><circle cx="616.8" cy="492.66" r="0.750"/><circle cx="589.53" cy="494" r="0.750"/><circle cx="650.67" cy="453.98" r="0.750"/><circle cx="557.94" cy="480.83" r="0.750"/><circle cx="663.89" cy="456.85" r="0.750"/><circle cx="597.06" cy="484.14" r="0.750"/><circle cx="577.91" cy="489.66" r="0.750"/><circle cx="620.2" cy="456.01" r="0.750"/><circle cx="604.52" cy="477.65" r="0.750"/><circle cx="613.91" cy="481.93" r="0.750"/><circle cx="575.13" cy="486.99" r="0.750"/><circle cx="603.95" cy="480.59" r="0.750"/><circle cx="639.12" cy="471.05" r="0.750"/></g></g>
<clipPath id="t4"><rect x="721.5" y="349.5" width="181.500" height="181.400"/></clipPath>
<g clip-path="url(#t4)"><ellipse cx="883.5" cy="457.5" rx="38" ry="30" fill="url(#tg)"/><g fill="#e2b78c" fill-opacity="0.850"><rect x="868.86" y="463.18" width="2.200" height="2" /><rect x="892.66" y="414.59" width="2.200" height="2" /><rect x="877.29" y="455.19" width="2.200" height="2" /><rect x="888.25" y="453.24" width="2.200" height="2" /><rect x="876.34" y="449.14" width="2.200" height="2" /><rect x="863.25" y="449.61" width="2.200" height="2" /><rect x="896.56" y="451.35" width="2.200" height="2" /><rect x="868.43" y="475.92" width="2.200" height="2" /><rect x="862.12" y="463.58" width="2.200" height="2" /><rect x="872.99" y="446.67" width="2.200" height="2" /><rect x="849.42" y="445.38" width="2.200" height="2" /><rect x="873.54" y="474.73" width="2.200" height="2" /><rect x="881.73" y="455.18" width="2.200" height="2" /><rect x="856.27" y="449.79" width="2.200" height="2" /><rect x="881.84" y="451.67" width="2.200" height="2" /><rect x="881.98" y="452.31" width="2.200" height="2" /><rect x="888.11" y="440.44" width="2.200" height="2" /><rect x="875.75" y="472.28" width="2.200" height="2" /><rect x="887.73" y="446.98" width="2.200" height="2" /><rect x="911.19" y="438.27" width="2.200" height="2" /><rect x="863.25" y="473.18" width="2.200" height="2" /><rect x="884.44" y="444.24" width="2.200" height="2" /><rect x="879.52" y="455.54" width="2.200" height="2" /><rect x="885.53" y="493.79" width="2.200" height="2" /><rect x="869.5" y="451.8" width="2.200" height="2" /><rect x="886.54" y="470.9" width="2.200" height="2" /><rect x="879.49" y="455.72" width="2.200" height="2" /><rect x="834.92" y="469.73" width="2.200" height="2" /><rect x="892.76" y="458.84" width="2.200" height="2" /><rect x="884" y="482.08" width="2.200" height="2" /><rect x="841.65" y="447.65" width="2.200" height="2" /><rect x="847.18" y="457.43" width="2.200" height="2" /><rect x="865.4" y="458.98" width="2.200" height="2" /><rect x="882.68" y="460.5" width="2.200" height="2" /><rect x="882.65" y="459.46" width="2.200" height="2" /><rect x="857.87" y="452.68" width="2.200" height="2" /><rect x="867.49" y="462.82" width="2.200" height="2" /><rect x="881.03" y="455.56" width="2.200" height="2" /><rect x="888.15" y="454.1" width="2.200" height="2" /><rect x="873.61" y="452.14" width="2.200" height="2" /><rect x="884.03" y="442.42" width="2.200" height="2" /><rect x="863.13" y="473.72" width="2.200" height="2" /><rect x="872.81" y="455.97" width="2.200" height="2" /><rect x="880.37" y="455.33" width="2.200" height="2" /><rect x="901.84" y="435.81" width="2.200" height="2" /><rect x="879.29" y="457.42" width="2.200" height="2" /><rect x="889.76" y="417.81" width="2.200" height="2" /><rect x="882.55" y="436.69" width="2.200" height="2" /><rect x="887.62" y="442.78" width="2.200" height="2" /><rect x="883.9" y="455.54" width="2.200" height="2" /><rect x="880.89" y="458.15" width="2.200" height="2" /><rect x="888.85" y="456.13" width="2.200" height="2" /><rect x="860.98" y="453.71" width="2.200" height="2" /><rect x="899.26" y="448.08" width="2.200" height="2" /><rect x="906.75" y="440.09" width="2.200" height="2" /><rect x="868.49" y="462.56" width="2.200" height="2" /><rect x="893.65" y="462.06" width="2.200" height="2" /><rect x="874.84" y="454.89" width="2.200" height="2" /><rect x="855.86" y="440.21" width="2.200" height="2" /><rect x="871.31" y="460.99" width="2.200" height="2" /><rect x="845.1" y="468.23" width="2.200" height="2" /><rect x="936.39" y="445.03" width="2.200" height="2" /><rect x="882.93" y="467.47" width="2.200" height="2" /><rect x="876.63" y="458.45" width="2.200" height="2" /><rect x="913" y="435.13" width="2.200" height="2" /><rect x="906.24" y="456.81" width="2.200" height="2" /><rect x="881.63" y="449.18" width="2.200" height="2" /><rect x="915.65" y="447.91" width="2.200" height="2" /><rect x="904.64" y="457.74" width="2.200" height="2" /><rect x="911.45" y="442.34" width="2.200" height="2" /><rect x="874.84" y="450.05" width="2.200" height="2" /><rect x="881.15" y="433.59" width="2.200" height="2" /><rect x="886.58" y="458.05" width="2.200" height="2" /><rect x="892.24" y="461.83" width="2.200" height="2" /><rect x="870.17" y="457.62" width="2.200" height="2" /><rect x="889.91" y="462.51" width="2.200" height="2" /><rect x="861.41" y="434.01" width="2.200" height="2" /><rect x="880.61" y="457.35" width="2.200" height="2" /><rect x="895.57" y="455.51" width="2.200" height="2" /><rect x="886.87" y="452.27" width="2.200" height="2" /><rect x="886.81" y="449.1" width="2.200" height="2" /><rect x="870.82" y="458.76" width="2.200" height="2" /><rect x="916.44" y="466.82" width="2.200" height="2" /><rect x="864.54" y="447.54" width="2.200" height="2" /><rect x="854.78" y="464.2" width="2.200" height="2" /><rect x="839.01" y="465.33" width="2.200" height="2" /><rect x="871.54" y="451.28" width="2.200" height="2" /><rect x="892.98" y="456.76" width="2.200" height="2" /><rect x="876.4" y="447.22" width="2.200" height="2" /><rect x="882.79" y="452.74" width="2.200" height="2" /><rect x="878.18" y="464.06" width="2.200" height="2" /><rect x="878.45" y="460.82" width="2.200" height="2" /><rect x="883.76" y="450.45" width="2.200" height="2" /><rect x="865.93" y="458.04" width="2.200" height="2" /><rect x="875.14" y="462.4" width="2.200" height="2" /><rect x="886.75" y="453.77" width="2.200" height="2" /><rect x="908.1" y="458.19" width="2.200" height="2" /><rect x="885.22" y="469.66" width="2.200" height="2" /><rect x="875.01" y="456.59" width="2.200" height="2" /><rect x="885.35" y="466.82" width="2.200" height="2" /><rect x="884.12" y="453.27" width="2.200" height="2" /><rect x="890.6" y="458.94" width="2.200" height="2" /><rect x="929.69" y="460.37" width="2.200" height="2" /><rect x="876.63" y="443.34" width="2.200" height="2" /><rect x="948.58" y="449.7" width="2.200" height="2" /><rect x="882.21" y="450.36" width="2.200" height="2" /><rect x="891.52" y="453.79" width="2.200" height="2" /><rect x="887.62" y="444.94" width="2.200" height="2" /><rect x="876.95" y="456.6" width="2.200" height="2" /><rect x="885.2" y="452.34" width="2.200" height="2" /><rect x="900.95" y="468.83" width="2.200" height="2" /><rect x="881.73" y="458.27" width="2.200" height="2" /><rect x="892.86" y="478.61" width="2.200" height="2" /><rect x="906.18" y="460.98" width="2.200" height="2" /><rect x="860.92" y="458.63" width="2.200" height="2" /><rect x="878.04" y="462.03" width="2.200" height="2" /><rect x="870.47" y="435.12" width="2.200" height="2" /><rect x="885.22" y="445.46" width="2.200" height="2" /><rect x="887.47" y="456.59" width="2.200" height="2" /><rect x="875.72" y="433.42" width="2.200" height="2" /><rect x="900.83" y="457.36" width="2.200" height="2" /><rect x="888.98" y="438.61" width="2.200" height="2" /><rect x="907.8" y="430.13" width="2.200" height="2" /><rect x="822.74" y="465.64" width="2.200" height="2" /><rect x="874.03" y="456.85" width="2.200" height="2" /><rect x="880.68" y="454.52" width="2.200" height="2" /><rect x="887.64" y="444.82" width="2.200" height="2" /><rect x="870.81" y="463.08" width="2.200" height="2" /><rect x="861.76" y="450.29" width="2.200" height="2" /><rect x="907.52" y="451.83" width="2.200" height="2" /><rect x="876.01" y="455.8" width="2.200" height="2" /><rect x="887.17" y="459.1" width="2.200" height="2" /><rect x="910.49" y="428.01" width="2.200" height="2" /><rect x="876.85" y="459.53" width="2.200" height="2" /><rect x="879.7" y="439.3" width="2.200" height="2" /><rect x="921.21" y="460.28" width="2.200" height="2" /><rect x="833.27" y="463.42" width="2.200" height="2" /><rect x="847.92" y="458.51" width="2.200" height="2" /><rect x="885.6" y="455.11" width="2.200" height="2" /><rect x="882.16" y="454.74" width="2.200" height="2" /><rect x="892.5" y="459.95" width="2.200" height="2" /><rect x="879.49" y="457.22" width="2.200" height="2" /><rect x="884.32" y="456.96" width="2.200" height="2" /><rect x="878.98" y="454.55" width="2.200" height="2" /><rect x="875.75" y="454.3" width="2.200" height="2" /><rect x="843.96" y="448.72" width="2.200" height="2" /><rect x="884.14" y="457.09" width="2.200" height="2" /><rect x="880.61" y="454.56" width="2.200" height="2" /><rect x="885.04" y="458.2" width="2.200" height="2" /><rect x="858.46" y="459.21" width="2.200" height="2" /><rect x="879.57" y="455.53" width="2.200" height="2" /><rect x="860.68" y="466.61" width="2.200" height="2" /><rect x="896.46" y="439.74" width="2.200" height="2" /><rect x="902.76" y="472.19" width="2.200" height="2" /><rect x="889.26" y="464.72" width="2.200" height="2" /><rect x="890.46" y="440.01" width="2.200" height="2" /><rect x="870.85" y="459.89" width="2.200" height="2" /><rect x="893.26" y="439.2" width="2.200" height="2" /><rect x="883.4" y="453.93" width="2.200" height="2" /><rect x="881.21" y="448.68" width="2.200" height="2" /><rect x="871.16" y="465.96" width="2.200" height="2" /><rect x="836.63" y="473.94" width="2.200" height="2" /><rect x="884.22" y="452.91" width="2.200" height="2" /><rect x="881.47" y="452.22" width="2.200" height="2" /><rect x="872.49" y="456.05" width="2.200" height="2" /><rect x="896.91" y="449.8" width="2.200" height="2" /><rect x="872.53" y="458.97" width="2.200" height="2" /><rect x="865.34" y="447.42" width="2.200" height="2" /><rect x="901.32" y="458.86" width="2.200" height="2" /><rect x="874.63" y="457.65" width="2.200" height="2" /><rect x="879.6" y="455.56" width="2.200" height="2" /><rect x="889.48" y="452.75" width="2.200" height="2" /><rect x="839.13" y="432.29" width="2.200" height="2" /><rect x="894.2" y="428.7" width="2.200" height="2" /><rect x="914.56" y="455.27" width="2.200" height="2" /><rect x="877.06" y="453.9" width="2.200" height="2" /><rect x="873.78" y="481.56" width="2.200" height="2" /><rect x="848.41" y="454.64" width="2.200" height="2" /><rect x="879.44" y="466.35" width="2.200" height="2" /><rect x="821.61" y="459.33" width="2.200" height="2" /><rect x="873.47" y="472.83" width="2.200" height="2" /><rect x="876.8" y="460.76" width="2.200" height="2" /><rect x="870.76" y="452.97" width="2.200" height="2" /><rect x="899.2" y="448.9" width="2.200" height="2" /><rect x="877.76" y="456" width="2.200" height="2" /><rect x="871.71" y="455.57" width="2.200" height="2" /><rect x="886.78" y="459.57" width="2.200" height="2" /><rect x="874.67" y="467.46" width="2.200" height="2" /><rect x="879.99" y="463.19" width="2.200" height="2" /><rect x="920.08" y="465.75" width="2.200" height="2" /><rect x="868.5" y="451.2" width="2.200" height="2" /><rect x="870.27" y="454.04" width="2.200" height="2" /><rect x="876.02" y="447.07" width="2.200" height="2" /><rect x="846.33" y="465.92" width="2.200" height="2" /><rect x="869.06" y="458.42" width="2.200" height="2" /><rect x="879.17" y="456.09" width="2.200" height="2" /><rect x="861.18" y="457.31" width="2.200" height="2" /><rect x="876.94" y="457.4" width="2.200" height="2" /><rect x="878.26" y="456.76" width="2.200" height="2" /><rect x="881.04" y="454.08" width="2.200" height="2" /><rect x="846.47" y="461.62" width="2.200" height="2" /><rect x="874.79" y="470.05" width="2.200" height="2" /><rect x="879.74" y="454.36" width="2.200" height="2" /><rect x="905.63" y="477.97" width="2.200" height="2" /><rect x="859.55" y="463.66" width="2.200" height="2" /><rect x="899.23" y="457.84" width="2.200" height="2" /><rect x="877.84" y="443.95" width="2.200" height="2" /><rect x="887.41" y="458.55" width="2.200" height="2" /><rect x="874.86" y="413.81" width="2.200" height="2" /><rect x="886.61" y="461.23" width="2.200" height="2" /><rect x="870.14" y="444.83" width="2.200" height="2" /><rect x="858.38" y="446.29" width="2.200" height="2" /><rect x="840.71" y="458.47" width="2.200" height="2" /><rect x="879.37" y="454.31" width="2.200" height="2" /><rect x="836.16" y="466.44" width="2.200" height="2" /><rect x="882.74" y="445.54" width="2.200" height="2" /><rect x="918.35" y="475.81" width="2.200" height="2" /><rect x="909.98" y="429.93" width="2.200" height="2" /><rect x="878.47" y="455.25" width="2.200" height="2" /><rect x="846.56" y="460.73" width="2.200" height="2" /><rect x="872.67" y="459.06" width="2.200" height="2" /><rect x="884.71" y="438.88" width="2.200" height="2" /><rect x="860.97" y="469.72" width="2.200" height="2" /><rect x="841.08" y="469.03" width="2.200" height="2" /><rect x="876.6" y="462.8" width="2.200" height="2" /><rect x="860.88" y="468.28" width="2.200" height="2" /><rect x="875.68" y="461.21" width="2.200" height="2" /><rect x="883.64" y="443.48" width="2.200" height="2" /><rect x="856.22" y="464.58" width="2.200" height="2" /><rect x="881.45" y="458.11" width="2.200" height="2" /><rect x="867.29" y="453.24" width="2.200" height="2" /><rect x="836.13" y="446.05" width="2.200" height="2" /><rect x="865.77" y="475.5" width="2.200" height="2" /><rect x="898.62" y="433.83" width="2.200" height="2" /><rect x="895.31" y="488.14" width="2.200" height="2" /><rect x="876.61" y="456.87" width="2.200" height="2" /><rect x="881.44" y="455.6" width="2.200" height="2" /><rect x="825.83" y="448.38" width="2.200" height="2" /><rect x="879.64" y="454.85" width="2.200" height="2" /><rect x="849.03" y="455.15" width="2.200" height="2" /><rect x="879.17" y="455.53" width="2.200" height="2" /><rect x="872.06" y="445.33" width="2.200" height="2" /><rect x="866.54" y="451.71" width="2.200" height="2" /><rect x="857.55" y="478.26" width="2.200" height="2" /><rect x="867.1" y="456.06" width="2.200" height="2" /><rect x="894.57" y="460.3" width="2.200" height="2" /><rect x="862.19" y="453.51" width="2.200" height="2" /><rect x="835.78" y="447.71" width="2.200" height="2" /><rect x="833.63" y="464.89" width="2.200" height="2" /><rect x="822.37" y="478.82" width="2.200" height="2" /><rect x="845.7" y="493.86" width="2.200" height="2" /><rect x="873.22" y="455.66" width="2.200" height="2" /><rect x="873.46" y="465.07" width="2.200" height="2" /><rect x="893.7" y="452.1" width="2.200" height="2" /><rect x="900.77" y="463.89" width="2.200" height="2" /><rect x="893.51" y="446.25" width="2.200" height="2" /><rect x="924.21" y="447" width="2.200" height="2" /><rect x="889.67" y="448.34" width="2.200" height="2" /><rect x="877.7" y="460.35" width="2.200" height="2" /><rect x="862.77" y="457.21" width="2.200" height="2" /><rect x="879.71" y="455.78" width="2.200" height="2" /><rect x="866.26" y="448.26" width="2.200" height="2" /><rect x="894.14" y="452.93" width="2.200" height="2" /><rect x="862.6" y="445.26" width="2.200" height="2" /><rect x="881.15" y="450.78" width="2.200" height="2" /><rect x="879.21" y="456.06" width="2.200" height="2" /><rect x="878.78" y="456.93" width="2.200" height="2" /><rect x="897.61" y="434.68" width="2.200" height="2" /><rect x="886.05" y="466.81" width="2.200" height="2" /><rect x="860.19" y="458.57" width="2.200" height="2" /><rect x="875.45" y="452.61" width="2.200" height="2" /><rect x="846.18" y="456.13" width="2.200" height="2" /><rect x="878.98" y="455.79" width="2.200" height="2" /><rect x="897.03" y="463.84" width="2.200" height="2" /><rect x="908.17" y="466.05" width="2.200" height="2" /><rect x="891.74" y="459.49" width="2.200" height="2" /><rect x="891.81" y="437.39" width="2.200" height="2" /><rect x="877.04" y="454.49" width="2.200" height="2" /><rect x="888.2" y="454.64" width="2.200" height="2" /><rect x="881.85" y="443.34" width="2.200" height="2" /><rect x="857.05" y="478.08" width="2.200" height="2" /><rect x="880.1" y="456.12" width="2.200" height="2" /><rect x="889.24" y="449.64" width="2.200" height="2" /><rect x="865.11" y="452.31" width="2.200" height="2" /><rect x="862.1" y="468.06" width="2.200" height="2" /><rect x="904.51" y="457.6" width="2.200" height="2" /><rect x="900.62" y="448.75" width="2.200" height="2" /><rect x="866.18" y="460.97" width="2.200" height="2" /><rect x="892.48" y="455.96" width="2.200" height="2" /><rect x="892.04" y="449.81" width="2.200" height="2" /><rect x="893.9" y="446.4" width="2.200" height="2" /><rect x="884.2" y="447.8" width="2.200" height="2" /><rect x="911.78" y="445.24" width="2.200" height="2" /><rect x="861.07" y="458.6" width="2.200" height="2" /><rect x="874.86" y="458.71" width="2.200" height="2" /><rect x="878.71" y="453.06" width="2.200" height="2" /><rect x="895.09" y="443.01" width="2.200" height="2" /><rect x="874.37" y="456.6" width="2.200" height="2" /><rect x="888.16" y="465.05" width="2.200" height="2" /><rect x="862.55" y="471.72" width="2.200" height="2" /><rect x="863.33" y="498.37" width="2.200" height="2" /><rect x="857.17" y="452.91" width="2.200" height="2" /><rect x="863.53" y="467.03" width="2.200" height="2" /><rect x="869.47" y="461.57" width="2.200" height="2" /><rect x="881.94" y="452.04" width="2.200" height="2" /><rect x="879.18" y="455.83" width="2.200" height="2" /><rect x="875.95" y="466.86" width="2.200" height="2" /><rect x="882.52" y="479.48" width="2.200" height="2" /><rect x="874.96" y="460.77" width="2.200" height="2" /><rect x="881.25" y="456.94" width="2.200" height="2" /><rect x="878.14" y="462.86" width="2.200" height="2" /><rect x="889.45" y="443.01" width="2.200" height="2" /><rect x="889.95" y="442.59" width="2.200" height="2" /><rect x="883.93" y="446.78" width="2.200" height="2" /><rect x="875.99" y="442.88" width="2.200" height="2" /><rect x="867.23" y="465.18" width="2.200" height="2" /><rect x="883.87" y="453.93" width="2.200" height="2" /><rect x="875.44" y="456.03" width="2.200" height="2" /><rect x="898.72" y="466.16" width="2.200" height="2" /><rect x="878.48" y="453.28" width="2.200" height="2" /><rect x="832.09" y="443.6" width="2.200" height="2" /><rect x="878.93" y="455.99" width="2.200" height="2" /><rect x="887.8" y="476.88" width="2.200" height="2" /><rect x="895.05" y="442.66" width="2.200" height="2" /><rect x="858.53" y="454.89" width="2.200" height="2" /><rect x="879.05" y="457.83" width="2.200" height="2" /><rect x="865.56" y="443.71" width="2.200" height="2" /><rect x="870.72" y="454.22" width="2.200" height="2" /><rect x="900.07" y="460.49" width="2.200" height="2" /><rect x="876.99" y="495.03" width="2.200" height="2" /><rect x="881.45" y="489.38" width="2.200" height="2" /><rect x="874.88" y="486.36" width="2.200" height="2" /><rect x="882.71" y="484.51" width="2.200" height="2" /><rect x="880.71" y="471.48" width="2.200" height="2" /><rect x="881.15" y="476.29" width="2.200" height="2" /><rect x="875.41" y="491" width="2.200" height="2" /><rect x="880.25" y="481.6" width="2.200" height="2" /><rect x="899.68" y="492.75" width="2.200" height="2" /><rect x="898.87" y="495.34" width="2.200" height="2" /><rect x="875.6" y="477.8" width="2.200" height="2" /><rect x="872.42" y="489.89" width="2.200" height="2" /><rect x="892.07" y="480.04" width="2.200" height="2" /><rect x="884.29" y="489.27" width="2.200" height="2" /><rect x="893.18" y="476.95" width="2.200" height="2" /><rect x="897.75" y="480.06" width="2.200" height="2" /><rect x="890.99" y="474.95" width="2.200" height="2" /><rect x="875.07" y="496.88" width="2.200" height="2" /><rect x="894.26" y="490.88" width="2.200" height="2" /><rect x="872.75" y="470.7" width="2.200" height="2" /><rect x="876.52" y="475.44" width="2.200" height="2" /><rect x="880.9" y="480.92" width="2.200" height="2" /><rect x="872.72" y="478.83" width="2.200" height="2" /><rect x="891.29" y="474.89" width="2.200" height="2" /><rect x="897.52" y="486.6" width="2.200" height="2" /><rect x="893.72" y="477.14" width="2.200" height="2" /><rect x="884.98" y="490.03" width="2.200" height="2" /><rect x="882.32" y="469.53" width="2.200" height="2" /><rect x="897.36" y="492.79" width="2.200" height="2" /><rect x="880.38" y="470.79" width="2.200" height="2" /><rect x="897.98" y="487.72" width="2.200" height="2" /><rect x="872.97" y="476.83" width="2.200" height="2" /><rect x="874.95" y="493.24" width="2.200" height="2" /><rect x="878.01" y="496.93" width="2.200" height="2" /><rect x="894.74" y="472.08" width="2.200" height="2" /><rect x="893.03" y="481.31" width="2.200" height="2" /><rect x="894.67" y="494.36" width="2.200" height="2" /><rect x="880.22" y="472.2" width="2.200" height="2" /><rect x="900.84" y="482.22" width="2.200" height="2" /><rect x="900.34" y="490.25" width="2.200" height="2" /><rect x="735.5" y="460.5" width="2.600" height="2.400" /><rect x="756.5" y="457.5" width="2.600" height="2.400" /><rect x="783.5" y="450.5" width="2.600" height="2.400" /><rect x="790.5" y="449.5" width="2.600" height="2.400" /><rect x="796.5" y="449.5" width="2.600" height="2.400" /><rect x="807.5" y="450.5" width="2.600" height="2.400" /><rect x="815.5" y="451.5" width="2.600" height="2.400" /><rect x="821.5" y="451.5" width="2.600" height="2.400" /><rect x="827.5" y="452.5" width="2.600" height="2.400" /><rect x="805.5" y="425.5" width="2.600" height="2.400" /><rect x="805.5" y="429.5" width="2.600" height="2.400" /><rect x="812.5" y="431.5" width="2.600" height="2.400" /><rect x="819.5" y="432.5" width="2.600" height="2.400" /><rect x="826.5" y="435.5" width="2.600" height="2.400" /><rect x="833.5" y="441.5" width="2.600" height="2.400" /></g><path d="M883.73 424.06L879.81 433.08M837.19 419.84L867.63 434.86M896.61 401.58L887.98 420.81M881.29 423.28L857.43 435.89M899.42 417.9L874.68 426.99M837.54 408.95L866.61 425.54M854.62 401.87L884.63 439.61M849.68 405.23L872.94 432.85M897.14 408.75L859.76 446.04M843.15 415.52L861.85 443.96M870.78 421.84L851.82 439.5M874.21 412.26L888.24 444.44M841.28 406.76L863.49 425.69M837.6 406.49L853.52 440.55M863.97 401.12L861.29 433.56M858.18 402.88L845.88 419.82M900.96 421.51L846.62 441.01M900.15 415.54L848.14 434.17M863.03 403.57L874.63 419.75M896.03 418.12L879.79 447.56M877.88 405.55L856.51 423.66M835.38 422.28L892.71 428.39M846.13 417.92L893.09 447.3M844.96 422.61L892.15 441.77M855.71 403.41L891.84 429.1M858.56 415.14L864.03 444.44M849.78 398.82L876.08 438.35M889.24 420.08L896.72 447.85M867.12 413.48L851.11 428.49M873.02 400.07L883.47 424.41M863.64 428.53L846.97 420.7M863.39 403.61L885.6 419.58M890.68 424.87L889.5 432.26M852.76 418.67L872.89 432.14M856.53 411.54L882.13 444.28M894.97 402.76L859.54 432.79" stroke="#c8702c" stroke-width="0.700" stroke-opacity="0.750" fill="none"/><g fill="#e8742a"><rect x="870.94" y="407.94" width="2.400" height="2.200"/><rect x="845.18" y="400.05" width="2.400" height="2.200"/><rect x="854.16" y="411.31" width="2.400" height="2.200"/><rect x="899.49" y="424.76" width="2.400" height="2.200"/><rect x="892.08" y="426.73" width="2.400" height="2.200"/><rect x="898.83" y="416.1" width="2.400" height="2.200"/><rect x="888.28" y="399.3" width="2.400" height="2.200"/><rect x="878.85" y="415.77" width="2.400" height="2.200"/><rect x="852.29" y="414.63" width="2.400" height="2.200"/><rect x="898.2" y="411.92" width="2.400" height="2.200"/><rect x="876.82" y="406.48" width="2.400" height="2.200"/><rect x="855.54" y="424.05" width="2.400" height="2.200"/><rect x="833.45" y="403.17" width="2.400" height="2.200"/><rect x="879.01" y="410.92" width="2.400" height="2.200"/><rect x="837.46" y="417.31" width="2.400" height="2.200"/><rect x="857.54" y="414.92" width="2.400" height="2.200"/><rect x="860.65" y="413.4" width="2.400" height="2.200"/><rect x="871.04" y="409.39" width="2.400" height="2.200"/><rect x="839.5" y="402.92" width="2.400" height="2.200"/><rect x="893.8" y="413.94" width="2.400" height="2.200"/><rect x="839.36" y="423.37" width="2.400" height="2.200"/><rect x="849.24" y="400.35" width="2.400" height="2.200"/><rect x="868.65" y="405.05" width="2.400" height="2.200"/><rect x="865.75" y="414.12" width="2.400" height="2.200"/><rect x="847.36" y="414.68" width="2.400" height="2.200"/><rect x="839.41" y="412.9" width="2.400" height="2.200"/></g><path d="M865.5 389L879.5 414.5M865.5 389L893.5 415.5M865.5 389L854.5 411.5M896.5 365.5L863.5 409.5M879.5 372.5L902.5 391.5M884.5 380L902.5 399.5" stroke="#22b07a" stroke-width="0.900" fill="none"/><g fill="#1c7a2e" stroke="#19d6f4" stroke-width="1.300"><circle cx="855.5" cy="365.5" r="3.600"/><circle cx="876.5" cy="365.5" r="3.600"/><circle cx="896.5" cy="365.5" r="3.600"/><circle cx="858.5" cy="372.5" r="3.600"/><circle cx="879.5" cy="372.5" r="3.600"/><circle cx="900.5" cy="372.5" r="3.600"/><circle cx="861.5" cy="380" r="3.600"/><circle cx="884.5" cy="380" r="3.600"/><circle cx="865.5" cy="389" r="3.600"/><circle cx="890.5" cy="389.5" r="3.600"/></g><g fill="#2a86d8"><rect x="852.5" y="393.5" width="2.600" height="3"/><rect x="854.5" y="400.5" width="2.600" height="3"/><rect x="863.5" y="407.5" width="2.600" height="3"/><rect x="878.5" y="413.5" width="2.600" height="3"/><rect x="893.5" y="414.5" width="2.600" height="3"/><rect x="877.5" y="383.5" width="2.600" height="3"/></g></g>
<clipPath id="t5"><rect x="105" y="608.4" width="181.500" height="181.400"/></clipPath>
<g clip-path="url(#t5)"><path d="M216.93 692.08L217.89 690.8M216.93 692.08L216.55 689.31M216.93 692.08L220.42 694.2M217.74 713.72L213.68 712.57M217.74 713.72L212.37 716.9M217.74 713.72L215.17 720.75M178.68 725.43L180.24 729.44M178.68 725.43L172.48 719.26M178.68 725.43L178.83 734.23M182.4 685.59L184.92 684.88M182.4 685.59L179.19 685.19M182.4 685.59L181.68 681.53M235.01 679.18L234.87 681.45M235.01 679.18L236.27 681.56M235.01 679.18L237.93 677.59M288.48 699.63L289.47 703.23M288.48 699.63L283.02 704.78M288.48 699.63L293.76 705.67M280.82 738.56L278.14 740.34M280.82 738.56L276.86 738.06M280.82 738.56L280.73 743.86M212.41 720.66L209.96 720.81M212.41 720.66L215.17 720.75M212.41 720.66L212.37 716.9M280.88 690.63L281.96 685.27M280.88 690.63L279.38 697.74M280.88 690.63L283.18 682.54M237.93 677.59L235.01 679.18M237.93 677.59L236.27 681.56M237.93 677.59L234.87 681.45M236.9 685.1L236.27 681.56M236.9 685.1L238.67 688.39M236.9 685.1L234.87 681.45M237.26 743.26L242.23 738.5M237.26 743.26L230.7 746.32M237.26 743.26L239.36 736.18M283.45 707.72L283.02 704.78M283.45 707.72L289.47 703.23M283.45 707.72L278.4 715.5M242.23 738.5L239.36 736.18M242.23 738.5L237.26 743.26M242.23 738.5L237.5 733.25M222.81 661.26L224.4 662.49M222.81 661.26L221.22 667.26M222.81 661.26L216.55 665.38M272.82 669.56L270.5 665.87M272.82 669.56L274.78 665.36M272.82 669.56L269.15 666.15M267.59 667.37L267.58 668.83M267.59 667.37L269.15 666.15M267.59 667.37L270.5 665.87M285.95 672.68L283.18 682.54M285.95 672.68L277.32 679.05M285.95 672.68L277.2 680.55M261.32 752.11L262.02 748.94M261.32 752.11L256.97 751.88M261.32 752.11L257.95 756.81M203.53 750.94L208.22 753.13M203.53 750.94L201.26 755.87M203.53 750.94L198.83 747.98M209.36 649.03L212.61 648.27M209.36 649.03L210.75 642.69M209.36 649.03L214.3 653.82M262.5 731.15L261.91 735.52M262.5 731.15L266.82 734.52M262.5 731.15L251.4 732.73M229.01 639.51L229.27 640.37M229.01 639.51L227.65 639.14M229.01 639.51L234.56 643.56M231.17 686.82L228.32 688.41M231.17 686.82L236.9 685.1M231.17 686.82L234.87 681.45M216.55 689.31L217.89 690.8M216.55 689.31L216.93 692.08M216.55 689.31L220.42 694.2M179.19 685.19L182.4 685.59M179.19 685.19L181.68 681.53M179.19 685.19L184.92 684.88M280.73 743.86L282.29 744.47M280.73 743.86L278.14 740.34M280.73 743.86L280.82 738.56M218.96 672.68L217.66 672.14M218.96 672.68L217.62 668.97M218.96 672.68L217.63 668.01M249.14 744.28L251.91 747.55M249.14 744.28L253 747.89M249.14 744.28L252.91 737.84M259.85 660.27L261.93 665.43M259.85 660.27L265.36 654.57M259.85 660.27L256.93 668.53M243.74 711.5L241.35 711.07M243.74 711.5L241.39 715.13M243.74 711.5L243.1 719.52M278.14 740.34L276.86 738.06M278.14 740.34L280.82 738.56M278.14 740.34L280.73 743.86M253 747.89L251.91 747.55M253 747.89L249.14 744.28M253 747.89L256.97 751.88M220.73 755.55L215.33 756.85M220.73 755.55L227.32 749.02M220.73 755.55L230.32 752.37M215.17 720.75L212.41 720.66M215.17 720.75L212.37 716.9M215.17 720.75L219.39 723.62M267.58 668.83L267.59 667.37M267.58 668.83L269.15 666.15M267.58 668.83L270.5 665.87M212.61 648.27L209.36 649.03M212.61 648.27L214.3 653.82M212.61 648.27L210.75 642.69M245.12 699.12L244.15 702.79M245.12 699.12L248.51 701M245.12 699.12L248.78 702.16M219.62 725.27L220.39 724.42M219.62 725.27L219.39 723.62M219.62 725.27L223.8 722.06M174.12 702.22L173.76 708.49M174.12 702.22L172.55 693.65M174.12 702.22L172.34 691.66M238.67 688.39L236.9 685.1M238.67 688.39L236.27 681.56M238.67 688.39L231.17 686.82M257.95 756.81L256.97 751.88M257.95 756.81L261.32 752.11M257.95 756.81L262.02 748.94M216.55 665.38L217.63 668.01M216.55 665.38L217.62 668.97M216.55 665.38L221.22 667.26M207.53 707.05L210.91 702.79M207.53 707.05L202.21 701.93M207.53 707.05L213.68 712.57M256.93 668.53L261.93 665.43M256.93 668.53L250.52 663.29M256.93 668.53L259.85 660.27M269.15 666.15L270.5 665.87M269.15 666.15L267.59 667.37M269.15 666.15L267.58 668.83M267.29 720.44L269.19 717.23M267.29 720.44L273.08 717.95M267.29 720.44L275 721.86M246.73 763.32L247.68 765.6M246.73 763.32L249.05 762.4M246.73 763.32L239.51 760.88M220.42 694.2L216.93 692.08M220.42 694.2L217.89 690.8M220.42 694.2L216.55 689.31M252.91 737.84L251.4 732.73M252.91 737.84L249.14 744.28M252.91 737.84L261.91 735.52M186.03 712.95L182.52 710.96M186.03 712.95L180.19 712.2M186.03 712.95L192.62 715.7M204.47 728.5L203.38 729.72M204.47 728.5L204.27 725.14M204.47 728.5L210.82 725.96M283.02 704.78L283.45 707.72M283.02 704.78L289.47 703.23M283.02 704.78L288.48 699.63M227.56 714.2L226.75 711.55M227.56 714.2L230.05 715.98M227.56 714.2L233.37 716.36M172.48 719.26L178.68 725.43M172.48 719.26L180.19 712.2M172.48 719.26L173.76 708.49M258.79 710.31L258.52 707.34M258.79 710.31L258.77 716.8M258.79 710.31L256.54 719.07M217.66 672.14L218.96 672.68M217.66 672.14L217.62 668.97M217.66 672.14L217.63 668.01M227.32 749.02L230.7 746.32M227.32 749.02L230.32 752.37M227.32 749.02L232.52 754.23M230.32 752.37L232.52 754.23M230.32 752.37L227.32 749.02M230.32 752.37L230.7 746.32M172.34 691.66L172.55 693.65M172.34 691.66L179.19 685.19M172.34 691.66L174.12 702.22M248.78 702.16L248.51 701M248.78 702.16L251.46 701.5M248.78 702.16L244.15 702.79M181.68 681.53L182.4 685.59M181.68 681.53L179.19 685.19M181.68 681.53L184.92 684.88M273.28 661.5L272.27 663.41M273.28 661.5L274.78 665.36M273.28 661.5L270.5 665.87M199.63 664.08L201.21 667.77M199.63 664.08L204.99 664.14M199.63 664.08L192.76 666.3M211.32 729.84L210.82 725.96M211.32 729.84L204.47 728.5M211.32 729.84L203.38 729.72M250.82 644.28L255.89 645.95M250.82 644.28L242.96 639M250.82 644.28L236.97 650.36M283.18 682.54L281.96 685.27M283.18 682.54L277.2 680.55M283.18 682.54L277.32 679.05M215.33 756.85L220.73 755.55M215.33 756.85L209.63 758.9M215.33 756.85L208.22 753.13M230.97 655.99L227 654.56M230.97 655.99L232.32 662.1M230.97 655.99L236.97 650.36M208.52 673.35L208.9 673.45M208.52 673.35L209.48 668.95M208.52 673.35L203.84 680.08M194.71 689.67L188.01 689.6M194.71 689.67L201.31 687.53M194.71 689.67L189.76 696.61M269.19 717.23L267.29 720.44M269.19 717.23L273.08 717.95M269.19 717.23L275 721.86M205.75 761.06L206.75 758.45M205.75 761.06L208.71 761.87M205.75 761.06L209.63 758.9M194.82 707.58L200.86 713.14M194.82 707.58L192.62 715.7M194.82 707.58L202.21 701.93M235.32 735.52L237.5 733.25M235.32 735.52L239.36 736.18M235.32 735.52L229.95 731.33M219.39 723.62L220.39 724.42M219.39 723.62L219.62 725.27M219.39 723.62L223.8 722.06M293.76 705.67L295.06 706.59M293.76 705.67L289.47 703.23M293.76 705.67L297.21 711.02M192.62 715.7L186.03 712.95M192.62 715.7L194.82 707.58M192.62 715.7L200.86 713.14M201.31 687.53L206.74 683.27M201.31 687.53L194.71 689.67M201.31 687.53L203.84 680.08M243.1 719.52L241.39 715.13M243.1 719.52L241.46 725.54M243.1 719.52L248.22 724.59M222.45 738.04L226.36 740.44M222.45 738.04L229.95 731.33M222.45 738.04L230.7 746.32M227 654.56L230.97 655.99M227 654.56L222.81 661.26M227 654.56L224.4 662.49M269.16 688.03L270.58 688.06M269.16 688.03L267.61 683.68M269.16 688.03L261.04 688.38M277.32 679.05L277.2 680.55M277.32 679.05L276.14 681.79M277.32 679.05L283.18 682.54M258.77 716.8L256.54 719.07M258.77 716.8L258.79 710.31M258.77 716.8L267.29 720.44M178.35 671.47L181.09 673.57M178.35 671.47L180.6 667.22M178.35 671.47L186.44 666.29M198.83 747.98L197.77 747.36M198.83 747.98L203.53 750.94M198.83 747.98L201.26 755.87M180.24 729.44L178.68 725.43M180.24 729.44L178.83 734.23M180.24 729.44L182.16 736.49M275 721.86L276.55 720.14M275 721.86L279.04 721.09M275 721.86L273.08 717.95M261.79 682.06L267.61 683.68M261.79 682.06L261.04 688.38M261.79 682.06L257.15 677.52M233.37 716.36L230.05 715.98M233.37 716.36L232.26 722.13M233.37 716.36L227.56 714.2M251.4 732.73L252.91 737.84M251.4 732.73L250.66 726.08M251.4 732.73L248.22 724.59M225.25 672.61L218.96 672.68M225.25 672.61L221.22 667.26M225.25 672.61L217.66 672.14M209.96 720.81L212.41 720.66M209.96 720.81L212.37 716.9M209.96 720.81L215.17 720.75M186.44 666.29L185.97 663.48M186.44 666.29L180.6 667.22M186.44 666.29L192.76 666.3M216.36 678.75L218.96 672.68M216.36 678.75L217.66 672.14M216.36 678.75L208.9 673.45M227.65 639.14L229.01 639.51M227.65 639.14L229.27 640.37M227.65 639.14L221.37 642.88M217.89 690.8L216.93 692.08M217.89 690.8L216.55 689.31M217.89 690.8L220.42 694.2M255.89 645.95L250.82 644.28M255.89 645.95L265.36 654.57M255.89 645.95L242.96 639M220.39 724.42L219.62 725.27M220.39 724.42L219.39 723.62M220.39 724.42L223.8 722.06M251.91 747.55L253 747.89M251.91 747.55L249.14 744.28M251.91 747.55L256.97 751.88M270.5 665.87L269.15 666.15M270.5 665.87L272.27 663.41M270.5 665.87L267.59 667.37M261.04 688.38L261.79 682.06M261.04 688.38L267.61 683.68M261.04 688.38L269.16 688.03M208.22 753.13L203.53 750.94M208.22 753.13L206.75 758.45M208.22 753.13L209.63 758.9M209.48 668.95L208.52 673.35M209.48 668.95L208.9 673.45M209.48 668.95L204.99 664.14M217.63 668.01L217.62 668.97M217.63 668.01L216.55 665.38M217.63 668.01L221.22 667.26M273.08 717.95L269.19 717.23M273.08 717.95L276.55 720.14M273.08 717.95L275 721.86M282.89 717.54L278.4 715.5M282.89 717.54L279.04 721.09M282.89 717.54L281.39 723.98M210.98 742.88L206.41 739.86M210.98 742.88L208.22 753.13M210.98 742.88L203.53 750.94M206.74 683.27L203.84 680.08M206.74 683.27L201.31 687.53M206.74 683.27L207.21 693.01M222.62 705.62L226.75 711.55M222.62 705.62L217.74 713.72M222.62 705.62L227.56 714.2M277.2 680.55L277.32 679.05M277.2 680.55L276.14 681.79M277.2 680.55L283.18 682.54M251.46 701.5L248.78 702.16M251.46 701.5L248.51 701M251.46 701.5L245.12 699.12M192.76 666.3L186.44 666.29M192.76 666.3L199.63 664.08M192.76 666.3L185.97 663.48M223.8 722.06L220.39 724.42M223.8 722.06L219.39 723.62M223.8 722.06L219.62 725.27M248.22 724.59L250.66 726.08M248.22 724.59L241.46 725.54M248.22 724.59L243.1 719.52M236.27 681.56L234.87 681.45M236.27 681.56L235.01 679.18M236.27 681.56L236.9 685.1M250.52 663.29L247.71 660.34M250.52 663.29L256.93 668.53M250.52 663.29L259.85 660.27M186.01 690.77L188.01 689.6M186.01 690.77L184.27 694.45M186.01 690.77L184.92 684.88M184.92 684.88L182.4 685.59M184.92 684.88L181.68 681.53M184.92 684.88L188.01 689.6M203.84 680.08L206.74 683.27M203.84 680.08L198.35 677.31M203.84 680.08L201.31 687.53M232.13 668.87L232.32 662.1M232.13 668.87L239.71 670.27M232.13 668.87L225.25 672.61M220.54 647.36L221.37 642.88M220.54 647.36L212.61 648.27M220.54 647.36L214.3 653.82M239.91 666.29L239.93 663.37M239.91 666.29L239.71 670.27M239.91 666.29L232.13 668.87M242.96 639L250.82 644.28M242.96 639L234.56 643.56M242.96 639L236.97 650.36M200.86 713.14L194.82 707.58M200.86 713.14L192.62 715.7M200.86 713.14L207.53 707.05M172.55 693.65L172.34 691.66M172.55 693.65L174.12 702.22M172.55 693.65L179.19 685.19M241.35 711.07L243.74 711.5M241.35 711.07L241.39 715.13M241.35 711.07L243.1 719.52M182.52 710.96L180.19 712.2M182.52 710.96L186.03 712.95M182.52 710.96L173.76 708.49M239.93 663.37L239.91 666.29M239.93 663.37L239.71 670.27M239.93 663.37L232.32 662.1M265.52 700.78L258.52 707.34M265.52 700.78L258.79 710.31M265.52 700.78L261.04 688.38M234.87 681.45L236.27 681.56M234.87 681.45L235.01 679.18M234.87 681.45L236.9 685.1M258.52 707.34L258.79 710.31M258.52 707.34L251.46 701.5M258.52 707.34L258.77 716.8M276.55 720.14L275 721.86M276.55 720.14L279.04 721.09M276.55 720.14L273.08 717.95M207.21 693.01L201.31 687.53M207.21 693.01L206.74 683.27M207.21 693.01L216.93 692.08M270.58 688.06L269.16 688.03M270.58 688.06L267.61 683.68M270.58 688.06L276.14 681.79M250.66 726.08L248.22 724.59M250.66 726.08L251.4 732.73M250.66 726.08L256.54 719.07M229.27 640.37L229.01 639.51M229.27 640.37L227.65 639.14M229.27 640.37L234.56 643.56M241.39 715.13L241.35 711.07M241.39 715.13L243.74 711.5M241.39 715.13L243.1 719.52M239.71 670.27L239.91 666.29M239.71 670.27L239.93 663.37M239.71 670.27L237.93 677.59M279.38 697.74L280.88 690.63M279.38 697.74L283.02 704.78M279.38 697.74L288.48 699.63M208.9 673.45L208.52 673.35M208.9 673.45L209.48 668.95M208.9 673.45L203.84 680.08M247.71 660.34L250.52 663.29M247.71 660.34L239.93 663.37M247.71 660.34L239.91 666.29M206.75 758.45L205.75 761.06M206.75 758.45L209.63 758.9M206.75 758.45L208.71 761.87M276.86 738.06L278.14 740.34M276.86 738.06L280.82 738.56M276.86 738.06L280.73 743.86M281.39 723.98L279.04 721.09M281.39 723.98L276.55 720.14M281.39 723.98L282.89 717.54M185.39 738.05L182.16 736.49M185.39 738.05L178.83 734.23M185.39 738.05L180.24 729.44M279.04 721.09L276.55 720.14M279.04 721.09L281.39 723.98M279.04 721.09L275 721.86M182.16 736.49L185.39 738.05M182.16 736.49L178.83 734.23M182.16 736.49L180.24 729.44M281.96 685.27L283.18 682.54M281.96 685.27L280.88 690.63M281.96 685.27L277.2 680.55M239.36 736.18L237.5 733.25M239.36 736.18L242.23 738.5M239.36 736.18L235.32 735.52M230.7 746.32L227.32 749.02M230.7 746.32L230.32 752.37M230.7 746.32L237.26 743.26M237.5 733.25L235.32 735.52M237.5 733.25L239.36 736.18M237.5 733.25L238.59 728.53M236.97 650.36L234.56 643.56M236.97 650.36L230.97 655.99M236.97 650.36L227 654.56M214.87 765L208.71 761.87M214.87 765L209.63 758.9M214.87 765L215.33 756.85M244.13 751.45L242.43 753.59M244.13 751.45L238.99 754.75M244.13 751.45L251.91 747.55M266.94 753.51L266.16 748.54M266.94 753.51L267.01 748M266.94 753.51L261.32 752.11M257.15 677.52L252.64 680.88M257.15 677.52L261.79 682.06M257.15 677.52L256.93 668.53M234.56 643.56L229.27 640.37M234.56 643.56L229.01 639.51M234.56 643.56L236.97 650.36M226.36 740.44L222.45 738.04M226.36 740.44L230.7 746.32M226.36 740.44L227.32 749.02M173.76 708.49L174.12 702.22M173.76 708.49L180.19 712.2M173.76 708.49L182.52 710.96M262.02 748.94L261.32 752.11M262.02 748.94L266.16 748.54M262.02 748.94L267.01 748M198.35 677.31L203.84 680.08M198.35 677.31L201.21 667.77M198.35 677.31L206.74 683.27M181.09 673.57L178.35 671.47M181.09 673.57L180.6 667.22M181.09 673.57L181.68 681.53M249.05 762.4L246.73 763.32M249.05 762.4L247.68 765.6M249.05 762.4L239.51 760.88M197.77 747.36L198.83 747.98M197.77 747.36L203.53 750.94M197.77 747.36L201.26 755.87M252.64 680.88L257.15 677.52M252.64 680.88L261.79 682.06M252.64 680.88L261.04 688.38M275.9 653.78L273.28 661.5M275.9 653.78L272.27 663.41M275.9 653.78L265.36 654.57M230.05 715.98L227.56 714.2M230.05 715.98L233.37 716.36M230.05 715.98L226.75 711.55M282.29 744.47L280.73 743.86M282.29 744.47L278.14 740.34M282.29 744.47L280.82 738.56M295.06 706.59L293.76 705.67M295.06 706.59L297.21 711.02M295.06 706.59L289.47 703.23M266.16 748.54L267.01 748M266.16 748.54L262.02 748.94M266.16 748.54L266.94 753.51M256.54 719.07L258.77 716.8M256.54 719.07L258.79 710.31M256.54 719.07L250.66 726.08M225.36 683.29L228.32 688.41M225.36 683.29L231.17 686.82M225.36 683.29L234.87 681.45M201.26 755.87L203.53 750.94M201.26 755.87L206.75 758.45M201.26 755.87L205.75 761.06M221.37 642.88L220.54 647.36M221.37 642.88L227.65 639.14M221.37 642.88L229.27 640.37M248.51 701L248.78 702.16M248.51 701L251.46 701.5M248.51 701L245.12 699.12M239.51 760.88L238.99 754.75M239.51 760.88L246.73 763.32M239.51 760.88L242.43 753.59M228.32 688.41L231.17 686.82M228.32 688.41L225.36 683.29M228.32 688.41L236.9 685.1M202.21 701.93L207.53 707.05M202.21 701.93L210.91 702.79M202.21 701.93L194.82 707.58M213.68 712.57L217.74 713.72M213.68 712.57L212.37 716.9M213.68 712.57L212.41 720.66M297.21 711.02L295.06 706.59M297.21 711.02L293.76 705.67M297.21 711.02L289.47 703.23M209.63 758.9L206.75 758.45M209.63 758.9L208.71 761.87M209.63 758.9L205.75 761.06M266.82 734.52L261.91 735.52M266.82 734.52L262.5 731.15M266.82 734.52L276.86 738.06M261.91 735.52L262.5 731.15M261.91 735.52L266.82 734.52M261.91 735.52L252.91 737.84M256.97 751.88L261.32 752.11M256.97 751.88L257.95 756.81M256.97 751.88L253 747.89M267.01 748L266.16 748.54M267.01 748L262.02 748.94M267.01 748L266.94 753.51M210.91 702.79L207.53 707.05M210.91 702.79L202.21 701.93M210.91 702.79L213.68 712.57M206.41 739.86L210.98 742.88M206.41 739.86L203.38 729.72M206.41 739.86L198.83 747.98M267.61 683.68L269.16 688.03M267.61 683.68L270.58 688.06M267.61 683.68L261.79 682.06M247.68 765.6L246.73 763.32M247.68 765.6L249.05 762.4M247.68 765.6L239.51 760.88M274.78 665.36L272.27 663.41M274.78 665.36L273.28 661.5M274.78 665.36L270.5 665.87M229.95 731.33L235.32 735.52M229.95 731.33L237.5 733.25M229.95 731.33L238.59 728.53M232.26 722.13L233.37 716.36M232.26 722.13L230.05 715.98M232.26 722.13L223.8 722.06M278.4 715.5L282.89 717.54M278.4 715.5L276.55 720.14M278.4 715.5L279.04 721.09M193.67 729.69L203.38 729.72M193.67 729.69L204.47 728.5M193.67 729.69L204.27 725.14M226.75 711.55L227.56 714.2M226.75 711.55L230.05 715.98M226.75 711.55L222.62 705.62M214.3 653.82L212.61 648.27M214.3 653.82L209.36 649.03M214.3 653.82L220.54 647.36M188.01 689.6L186.01 690.77M188.01 689.6L184.92 684.88M188.01 689.6L184.27 694.45M210.75 642.69L212.61 648.27M210.75 642.69L209.36 649.03M210.75 642.69L221.37 642.88M272.27 663.41L273.28 661.5M272.27 663.41L270.5 665.87M272.27 663.41L274.78 665.36M204.27 725.14L204.47 728.5M204.27 725.14L203.38 729.72M204.27 725.14L210.82 725.96M178.83 734.23L182.16 736.49M178.83 734.23L180.24 729.44M178.83 734.23L185.39 738.05M203.38 729.72L204.47 728.5M203.38 729.72L204.27 725.14M203.38 729.72L211.32 729.84M212.37 716.9L212.41 720.66M212.37 716.9L213.68 712.57M212.37 716.9L209.96 720.81M244.15 702.79L245.12 699.12M244.15 702.79L248.78 702.16M244.15 702.79L248.51 701M185.97 663.48L186.44 666.29M185.97 663.48L180.6 667.22M185.97 663.48L192.76 666.3M232.52 754.23L230.32 752.37M232.52 754.23L238.99 754.75M232.52 754.23L227.32 749.02M210.82 725.96L211.32 729.84M210.82 725.96L209.96 720.81M210.82 725.96L212.41 720.66M241.46 725.54L238.59 728.53M241.46 725.54L243.1 719.52M241.46 725.54L248.22 724.59M265.36 654.57L259.85 660.27M265.36 654.57L273.28 661.5M265.36 654.57L275.9 653.78M248.06 693.61L245.12 699.12M248.06 693.61L248.51 701M248.06 693.61L248.78 702.16M221.22 667.26L217.63 668.01M221.22 667.26L217.62 668.97M221.22 667.26L216.55 665.38M204.99 664.14L201.21 667.77M204.99 664.14L199.63 664.08M204.99 664.14L209.48 668.95M208.71 761.87L205.75 761.06M208.71 761.87L209.63 758.9M208.71 761.87L206.75 758.45M289.47 703.23L288.48 699.63M289.47 703.23L293.76 705.67M289.47 703.23L295.06 706.59M261.93 665.43L259.85 660.27M261.93 665.43L256.93 668.53M261.93 665.43L267.59 667.37M180.6 667.22L178.35 671.47M180.6 667.22L186.44 666.29M180.6 667.22L181.09 673.57M238.99 754.75L242.43 753.59M238.99 754.75L244.13 751.45M238.99 754.75L239.51 760.88M232.32 662.1L230.97 655.99M232.32 662.1L232.13 668.87M232.32 662.1L239.93 663.37M224.4 662.49L222.81 661.26M224.4 662.49L221.22 667.26M224.4 662.49L232.32 662.1M184.27 694.45L186.01 690.77M184.27 694.45L189.76 696.61M184.27 694.45L188.01 689.6M217.62 668.97L217.63 668.01M217.62 668.97L217.66 672.14M217.62 668.97L216.55 665.38M201.21 667.77L199.63 664.08M201.21 667.77L204.99 664.14M201.21 667.77L209.48 668.95M242.43 753.59L244.13 751.45M242.43 753.59L238.99 754.75M242.43 753.59L239.51 760.88M228.28 764.92L232.52 754.23M228.28 764.92L239.51 760.88M228.28 764.92L220.73 755.55M180.19 712.2L182.52 710.96M180.19 712.2L186.03 712.95M180.19 712.2L173.76 708.49M189.76 696.61L184.27 694.45M189.76 696.61L186.01 690.77M189.76 696.61L188.01 689.6M238.59 728.53L241.46 725.54M238.59 728.53L237.5 733.25M238.59 728.53L239.36 736.18M276.14 681.79L277.2 680.55M276.14 681.79L277.32 679.05M276.14 681.79L281.96 685.27M170.72 693.31Q246.53 692.45 271.37 650.94M264 759.43Q232.41 708.52 176.55 674.7M263.93 646.33Q248.71 684.63 235.57 766.88M187 746.34Q246.71 687.82 247.63 640.37M270.36 755.57Q218.11 697.17 180.21 737.58M255 642.44Q232.11 686.42 278.69 748.71M183.3 741.95Q241.8 700.87 268.43 648.95M170.59 711.58Q244.35 688.9 278.57 656.97M206.82 644.96Q234.83 692.41 296.42 688.78M189.96 749.34Q229.25 683.61 195.85 651.51M253.45 763.87Q216.31 690.04 171.73 688.1M221.29 640.17Q226.96 692.57 297.45 694.52M266.28 647.64Q239.45 717.26 295.07 722.06M253.13 763.97Q245.69 707.61 170 702.73M189.72 749.11Q231.7 697.59 176.76 674.28M219.07 640.66Q230.32 708.83 297.43 694.36M257.87 643.52Q229.41 706.05 287.7 737.71M290.99 673.78Q252.86 711.38 266.72 757.9M189.5 748.9Q227.18 685.73 227.11 639.27M236.43 638.95Q235.03 702.76 295.61 720.23M286.09 665.71Q215.02 706.61 220.01 765.35M171.76 717.82Q247.58 699.5 242.51 639.47M170.88 713.47Q231.59 702.55 283.65 662.51M170.18 698.16Q240.82 712.52 288.63 669.56M181.83 739.97Q241.19 705.05 182.94 664.31M241.71 639.37Q218.72 691.73 269.55 756.12M232 712.4L254.99 724.51M232 712.4L239.98 718.33M232 712.4L232.42 691.99M232 712.4L253.62 720.19M232 712.4L227.49 694.33M232 712.4L253.84 720.23M232 712.4L213.86 722.68M232 712.4L257.97 712.09M232 712.4L239.77 704.33M232 712.4L222.19 729.14M232 712.4L261.73 713.53M232 712.4L229.87 726.01M232 712.4L226.75 724.96M232 712.4L244.78 696.73M232 712.4L214.8 711.21M232 712.4L245.95 717.04M246 756.4L263.17 737.35M246 756.4L254.48 745.7M246 756.4L248.72 765.13M246 756.4L230.21 752.68M246 756.4L227.71 760.58M246 756.4L232.13 748.34M246 756.4L249.94 744.64M246 756.4L263.69 746.58M246 756.4L260.15 761.11M246 756.4L229.37 752.89M246 756.4L232.12 750.4M246 756.4L242.24 781.63M246 756.4L239.9 779.23M246 756.4L252.81 736.51M246 756.4L218.59 764.44M246 756.4L220.3 765.67M263 704.4L279.4 710.62M263 704.4L257.18 697.43M263 704.4L269.23 697.12M263 704.4L253.16 697.6M263 704.4L280.97 694.87M263 704.4L268.94 686.39M263 704.4L252.48 684.12M263 704.4L259.48 716.54M263 704.4L268.9 694.87M263 704.4L273.92 698.21M263 704.4L271.13 710.38M263 704.4L269.18 676.15M263 704.4L243.66 715.89M263 704.4L261.67 732.3M263 704.4L258.53 693.91M263 704.4L284.84 712.52" stroke="#6a9ac8" stroke-width="0.550" stroke-opacity="0.700" fill="none"/><g fill="#d8761c"><circle cx="216.93" cy="692.08" r="0.700"/><circle cx="182.4" cy="685.59" r="0.700"/><circle cx="280.82" cy="738.56" r="0.700"/><circle cx="237.93" cy="677.59" r="0.700"/><circle cx="283.45" cy="707.72" r="0.700"/><circle cx="272.82" cy="669.56" r="0.700"/><circle cx="261.32" cy="752.11" r="0.700"/><circle cx="262.5" cy="731.15" r="0.700"/><circle cx="216.55" cy="689.31" r="0.700"/><circle cx="218.96" cy="672.68" r="0.700"/><circle cx="243.74" cy="711.5" r="0.700"/><circle cx="220.73" cy="755.55" r="0.700"/><circle cx="212.61" cy="648.27" r="0.700"/><circle cx="174.12" cy="702.22" r="0.700"/><circle cx="216.55" cy="665.38" r="0.700"/><circle cx="269.15" cy="666.15" r="0.700"/><circle cx="220.42" cy="694.2" r="0.700"/><circle cx="204.47" cy="728.5" r="0.700"/><circle cx="172.48" cy="719.26" r="0.700"/><circle cx="227.32" cy="749.02" r="0.700"/><circle cx="248.78" cy="702.16" r="0.700"/><circle cx="199.63" cy="664.08" r="0.700"/><circle cx="283.18" cy="682.54" r="0.700"/><circle cx="208.52" cy="673.35" r="0.700"/><circle cx="205.75" cy="761.06" r="0.700"/><circle cx="219.39" cy="723.62" r="0.700"/><circle cx="201.31" cy="687.53" r="0.700"/><circle cx="227" cy="654.56" r="0.700"/><circle cx="258.77" cy="716.8" r="0.700"/><circle cx="180.24" cy="729.44" r="0.700"/><circle cx="233.37" cy="716.36" r="0.700"/><circle cx="209.96" cy="720.81" r="0.700"/><circle cx="227.65" cy="639.14" r="0.700"/><circle cx="220.39" cy="724.42" r="0.700"/><circle cx="261.04" cy="688.38" r="0.700"/><circle cx="217.63" cy="668.01" r="0.700"/><circle cx="210.98" cy="742.88" r="0.700"/><circle cx="277.2" cy="680.55" r="0.700"/><circle cx="223.8" cy="722.06" r="0.700"/><circle cx="250.52" cy="663.29" r="0.700"/><circle cx="203.84" cy="680.08" r="0.700"/><circle cx="239.91" cy="666.29" r="0.700"/><circle cx="172.55" cy="693.65" r="0.700"/><circle cx="239.93" cy="663.37" r="0.700"/><circle cx="258.52" cy="707.34" r="0.700"/><circle cx="270.58" cy="688.06" r="0.700"/><circle cx="241.39" cy="715.13" r="0.700"/><circle cx="208.9" cy="673.45" r="0.700"/><circle cx="276.86" cy="738.06" r="0.700"/><circle cx="279.04" cy="721.09" r="0.700"/><circle cx="239.36" cy="736.18" r="0.700"/><circle cx="236.97" cy="650.36" r="0.700"/><circle cx="266.94" cy="753.51" r="0.700"/><circle cx="226.36" cy="740.44" r="0.700"/><circle cx="198.35" cy="677.31" r="0.700"/><circle cx="197.77" cy="747.36" r="0.700"/><circle cx="230.05" cy="715.98" r="0.700"/><circle cx="266.16" cy="748.54" r="0.700"/><circle cx="201.26" cy="755.87" r="0.700"/><circle cx="239.51" cy="760.88" r="0.700"/><circle cx="213.68" cy="712.57" r="0.700"/><circle cx="266.82" cy="734.52" r="0.700"/><circle cx="267.01" cy="748" r="0.700"/><circle cx="267.61" cy="683.68" r="0.700"/><circle cx="229.95" cy="731.33" r="0.700"/><circle cx="193.67" cy="729.69" r="0.700"/><circle cx="188.01" cy="689.6" r="0.700"/><circle cx="204.27" cy="725.14" r="0.700"/><circle cx="212.37" cy="716.9" r="0.700"/><circle cx="232.52" cy="754.23" r="0.700"/><circle cx="265.36" cy="654.57" r="0.700"/><circle cx="204.99" cy="664.14" r="0.700"/><circle cx="261.93" cy="665.43" r="0.700"/><circle cx="232.32" cy="662.1" r="0.700"/><circle cx="217.62" cy="668.97" r="0.700"/><circle cx="228.28" cy="764.92" r="0.700"/><circle cx="238.59" cy="728.53" r="0.700"/></g><g fill="#2ab6b0"><circle cx="217.74" cy="713.72" r="0.600"/><circle cx="235.01" cy="679.18" r="0.600"/><circle cx="212.41" cy="720.66" r="0.600"/><circle cx="236.9" cy="685.1" r="0.600"/><circle cx="242.23" cy="738.5" r="0.600"/><circle cx="267.59" cy="667.37" r="0.600"/><circle cx="203.53" cy="750.94" r="0.600"/><circle cx="229.01" cy="639.51" r="0.600"/><circle cx="179.19" cy="685.19" r="0.600"/><circle cx="249.14" cy="744.28" r="0.600"/><circle cx="278.14" cy="740.34" r="0.600"/><circle cx="215.17" cy="720.75" r="0.600"/><circle cx="245.12" cy="699.12" r="0.600"/><circle cx="238.67" cy="688.39" r="0.600"/><circle cx="207.53" cy="707.05" r="0.600"/><circle cx="267.29" cy="720.44" r="0.600"/><circle cx="252.91" cy="737.84" r="0.600"/><circle cx="283.02" cy="704.78" r="0.600"/><circle cx="258.79" cy="710.31" r="0.600"/><circle cx="230.32" cy="752.37" r="0.600"/><circle cx="181.68" cy="681.53" r="0.600"/><circle cx="211.32" cy="729.84" r="0.600"/><circle cx="215.33" cy="756.85" r="0.600"/><circle cx="194.71" cy="689.67" r="0.600"/><circle cx="194.82" cy="707.58" r="0.600"/><circle cx="293.76" cy="705.67" r="0.600"/><circle cx="243.1" cy="719.52" r="0.600"/><circle cx="269.16" cy="688.03" r="0.600"/><circle cx="178.35" cy="671.47" r="0.600"/><circle cx="275" cy="721.86" r="0.600"/><circle cx="251.4" cy="732.73" r="0.600"/><circle cx="186.44" cy="666.29" r="0.600"/><circle cx="217.89" cy="690.8" r="0.600"/><circle cx="251.91" cy="747.55" r="0.600"/><circle cx="208.22" cy="753.13" r="0.600"/><circle cx="273.08" cy="717.95" r="0.600"/><circle cx="206.74" cy="683.27" r="0.600"/><circle cx="251.46" cy="701.5" r="0.600"/><circle cx="248.22" cy="724.59" r="0.600"/><circle cx="186.01" cy="690.77" r="0.600"/><circle cx="232.13" cy="668.87" r="0.600"/><circle cx="242.96" cy="639" r="0.600"/><circle cx="241.35" cy="711.07" r="0.600"/><circle cx="265.52" cy="700.78" r="0.600"/><circle cx="276.55" cy="720.14" r="0.600"/><circle cx="250.66" cy="726.08" r="0.600"/><circle cx="239.71" cy="670.27" r="0.600"/><circle cx="247.71" cy="660.34" r="0.600"/><circle cx="281.39" cy="723.98" r="0.600"/><circle cx="182.16" cy="736.49" r="0.600"/><circle cx="230.7" cy="746.32" r="0.600"/><circle cx="214.87" cy="765" r="0.600"/><circle cx="257.15" cy="677.52" r="0.600"/><circle cx="173.76" cy="708.49" r="0.600"/><circle cx="181.09" cy="673.57" r="0.600"/><circle cx="252.64" cy="680.88" r="0.600"/><circle cx="282.29" cy="744.47" r="0.600"/><circle cx="256.54" cy="719.07" r="0.600"/><circle cx="221.37" cy="642.88" r="0.600"/><circle cx="228.32" cy="688.41" r="0.600"/><circle cx="297.21" cy="711.02" r="0.600"/><circle cx="261.91" cy="735.52" r="0.600"/><circle cx="210.91" cy="702.79" r="0.600"/><circle cx="247.68" cy="765.6" r="0.600"/><circle cx="232.26" cy="722.13" r="0.600"/><circle cx="226.75" cy="711.55" r="0.600"/><circle cx="210.75" cy="642.69" r="0.600"/><circle cx="178.83" cy="734.23" r="0.600"/><circle cx="244.15" cy="702.79" r="0.600"/><circle cx="210.82" cy="725.96" r="0.600"/><circle cx="248.06" cy="693.61" r="0.600"/><circle cx="208.71" cy="761.87" r="0.600"/><circle cx="180.6" cy="667.22" r="0.600"/><circle cx="224.4" cy="662.49" r="0.600"/><circle cx="201.21" cy="667.77" r="0.600"/><circle cx="180.19" cy="712.2" r="0.600"/><circle cx="276.14" cy="681.79" r="0.600"/></g><g fill="#e8f0f8"><circle cx="232" cy="712.4" r="1"/><circle cx="246" cy="756.4" r="1"/><circle cx="263" cy="704.4" r="1"/></g></g>
<clipPath id="t6"><rect x="310.5" y="608.4" width="181.500" height="181.400"/></clipPath>
<g clip-path="url(#t6)"><path d="M359.58 624.4h9M374.17 624.25h9M386.09 624.1h9M398.97 623.95h9M412.66 623.8h9M425.14 623.65h9M438.62 623.5h9M450.81 623.35h9M465.32 623.2h9M477.15 623.05h9M359.18 630.4h9M370.8 630.35h9M385.1 630.3h9M398.46 630.25h9M410.28 630.2h9M422.57 630.15h9M436.26 630.1h9M449.78 630.05h9M461.95 630h9M475.59 629.95h9M355.69 638.4h9M369.43 638.4h9M382.96 638.4h9M395.36 638.4h9M408.86 638.4h9M420.73 638.4h9M435.16 638.4h9M446.74 638.4h9M461.35 638.4h9M474.49 638.4h9M357.38 646.4h9M369.55 646.45h9M382.08 646.5h9M395.2 646.55h9M409 646.6h9M421.49 646.65h9M435.36 646.7h9M446.69 646.75h9M460.47 646.8h9M474.23 646.85h9M362.7 655.4h9M375.58 655.5h9M387.68 655.6h9M400.78 655.7h9M414.04 655.8h9M428.29 655.9h9M441.19 656h9M452.95 656.1h9M467.35 656.2h9M478.56 656.3h9M352.7 664.4h9M366.43 664.55h9M378.19 664.7h9M392.39 664.85h9M404.81 665h9M416.6 665.15h9M430.17 665.3h9M443.4 665.45h9M455.99 665.6h9M469.98 665.75h9M359.86 674.4h9M374.08 674.51h9M386.1 674.62h9M398.64 674.73h9M412.62 674.84h9M424.69 674.96h9M438.6 675.07h9M452.08 675.18h9M464.69 675.29h9M346.42 684.4h9M358.57 684.46h9M372.53 684.51h9M384.69 684.57h9M398.79 684.62h9M410.76 684.68h9M424.66 684.73h9M437.21 684.79h9M450.25 684.84h9M344.83 695.4h9M356.83 695.51h9M369.84 695.62h9M384.38 695.73h9M396.16 695.84h9M410.18 695.96h9M423.25 696.07h9M435.46 696.18h9M447.8 696.29h9M353.69 708.4h9M368.26 708.6h9M379.73 708.8h9M393.49 709h9M406.57 709.2h9M418.74 709.4h9M432.44 709.6h9M444.83 709.8h9M458.57 710h9M471.51 710.2h9" stroke="#4f8a4a" stroke-width="0.800" fill="none"/><path d="M356.5 706.4L450.5 628.4M394.5 710.4L460.5 632.4M362.5 674.4L470.5 630.4M370.5 696.4L452.5 636.4M450.5 628.4L492.5 668.4M460.5 632.4L488.5 698.4M410.5 668.4L492.5 696.4M450.5 628.4L492.5 638.4M360.5 638.4L492.5 632.4M360.5 630.4L492.5 642.4M356.5 648.4L492.5 626.4M440.5 622.4L470.5 648.4M462.5 618.4L480.5 642.4" stroke="#5a9a52" stroke-width="0.700" stroke-opacity="0.900" fill="none"/><path d="M403.26 627.55L443.45 622.81M374.01 628.44L437.58 628.47M467.15 623.72L534.32 623.53M455.01 635.38L509.46 631.05M450.01 626.63L483.21 619.12M406.48 634.28L441.08 640.53M368.79 635.55L400.48 637.07M454.15 638.33L477.26 634.26M431.6 644.04L453.66 645.93M442.9 640.51L480.01 645.48M414.84 642.74L435.38 649.78M408.76 631.95L433.16 627.87M448.02 637.65L475.58 635.16M375.63 627.56L406.61 624.86M477.57 644.34L537.15 644.02M419.17 639.76L484.58 643.79M436.14 627.58L487.4 633.11M454.47 625.34L510.34 622.93M378.29 643.68L431.93 647.61M374.96 640.8L441.82 647.27M449.39 640.88L509.49 642.33M411.61 640.73L470.83 646.66M394.97 643.58L441.56 650.71M372.63 643.74L432.01 639.77M460.78 628.27L490.68 627.6M387.37 633.75L452.78 636.71M445.17 631.63L504.36 636.33M441.81 643.18L503.1 641.68M369.13 637.1L430.94 634.54M431.07 640.96L490.72 633.03M418.16 623.74L443.69 628.74M409.58 636.1L452.45 633.47M384.57 630.83L446.79 632.74M394.14 625.25L427.69 628.47M412.43 637.28L472.78 631.21M441.82 624.27L502.97 619.22M391.62 643.51L429.74 639.1M467.06 636.22L531.76 634.52M419.46 643.47L464.8 651.29M381.61 640.84L409.72 641.28M358.54 627.08L425.79 626.36M457.25 628.67L494.86 622.28M425.93 641.51L471.62 639.53M471.79 642.17L525.11 635.38M434.63 632.73L502.52 630.52M439.16 636.67L477.96 637.03M441.04 642.45L485.95 640.27M477.6 624.6L539.34 627.53M426.5 632.8L484.06 639.06M447.42 639.15L469.18 636.35M375.21 643.41L439.78 637.72M430.18 635.51L452.51 633.79M449.68 636.87L483.72 641.07M394.02 634.83L435.06 642.48M437.65 640.3L491.48 638.39M475.99 638.3L530.53 634.74M378.25 635.48L439.54 640.18M400.86 626.34L446.66 632.38M378.28 638.91L406.82 635.9M365.03 629.65L404.18 637.12M475.88 627.33L511.35 634.43M382.58 630.14L424.49 623.87M390.25 631.67L429.52 639.09M391.06 627.68L456.49 626.89M460.63 636.78L519.56 633.82M377.05 639.3L420.56 640.24M440.31 639.21L474.08 637.01M470.43 634.52L504.85 636.6M390.19 639.6L412.25 644.82M427.61 630.83L494.61 627.08M456.24 616.78L475.4 623.88M473.62 628.43L499.01 617.55M458.78 636.32L487.99 640.07M474.18 640.74L489.65 653.07M476.2 626.02L491.62 634.58M460.49 620.72L487.41 621.61M467.35 637.16L494.98 626.9M460.05 616.64L475.97 616.7M480.58 637.11L500.45 634.41M469.45 623.71L495.72 631.79M480.04 619.54L502.15 626.65M466.52 644.94L494.09 651.75M479.34 636.46L506.43 626.14M474.66 638.33L495.36 632.03M449.19 634.91L474.97 628.56M455.02 622.01L463.28 626.94M485.49 641.67L500.13 647.26M449.39 642.91L463.19 629.01M471.67 619.12L484.27 606.77M464.33 633.27L489.71 620.38M479.6 618.16L490.98 621.78M460.1 625.66L479.75 617.76M478.24 621.51L504.38 630.15M467.98 615.44L492.66 602.23M466.69 628.81L474.2 632.45M475.48 634.29L491.08 634.63M470.05 622.09L496.87 635.97M478.67 647.09L492.57 660.7M449.36 630.65L458.57 629.36M473.81 638.49L490.72 634.05M454.1 628.1L466.88 619.54M475.94 631.95L492.47 623.49M474.65 621.09L487.02 622.78M474.55 647.48L498.49 660.04M483.3 638.97L506.57 626.72M454.73 614.84L481.45 621.06M471.71 623.37L486.24 613.95M471.79 648.11L485.13 635.35M453.51 626.48L481.08 635M464.7 617.87L473.26 608.18" stroke="#a4dc96" stroke-width="0.800" stroke-opacity="0.550" fill="none"/><g fill="#22c0b4"><circle cx="359.58" cy="624.4" r="1"/><circle cx="374.17" cy="624.25" r="1"/><circle cx="386.09" cy="624.1" r="1"/><circle cx="398.97" cy="623.95" r="1"/><circle cx="412.66" cy="623.8" r="1"/><circle cx="425.14" cy="623.65" r="1"/><circle cx="438.62" cy="623.5" r="1"/><circle cx="450.81" cy="623.35" r="1"/><circle cx="465.32" cy="623.2" r="1"/><circle cx="477.15" cy="623.05" r="1"/><circle cx="359.18" cy="630.4" r="1"/><circle cx="370.8" cy="630.35" r="1"/><circle cx="385.1" cy="630.3" r="1"/><circle cx="398.46" cy="630.25" r="1"/><circle cx="410.28" cy="630.2" r="1"/><circle cx="422.57" cy="630.15" r="1"/><circle cx="436.26" cy="630.1" r="1"/><circle cx="449.78" cy="630.05" r="1"/><circle cx="461.95" cy="630" r="1"/><circle cx="475.59" cy="629.95" r="1"/><circle cx="355.69" cy="638.4" r="1"/><circle cx="369.43" cy="638.4" r="1"/><circle cx="382.96" cy="638.4" r="1"/><circle cx="395.36" cy="638.4" r="1"/><circle cx="408.86" cy="638.4" r="1"/><circle cx="420.73" cy="638.4" r="1"/><circle cx="435.16" cy="638.4" r="1"/><circle cx="446.74" cy="638.4" r="1"/><circle cx="461.35" cy="638.4" r="1"/><circle cx="474.49" cy="638.4" r="1"/><circle cx="357.38" cy="646.4" r="1"/><circle cx="369.55" cy="646.45" r="1"/><circle cx="382.08" cy="646.5" r="1"/><circle cx="395.2" cy="646.55" r="1"/><circle cx="409" cy="646.6" r="1"/><circle cx="421.49" cy="646.65" r="1"/><circle cx="435.36" cy="646.7" r="1"/><circle cx="446.69" cy="646.75" r="1"/><circle cx="460.47" cy="646.8" r="1"/><circle cx="474.23" cy="646.85" r="1"/><circle cx="362.7" cy="655.4" r="1"/><circle cx="375.58" cy="655.5" r="1"/><circle cx="387.68" cy="655.6" r="1"/><circle cx="400.78" cy="655.7" r="1"/><circle cx="414.04" cy="655.8" r="1"/><circle cx="428.29" cy="655.9" r="1"/><circle cx="441.19" cy="656" r="1"/><circle cx="452.95" cy="656.1" r="1"/><circle cx="467.35" cy="656.2" r="1"/><circle cx="478.56" cy="656.3" r="1"/><circle cx="352.7" cy="664.4" r="1"/><circle cx="366.43" cy="664.55" r="1"/><circle cx="378.19" cy="664.7" r="1"/><circle cx="392.39" cy="664.85" r="1"/><circle cx="404.81" cy="665" r="1"/><circle cx="416.6" cy="665.15" r="1"/><circle cx="430.17" cy="665.3" r="1"/><circle cx="443.4" cy="665.45" r="1"/><circle cx="455.99" cy="665.6" r="1"/><circle cx="469.98" cy="665.75" r="1"/><circle cx="359.86" cy="674.4" r="1"/><circle cx="374.08" cy="674.51" r="1"/><circle cx="386.1" cy="674.62" r="1"/><circle cx="398.64" cy="674.73" r="1"/><circle cx="412.62" cy="674.84" r="1"/><circle cx="424.69" cy="674.96" r="1"/><circle cx="438.6" cy="675.07" r="1"/><circle cx="452.08" cy="675.18" r="1"/><circle cx="464.69" cy="675.29" r="1"/><circle cx="346.42" cy="684.4" r="1"/><circle cx="358.57" cy="684.46" r="1"/><circle cx="372.53" cy="684.51" r="1"/><circle cx="384.69" cy="684.57" r="1"/><circle cx="398.79" cy="684.62" r="1"/><circle cx="410.76" cy="684.68" r="1"/><circle cx="424.66" cy="684.73" r="1"/><circle cx="437.21" cy="684.79" r="1"/><circle cx="450.25" cy="684.84" r="1"/><circle cx="344.83" cy="695.4" r="1"/><circle cx="356.83" cy="695.51" r="1"/><circle cx="369.84" cy="695.62" r="1"/><circle cx="384.38" cy="695.73" r="1"/><circle cx="396.16" cy="695.84" r="1"/><circle cx="410.18" cy="695.96" r="1"/><circle cx="423.25" cy="696.07" r="1"/><circle cx="435.46" cy="696.18" r="1"/><circle cx="447.8" cy="696.29" r="1"/><circle cx="353.69" cy="708.4" r="1"/><circle cx="368.26" cy="708.6" r="1"/><circle cx="379.73" cy="708.8" r="1"/><circle cx="393.49" cy="709" r="1"/><circle cx="406.57" cy="709.2" r="1"/><circle cx="418.74" cy="709.4" r="1"/><circle cx="432.44" cy="709.6" r="1"/><circle cx="444.83" cy="709.8" r="1"/><circle cx="458.57" cy="710" r="1"/><circle cx="471.51" cy="710.2" r="1"/></g><path d="M361.5 625.4l-2.500 9M374.5 625.4l-2.500 9M388.5 625.4l-2.500 9M402.5 625.4l-2.500 9M416.5 625.4l-2.500 9M428.5 625.4l-2.500 9M442.5 625.4l-2.500 9M450.5 614.4l5 14M462.5 614.4l5 14M474.5 614.4l5 14M486.5 614.4l5 14" stroke="#22c0b4" stroke-width="1.100" fill="none"/></g>
<clipPath id="t7"><rect x="516" y="608.4" width="181.500" height="181.400"/></clipPath>
<g clip-path="url(#t7)"><path d="M620.5 626.4L628.97 627.11M620.5 626.4L625.17 634.44M620.5 626.4L617.88 634.49M620.5 626.4L613.1 629.12M620.5 626.4L612.31 623.58M620.5 626.4L618.73 618.57M620.5 626.4L624.83 620.05M643 626.4L652.85 627.61M643 626.4L652.05 631.65M643 626.4L650.18 633.31M643 626.4L647.2 635.61M643 626.4L642.1 635.12M643 626.4L640.82 635.06M643 626.4L636.29 632.78M643 626.4L634.28 631.62M643 626.4L633.61 625.59M643 626.4L633.06 623.8M643 626.4L636.95 620.23M643 626.4L638.8 617.6M643 626.4L644.09 616.99M643 626.4L646.75 618.32M643 626.4L649.71 618.57M643 626.4L650.92 622.79M665.5 626.4L674.25 626.64M665.5 626.4L674.48 629.21M665.5 626.4L672.23 633.49M665.5 626.4L668.54 635.27M665.5 626.4L666.79 636.27M665.5 626.4L663.08 635.53M665.5 626.4L658.75 633.57M665.5 626.4L657 629.3M665.5 626.4L655.63 625.96M665.5 626.4L657.36 623.11M665.5 626.4L659.53 618.75M665.5 626.4L661.01 618.63M665.5 626.4L666.8 617.54M665.5 626.4L669.05 616.97M665.5 626.4L673.04 620.2M665.5 626.4L673.64 623.7M687 626.4L696.34 625.26M687 626.4L688.71 633.93M687 626.4L681.16 631.99M687 626.4L681.15 620.87M687 626.4L690.33 617.69M620.5 649.2L631.35 649.65M620.5 649.2L629.71 649.99M620.5 649.2L630.86 650.98M620.5 649.2L630.79 652.99M620.5 649.2L627.68 655.14M620.5 649.2L626.42 656.33M620.5 649.2L625.85 656.62M620.5 649.2L624.56 659.2M620.5 649.2L622.18 657.97M620.5 649.2L621.02 659.28M620.5 649.2L619.54 659.13M620.5 649.2L618.55 659.18M620.5 649.2L616.93 657.56M620.5 649.2L617.17 658.7M620.5 649.2L615.27 657.44M620.5 649.2L614.26 657.63M620.5 649.2L612.85 656.63M620.5 649.2L611.31 652.85M620.5 649.2L611.14 653.47M620.5 649.2L610.97 651.58M620.5 649.2L609.6 650.48M620.5 649.2L610.98 647.56M620.5 649.2L610.23 647.2M620.5 649.2L611.52 643.37M620.5 649.2L612.03 644.48M620.5 649.2L612.63 642.21M620.5 649.2L613.67 641.63M620.5 649.2L617.11 639.22M620.5 649.2L616.45 641.07M620.5 649.2L617.7 639.21M620.5 649.2L620.8 639.19M620.5 649.2L621.9 639.52M620.5 649.2L624 639.53M620.5 649.2L626.38 640.54M620.5 649.2L627.63 641.03M620.5 649.2L628.58 642.61M620.5 649.2L627.94 642M620.5 649.2L629.68 645.68M620.5 649.2L629.62 647.35M620.5 649.2L630.35 648.96M643 649.2L652.44 649.79M643 649.2L652.58 650.4M643 649.2L651.67 652.04M643 649.2L652.44 654.82M643 649.2L650.7 656.9M643 649.2L648.75 658.2M643 649.2L646.24 659.19M643 649.2L646.2 658.09M643 649.2L644.06 658.11M643 649.2L642.87 659.99M643 649.2L639.22 658.04M643 649.2L637.55 658.23M643 649.2L635.67 656.85M643 649.2L636.18 655.3M643 649.2L634.4 653.43M643 649.2L633.83 652.36M643 649.2L632.21 651.09M643 649.2L633.01 650.22M643 649.2L633.21 646.91M643 649.2L634.42 644.5M643 649.2L634.92 642.69M643 649.2L637.19 642.18M643 649.2L636.62 642.12M643 649.2L640.01 640.76M643 649.2L639.43 639.4M643 649.2L643.51 639.92M643 649.2L643.76 638.86M643 649.2L646.44 639.29M643 649.2L647.84 641.09M643 649.2L647.88 641.66M643 649.2L650.27 643.3M643 649.2L651.87 642.78M643 649.2L652.63 645.94M643 649.2L653.08 647.8M665.5 649.2L673.68 649.68M665.5 649.2L668.84 656.21M665.5 649.2L659.56 655M665.5 649.2L658.69 645.29M665.5 649.2L668.39 640.26M687 649.2L696.03 649.71M687 649.2L695.05 652.89M687 649.2L694.63 654.18M687 649.2L692.17 657.62M687 649.2L688.89 658.98M687 649.2L686.45 659.55M687 649.2L682.34 658.23M687 649.2L680.21 656.76M687 649.2L677.72 653.47M687 649.2L677.2 648.31M687 649.2L678.82 646.83M687 649.2L678.52 643.34M687 649.2L681.25 641.24M687 649.2L685.55 639.49M687 649.2L687.69 640.44M687 649.2L691.1 639.57M687 649.2L694.28 642.64M687 649.2L695.47 646.32M620.5 671.7L628.96 670.59M620.5 671.7L626.01 678.51M620.5 671.7L619.22 680.84M620.5 671.7L613.89 677.48M620.5 671.7L611.53 670.92M620.5 671.7L613.48 665.23M620.5 671.7L619.45 662.76M620.5 671.7L627.46 665.88M643 671.7L653.02 671.34M643 671.7L651.3 674.88M643 671.7L649.37 678.43M643 671.7L645.56 681.14M643 671.7L640.81 681.7M643 671.7L637.96 680.14M643 671.7L634.57 674.76M643 671.7L633.72 673.02M643 671.7L634.1 668.62M643 671.7L638.03 664.58M643 671.7L639.85 662.78M643 671.7L644.13 662.81M643 671.7L648.32 664.77M643 671.7L650.72 666.66M665.5 671.7L676.39 671.6M665.5 671.7L674.34 673.73M665.5 671.7L675.4 675.15M665.5 671.7L674.08 678.18M665.5 671.7L671.51 680.59M665.5 671.7L672.02 680.44M665.5 671.7L668.35 680.69M665.5 671.7L667.67 682.22M665.5 671.7L665.33 680.8M665.5 671.7L662.88 682.24M665.5 671.7L660.38 680.82M665.5 671.7L659.88 679.82M665.5 671.7L658.24 677.6M665.5 671.7L656.47 675.2M665.5 671.7L655.08 675.19M665.5 671.7L656.2 671.75M665.5 671.7L655.22 671.05M665.5 671.7L657.32 668.01M665.5 671.7L656.97 665.62M665.5 671.7L659.28 664.63M665.5 671.7L660.4 662.87M665.5 671.7L663.05 662.8M665.5 671.7L665.35 660.79M665.5 671.7L667.39 661.14M665.5 671.7L668.43 661.28M665.5 671.7L669.4 663.15M665.5 671.7L672.97 663.88M665.5 671.7L672.34 665.28M665.5 671.7L673.85 666.49M665.5 671.7L674.36 668.79" stroke="#a8b8cc" stroke-width="0.450" stroke-opacity="0.750" fill="none"/><g fill="#2fc030"><circle cx="628.97" cy="627.11" r="1.15"/><circle cx="625.17" cy="634.44" r="1.15"/><circle cx="617.88" cy="634.49" r="1.15"/><circle cx="613.1" cy="629.12" r="1.15"/><circle cx="612.31" cy="623.58" r="1.15"/><circle cx="618.73" cy="618.57" r="1.15"/><circle cx="624.83" cy="620.05" r="1.15"/><circle cx="652.85" cy="627.61" r="1.15"/><circle cx="652.05" cy="631.65" r="1.15"/><circle cx="650.18" cy="633.31" r="1.15"/><circle cx="647.2" cy="635.61" r="1.15"/><circle cx="642.1" cy="635.12" r="1.15"/><circle cx="640.82" cy="635.06" r="1.15"/><circle cx="636.29" cy="632.78" r="1.15"/><circle cx="634.28" cy="631.62" r="1.15"/><circle cx="633.61" cy="625.59" r="1.15"/><circle cx="633.06" cy="623.8" r="1.15"/><circle cx="636.95" cy="620.23" r="1.15"/><circle cx="638.8" cy="617.6" r="1.15"/><circle cx="644.09" cy="616.99" r="1.15"/><circle cx="646.75" cy="618.32" r="1.15"/><circle cx="649.71" cy="618.57" r="1.15"/><circle cx="650.92" cy="622.79" r="1.15"/><circle cx="674.25" cy="626.64" r="1.15"/><circle cx="674.48" cy="629.21" r="1.15"/><circle cx="672.23" cy="633.49" r="1.15"/><circle cx="668.54" cy="635.27" r="1.15"/><circle cx="666.79" cy="636.27" r="1.15"/><circle cx="663.08" cy="635.53" r="1.15"/><circle cx="658.75" cy="633.57" r="1.15"/><circle cx="657" cy="629.3" r="1.15"/><circle cx="655.63" cy="625.96" r="1.15"/><circle cx="657.36" cy="623.11" r="1.15"/><circle cx="659.53" cy="618.75" r="1.15"/><circle cx="661.01" cy="618.63" r="1.15"/><circle cx="666.8" cy="617.54" r="1.15"/><circle cx="669.05" cy="616.97" r="1.15"/><circle cx="673.04" cy="620.2" r="1.15"/><circle cx="673.64" cy="623.7" r="1.15"/><circle cx="696.34" cy="625.26" r="1.15"/><circle cx="688.71" cy="633.93" r="1.15"/><circle cx="681.16" cy="631.99" r="1.15"/><circle cx="681.15" cy="620.87" r="1.15"/><circle cx="690.33" cy="617.69" r="1.15"/><circle cx="631.35" cy="649.65" r="1"/><circle cx="629.71" cy="649.99" r="1"/><circle cx="630.86" cy="650.98" r="1"/><circle cx="630.79" cy="652.99" r="1"/><circle cx="627.68" cy="655.14" r="1"/><circle cx="626.42" cy="656.33" r="1"/><circle cx="625.85" cy="656.62" r="1"/><circle cx="624.56" cy="659.2" r="1"/><circle cx="622.18" cy="657.97" r="1"/><circle cx="621.02" cy="659.28" r="1"/><circle cx="619.54" cy="659.13" r="1"/><circle cx="618.55" cy="659.18" r="1"/><circle cx="616.93" cy="657.56" r="1"/><circle cx="617.17" cy="658.7" r="1"/><circle cx="615.27" cy="657.44" r="1"/><circle cx="614.26" cy="657.63" r="1"/><circle cx="612.85" cy="656.63" r="1"/><circle cx="611.31" cy="652.85" r="1"/><circle cx="611.14" cy="653.47" r="1"/><circle cx="610.97" cy="651.58" r="1"/><circle cx="609.6" cy="650.48" r="1"/><circle cx="610.98" cy="647.56" r="1"/><circle cx="610.23" cy="647.2" r="1"/><circle cx="611.52" cy="643.37" r="1"/><circle cx="612.03" cy="644.48" r="1"/><circle cx="612.63" cy="642.21" r="1"/><circle cx="613.67" cy="641.63" r="1"/><circle cx="617.11" cy="639.22" r="1"/><circle cx="616.45" cy="641.07" r="1"/><circle cx="617.7" cy="639.21" r="1"/><circle cx="620.8" cy="639.19" r="1"/><circle cx="621.9" cy="639.52" r="1"/><circle cx="624" cy="639.53" r="1"/><circle cx="626.38" cy="640.54" r="1"/><circle cx="627.63" cy="641.03" r="1"/><circle cx="628.58" cy="642.61" r="1"/><circle cx="627.94" cy="642" r="1"/><circle cx="629.68" cy="645.68" r="1"/><circle cx="629.62" cy="647.35" r="1"/><circle cx="630.35" cy="648.96" r="1"/><circle cx="652.44" cy="649.79" r="1"/><circle cx="652.58" cy="650.4" r="1"/><circle cx="651.67" cy="652.04" r="1"/><circle cx="652.44" cy="654.82" r="1"/><circle cx="650.7" cy="656.9" r="1"/><circle cx="648.75" cy="658.2" r="1"/><circle cx="646.24" cy="659.19" r="1"/><circle cx="646.2" cy="658.09" r="1"/><circle cx="644.06" cy="658.11" r="1"/><circle cx="642.87" cy="659.99" r="1"/><circle cx="639.22" cy="658.04" r="1"/><circle cx="637.55" cy="658.23" r="1"/><circle cx="635.67" cy="656.85" r="1"/><circle cx="636.18" cy="655.3" r="1"/><circle cx="634.4" cy="653.43" r="1"/><circle cx="633.83" cy="652.36" r="1"/><circle cx="632.21" cy="651.09" r="1"/><circle cx="633.01" cy="650.22" r="1"/><circle cx="633.21" cy="646.91" r="1"/><circle cx="634.42" cy="644.5" r="1"/><circle cx="634.92" cy="642.69" r="1"/><circle cx="637.19" cy="642.18" r="1"/><circle cx="636.62" cy="642.12" r="1"/><circle cx="640.01" cy="640.76" r="1"/><circle cx="639.43" cy="639.4" r="1"/><circle cx="643.51" cy="639.92" r="1"/><circle cx="643.76" cy="638.86" r="1"/><circle cx="646.44" cy="639.29" r="1"/><circle cx="647.84" cy="641.09" r="1"/><circle cx="647.88" cy="641.66" r="1"/><circle cx="650.27" cy="643.3" r="1"/><circle cx="651.87" cy="642.78" r="1"/><circle cx="652.63" cy="645.94" r="1"/><circle cx="653.08" cy="647.8" r="1"/><circle cx="673.68" cy="649.68" r="1.15"/><circle cx="668.84" cy="656.21" r="1.15"/><circle cx="659.56" cy="655" r="1.15"/><circle cx="658.69" cy="645.29" r="1.15"/><circle cx="668.39" cy="640.26" r="1.15"/><circle cx="696.03" cy="649.71" r="1.15"/><circle cx="695.05" cy="652.89" r="1.15"/><circle cx="694.63" cy="654.18" r="1.15"/><circle cx="692.17" cy="657.62" r="1.15"/><circle cx="688.89" cy="658.98" r="1.15"/><circle cx="686.45" cy="659.55" r="1.15"/><circle cx="682.34" cy="658.23" r="1.15"/><circle cx="680.21" cy="656.76" r="1.15"/><circle cx="677.72" cy="653.47" r="1.15"/><circle cx="677.2" cy="648.31" r="1.15"/><circle cx="678.82" cy="646.83" r="1.15"/><circle cx="678.52" cy="643.34" r="1.15"/><circle cx="681.25" cy="641.24" r="1.15"/><circle cx="685.55" cy="639.49" r="1.15"/><circle cx="687.69" cy="640.44" r="1.15"/><circle cx="691.1" cy="639.57" r="1.15"/><circle cx="694.28" cy="642.64" r="1.15"/><circle cx="695.47" cy="646.32" r="1.15"/><circle cx="628.96" cy="670.59" r="1.15"/><circle cx="626.01" cy="678.51" r="1.15"/><circle cx="619.22" cy="680.84" r="1.15"/><circle cx="613.89" cy="677.48" r="1.15"/><circle cx="611.53" cy="670.92" r="1.15"/><circle cx="613.48" cy="665.23" r="1.15"/><circle cx="619.45" cy="662.76" r="1.15"/><circle cx="627.46" cy="665.88" r="1.15"/><circle cx="653.02" cy="671.34" r="1.15"/><circle cx="651.3" cy="674.88" r="1.15"/><circle cx="649.37" cy="678.43" r="1.15"/><circle cx="645.56" cy="681.14" r="1.15"/><circle cx="640.81" cy="681.7" r="1.15"/><circle cx="637.96" cy="680.14" r="1.15"/><circle cx="634.57" cy="674.76" r="1.15"/><circle cx="633.72" cy="673.02" r="1.15"/><circle cx="634.1" cy="668.62" r="1.15"/><circle cx="638.03" cy="664.58" r="1.15"/><circle cx="639.85" cy="662.78" r="1.15"/><circle cx="644.13" cy="662.81" r="1.15"/><circle cx="648.32" cy="664.77" r="1.15"/><circle cx="650.72" cy="666.66" r="1.15"/><circle cx="676.39" cy="671.6" r="1"/><circle cx="674.34" cy="673.73" r="1"/><circle cx="675.4" cy="675.15" r="1"/><circle cx="674.08" cy="678.18" r="1"/><circle cx="671.51" cy="680.59" r="1"/><circle cx="672.02" cy="680.44" r="1"/><circle cx="668.35" cy="680.69" r="1"/><circle cx="667.67" cy="682.22" r="1"/><circle cx="665.33" cy="680.8" r="1"/><circle cx="662.88" cy="682.24" r="1"/><circle cx="660.38" cy="680.82" r="1"/><circle cx="659.88" cy="679.82" r="1"/><circle cx="658.24" cy="677.6" r="1"/><circle cx="656.47" cy="675.2" r="1"/><circle cx="655.08" cy="675.19" r="1"/><circle cx="656.2" cy="671.75" r="1"/><circle cx="655.22" cy="671.05" r="1"/><circle cx="657.32" cy="668.01" r="1"/><circle cx="656.97" cy="665.62" r="1"/><circle cx="659.28" cy="664.63" r="1"/><circle cx="660.4" cy="662.87" r="1"/><circle cx="663.05" cy="662.8" r="1"/><circle cx="665.35" cy="660.79" r="1"/><circle cx="667.39" cy="661.14" r="1"/><circle cx="668.43" cy="661.28" r="1"/><circle cx="669.4" cy="663.15" r="1"/><circle cx="672.97" cy="663.88" r="1"/><circle cx="672.34" cy="665.28" r="1"/><circle cx="673.85" cy="666.49" r="1"/><circle cx="674.36" cy="668.79" r="1"/></g></g>
<clipPath id="t8"><rect x="721.5" y="608.4" width="181.500" height="181.400"/></clipPath>
<g clip-path="url(#t8)"><rect x="721.5" y="666.8" width="181.500" height="82.600" fill="#343434"/><path d="M731.5 678.4l40 30l50 -10l60 40M781.5 748.4l30 -50l40 -20" stroke="#3e3e3e" stroke-width="0.800" fill="none"/><path d="M806.5 638.7L745.46 710.57M806.5 638.7L753.08 703.68M806.5 638.7L742.66 688.88M806.5 638.7L753.44 697.26M806.5 638.7L734.58 707.84M806.5 638.7L753.43 707.1M806.5 638.7L755.17 712.01M806.5 638.7L724.16 720.09M806.5 638.7L723.58 726.38M806.5 638.7L733.76 697M806.5 638.7L753.95 700.63M806.5 638.7L731.78 701.44M806.5 638.7L742.25 689.27M806.5 638.7L730.46 694.56M806.5 638.7L748.62 688.41M806.5 638.7L739.8 698.2M806.5 638.7L884.21 689.12M806.5 638.7L897.09 670.46M806.5 638.7L873.52 669.7M806.5 638.7L909.51 670.96M806.5 638.7L868.35 687.38M806.5 638.7L890.57 703.41M806.5 638.7L864.35 674.71M806.5 638.7L869.88 690.17M806.5 638.7L884.12 682.39M806.5 638.7L905.92 693.52M806.5 638.7L904.51 706.51M806.5 638.7L874.95 705.85M806.5 638.7L881.89 666.67M806.5 638.7L907.24 668.98M826.9 638.7L716.2 699.41M826.9 638.7L727.06 725.14M826.9 638.7L750.32 704.36M826.9 638.7L736.68 720.65M826.9 638.7L747.78 713.23M826.9 638.7L736.01 692.83M826.9 638.7L725.25 713.41M826.9 638.7L738.95 718.84M826.9 638.7L751.45 724.97M826.9 638.7L723.21 691.29M826.9 638.7L751.4 710.07M826.9 638.7L722.76 714.7M826.9 638.7L725.73 697.39M826.9 638.7L730.15 708.31M826.9 638.7L742.6 691.19M826.9 638.7L745.15 712.12M826.9 638.7L885.08 693.97M826.9 638.7L901.48 664.82M826.9 638.7L885.27 694.23M826.9 638.7L896.96 692.89M826.9 638.7L870.51 706.57M826.9 638.7L900.78 674.65M826.9 638.7L883.03 706.55M826.9 638.7L871.86 682.4M826.9 638.7L909.58 704M826.9 638.7L873.12 696.75M826.9 638.7L879.48 693.59M826.9 638.7L899.84 670.01M826.9 638.7L872.63 673.86M826.9 638.7L874.8 665.97" stroke="#1f6cae" stroke-width="0.700" stroke-opacity="0.750" fill="none"/><path d="M805.2 639.9l1.300 -3l1.300 3zM825.6 639.9l1.300 -3l1.300 3z" fill="#f02020"/><ellipse cx="876.5" cy="694.9" rx="7.200" ry="4" fill="#2fb030"/><path d="M876.5 697.4l-4 14h8zM741 728.4l-3 12h6z" fill="#c8d4e4" opacity="0.700"/><ellipse cx="746.5" cy="702.9" rx="7.500" ry="4.200" fill="#8a9a80" opacity="0.850"/><ellipse cx="741.5" cy="715.4" rx="7.500" ry="4.200" fill="#8a9078" opacity="0.850"/><ellipse cx="738" cy="725.4" rx="7.500" ry="4.200" fill="#7a8a88" opacity="0.850"/><circle cx="737.5" cy="726.4" r="2.600" fill="none" stroke="#19c6f0" stroke-width="1"/><g fill="#2fb030"><rect x="810" y="659.4" width="2.200" height="5" rx="1"/><rect x="816" y="659.4" width="2.200" height="5" rx="1"/><circle cx="899.5" cy="687.4" r="3"/><circle cx="864.5" cy="664.4" r="2"/><circle cx="869.5" cy="664.4" r="2"/><ellipse cx="747.5" cy="701.9" rx="4" ry="2.200"/></g><g fill="#f5cf10"><path d="M814.5 672.4l-2 3h4z"/><path d="M867.5 676.4l-2 3h4z"/><path d="M876.5 710.4l-2 3h4z"/><path d="M899.5 702.4l-2 3h4z"/><path d="M748.5 721.4l-2 3h4z"/><path d="M741.5 734.4l-2 3h4z"/><path d="M740.5 740.9l-2 3h4z"/></g></g>
<path d="M1118.800 38.800L1125.600 45.200L1132.400 38.800" fill="none" stroke="#dcdcdc" stroke-width="1.700"/>
<clipPath id="pc"><rect x="1485.200" y="15.200" width="345.800" height="52" rx="26"/></clipPath>
<g clip-path="url(#pc)"><rect x="1485" y="15" width="347" height="53" fill="#2c2c2c"/><rect x="1485" y="15" width="67.800" height="53" fill="#d9d9d9"/><rect x="1693.400" y="15" width="68.400" height="53" fill="#d9d9d9"/><rect x="1622.400" y="15" width="0.800" height="53" fill="#363636"/></g>
<circle cx="1518.600" cy="41.200" r="12.400" fill="#000"/>
<rect x="1577.200" y="31.4" width="7.800" height="7.400" rx="1.600" fill="none" stroke="#c8c8c8" stroke-width="1.600"/>
<rect x="1577.200" y="43.6" width="7.800" height="7.400" rx="1.600" fill="none" stroke="#c8c8c8" stroke-width="1.600"/>
<path d="M1589.400 32.800H1600M1589.400 37.400H1596.400M1589.400 45H1600M1589.400 49.600H1596.400" stroke="#c8c8c8" stroke-width="1.600" stroke-linecap="round"/>
<path d="M1646.600 32.300a1.800 1.800 0 0 1 1.800-1.800H1659.300a2.400 2.400 0 0 1 1.700 .700L1669 39.700a2.400 2.400 0 0 1 0 3.400L1660 52.100a2.400 2.400 0 0 1-3.400 0L1647.300 42.300a2.400 2.400 0 0 1-.700-1.700Z" fill="none" stroke="#c8c8c8" stroke-width="1.700" stroke-linejoin="round"/>
<circle cx="1652.300" cy="36" r="1.700" fill="#c8c8c8"/>
<path d="M1722.300 46.500L1732.500 36.700" stroke="#000" stroke-width="1.800"/>
<circle cx="1734.800" cy="34.500" r="2.900" fill="none" stroke="#000" stroke-width="1.700"/>
<circle cx="1720" cy="48.700" r="2.900" fill="none" stroke="#000" stroke-width="1.700"/>
<path d="M1792.400 34H1807.400M1796.400 41.200H1807.400M1800.200 48.600H1807.400M1788 34H1789M1792 41.200H1793M1795.800 48.600H1796.800" stroke="#c8c8c8" stroke-width="1.600" stroke-linecap="round"/>
<circle cx="1873.100" cy="42.600" r="25.400" fill="#1a1a1a"/>
<circle cx="1873.100" cy="41" r="25" fill="#272727" stroke="#8c8c8c" stroke-width="1.700"/>
<path d="M1873.100 32.800V43.600M1869 40.400L1873.100 44.500L1877.200 40.400M1864.200 44.600V48.800H1882V44.600" fill="none" stroke="#d0d0d0" stroke-width="1.700"/>
<rect x="1638.500" y="100.400" width="217.900" height="40.500" rx="20.250" fill="none" stroke="#2ca02c" stroke-width="1.800"/>
<circle cx="1674.700" cy="120.600" r="11.300" fill="#2ca02c"/>
<g transform="translate(1864 100)" fill="#2ca02c"><path d="M28.31 21.68L34.2 9.79A2.45 2.45 0 0 0 30.17 7.07L21.33 16.97A4.25 4.25 0 1 0 28.31 21.68Z"/><path d="M9 24.700C10.100 26.500 11.300 27.100 12.300 26.400C13 23.700 15.300 21.900 17.900 21.900C20.900 21.900 23.100 24.300 23.100 27.400C23.100 30.700 20.600 33.300 17 33.300C12.400 33.300 9.200 30 9 24.700Z"/></g>
<rect x="1636" y="158.400" width="220.400" height="40.700" rx="20.350" fill="none" stroke="#ffd80a" stroke-width="1.900"/>
<circle cx="1672.500" cy="178.600" r="11.300" fill="#ffd80a"/>
<g transform="translate(1864 158.2)" fill="#ffd80a"><path d="M28.31 21.68L34.2 9.79A2.45 2.45 0 0 0 30.17 7.07L21.33 16.97A4.25 4.25 0 1 0 28.31 21.68Z"/><path d="M9 24.700C10.100 26.500 11.300 27.100 12.300 26.400C13 23.700 15.300 21.900 17.900 21.900C20.900 21.900 23.100 24.300 23.100 27.400C23.100 30.700 20.600 33.300 17 33.300C12.400 33.300 9.200 30 9 24.700Z"/></g>
<rect x="1598.900" y="262.200" width="257.500" height="40.300" rx="20.150" fill="none" stroke="#b3cbee" stroke-width="1.800"/>
<rect x="1624" y="280.500" width="22.400" height="3.200" rx="1.600" fill="#b3cbee"/>
<g transform="translate(1864 262.1)" fill="#b3cbee"><path d="M28.31 21.68L34.2 9.79A2.45 2.45 0 0 0 30.17 7.07L21.33 16.97A4.25 4.25 0 1 0 28.31 21.68Z"/><path d="M9 24.700C10.100 26.500 11.300 27.100 12.300 26.400C13 23.700 15.300 21.900 17.900 21.900C20.900 21.900 23.100 24.300 23.100 27.400C23.100 30.700 20.600 33.300 17 33.300C12.400 33.300 9.200 30 9 24.700Z"/></g>
<path transform="translate(1838.4 724.75) rotate(0)" d="M0 -15.150L13 -.450H6.400V15.150H-6.400V-.450H-13Z" fill="#b9b9b9"/>
<path transform="translate(1838.4 809.95) rotate(180)" d="M0 -15.150L13 -.450H6.400V15.150H-6.400V-.450H-13Z" fill="#b9b9b9"/>
<path transform="translate(1799.15 763.6) rotate(-90)" d="M0 -15.150L13 -.450H6.400V15.150H-6.400V-.450H-13Z" fill="#b9b9b9"/>
<path transform="translate(1877.65 763.6) rotate(90)" d="M0 -15.150L13 -.450H6.400V15.150H-6.400V-.450H-13Z" fill="#b9b9b9"/>
<circle cx="1838.400" cy="763.400" r="11.200" fill="none" stroke="#c8c8c8" stroke-width="1.500"/>
<g transform="translate(1799.8 878) scale(1 1)" fill="#b9b9b9"><rect x="-2.800" y="-19.400" width="5.600" height="18.600" rx="2.800"/><path d="M-9 5.740A16.800 6.800 0 1 1 4.600 6.540" fill="none" stroke="#b9b9b9" stroke-width="4.400"/><path d="M-5.800 6.200L3.800 -.600V13.200Z"/><ellipse cx="0" cy="16.800" rx="3.200" ry="3.700"/></g>
<g transform="translate(1875.5 878) scale(-1 1)" fill="#b9b9b9"><rect x="-2.800" y="-19.400" width="5.600" height="18.600" rx="2.800"/><path d="M-9 5.740A16.800 6.800 0 1 1 4.600 6.540" fill="none" stroke="#b9b9b9" stroke-width="4.400"/><path d="M-5.800 6.200L3.800 -.600V13.200Z"/><ellipse cx="0" cy="16.800" rx="3.200" ry="3.700"/></g>
<path d="M1795.400 944H1804.100L1810.100 957.500H1821.700L1799.800 965.900L1777.700 957.500H1787.300Z" fill="#b9b9b9"/>
<path d="M1879.200 944.300L1894.400 949.300L1885.400 949.800L1892 965.100H1865.800L1872.800 949.800L1864 949.300Z" fill="#b9b9b9"/>
<path d="M1199.200 614.400H1209.200L1214.600 619.800V635.300a1.400 1.400 0 0 1-1.400 1.400H1199.200a1.400 1.400 0 0 1-1.400-1.400V615.800a1.400 1.400 0 0 1 1.400-1.400Z" fill="#dcdcdc"/>
<path d="M1209.200 614.400V619.800H1214.600Z" fill="#f4f4f4" stroke="#bdbdbd" stroke-width="0.500"/>
<rect x="1220.400" y="612.600" width="236.200" height="24.300" rx="12.150" fill="#0058d0"/>
<path d="M1227.300 631.200V650.600L1231.900 646.400L1233.600 650L1236.400 648.700L1234.800 645.200L1241.600 645.200Z" fill="#000" stroke="#fff" stroke-width="1.700" stroke-linejoin="round"/>
<defs><linearGradient id="pg" x1="0" y1="0" x2="0" y2="1"><stop offset="0" stop-color="#0fc85c"/><stop offset="1" stop-color="#0a9a3e"/></linearGradient></defs>
<circle cx="1242.400" cy="666" r="14.300" fill="url(#pg)"/>
<path d="M1234.400 666H1250.400M1242.400 658V674" stroke="#fff" stroke-width="2.800" stroke-linecap="round"/>
<path d="M1140.7 172.6Q1114.02 130.68 1102.7 82.3M1140.7 172.6Q1124.61 126.98 1124.5 78.6M1140.7 172.6Q1130.74 127.63 1136.2 81.9M1140.7 172.6Q1126.53 135.86 1125.3 96.5M1140.7 172.6Q1104.37 144.72 1079.3 106.4M1140.7 172.6Q1092.88 154.9 1053.6 122.4M1140.7 172.6Q1098.41 157.15 1063.6 128.6M1253.2 173.2Q1225.13 129.46 1213.1 78.9M1253.2 173.2Q1233.49 124.44 1231 71.9M1253.2 173.2Q1240.31 119.47 1245.9 64.5M1253.2 173.2Q1246.35 121.12 1257.1 69.7M1253.2 173.2Q1253.63 121.89 1271 73.6M1253.2 173.2Q1259.04 127.35 1279.7 86M1253.2 173.2Q1267.7 138.07 1293 109.7M1253.2 173.2Q1268.95 145.42 1293 124.4M1253.2 173.2Q1224.4 153.61 1203.7 125.6M1253.2 173.2Q1227.42 146.56 1211.9 112.9M1253.2 173.2Q1225.37 141.41 1209.6 102.2M1365.2 173.8Q1355.24 119.47 1363.8 64.9M1365.2 173.8Q1364.92 118.6 1382.9 66.4M1365.2 173.8Q1353.64 129.1 1357.5 83.1M1365.2 173.8Q1370.79 125.26 1392.1 81.3M1365.2 173.8Q1378.5 128.27 1406.1 89.7M1365.2 173.8Q1386.38 128.63 1421.3 93M1365.2 173.8Q1392.68 134.2 1431.7 105.9M1365.2 173.8Q1395.13 143.14 1433.5 124.1M1365.2 173.8Q1396.8 158.45 1431.7 154.4M1365.2 173.8Q1395.15 177.2 1422.3 190.3M1365.2 173.8Q1385.86 181.55 1402.8 195.7M1365.2 173.8Q1350.92 152.15 1344.6 127M1365.2 173.8Q1353.37 141.45 1352.9 107M1476.7 174.3Q1483.83 129.72 1505.3 90M1476.7 174.3Q1495.15 139.06 1524.2 111.9M1476.7 174.3Q1512.87 152.82 1554.1 144.5M1476.7 174.3Q1503.5 161.56 1533 158.4M1140.3 286.3Q1120.99 248.07 1115.4 205.6M1140.3 286.3Q1105.95 249.75 1085.6 203.9M1140.3 286.3Q1099.34 253.55 1071.5 209.1M1140.3 286.3Q1114.71 252.27 1101.8 211.7M1140.3 286.3Q1130.83 252.98 1132.9 218.4M1140.3 286.3Q1123.45 257.06 1117.2 223.9M1140.3 286.3Q1134.09 259.47 1137.1 232.1M1140.3 286.3Q1093.97 261.92 1058.3 223.6M1140.3 286.3Q1096.05 270.52 1059.5 241M1140.3 286.3Q1088.54 275.09 1043.4 247.4M1140.3 286.3Q1094.56 275.35 1055 249.9M1140.3 286.3Q1084.48 280.56 1033.7 256.7M1140.3 286.3Q1084.32 288.1 1030.9 271.3M1140.3 286.3Q1151.82 276.27 1166 270.6M1140.3 286.3Q1090.06 297 1039.1 290.5M1140.3 286.3Q1090.11 308.52 1035.4 312.9M1140.3 286.3Q1095.04 312.67 1043.6 322.6M1140.3 286.3Q1103.93 311.42 1061.3 323.1M1140.3 286.3Q1092.11 319.65 1035.6 335.2M1140.3 286.3Q1107.41 316.17 1066.5 333.5M1140.3 286.3Q1113.5 325.63 1075.2 353.9M1140.3 286.3Q1122.62 321.51 1094.3 348.9M1140.3 286.3Q1139.02 314.81 1128.4 341.3M1140.3 286.3Q1147.63 316.38 1144.6 347.2M1140.3 286.3Q1138.74 322.22 1125.4 355.6M1140.3 286.3Q1127.39 327.75 1101.5 362.6M1140.3 286.3Q1134.14 330.56 1113.7 370.3M1252.3 286.7Q1234.01 249.01 1229.2 207.4M1252.3 286.7Q1239.77 245.98 1241.4 203.4M1252.3 286.7Q1247.27 248.05 1255.3 209.9M1252.3 286.7Q1225.97 257.43 1210.8 221.1M1252.3 286.7Q1256.34 252.68 1271.4 221.9M1252.3 286.7Q1266.75 252.19 1291.8 224.4M1252.3 286.7Q1275.39 251.86 1308.7 226.6M1252.3 286.7Q1278.39 258.91 1312.2 241.3M1252.3 286.7Q1285.55 263.81 1324.5 253.2M1252.3 286.7Q1225.25 269.23 1205.5 243.8M1252.3 286.7Q1228.54 278.6 1208.8 263.1M1252.3 286.7Q1287.87 277.77 1324.4 281.1M1252.3 286.7Q1288.7 293.22 1320.9 311.4M1252.3 286.7Q1289.95 302.06 1320.4 329M1252.3 286.7Q1285.87 308.05 1310.5 339.3M1252.3 286.7Q1277.4 314.48 1291.9 349M1252.3 286.7Q1267.41 322 1270 360.3M1252.3 286.7Q1231.38 301.32 1206.8 308.2M1252.3 286.7Q1232.33 313.55 1204.6 332.3M1252.3 286.7Q1230.38 318.77 1199.1 341.8M1252.3 286.7Q1242.62 323.84 1221.2 355.7M1252.3 286.7Q1251 327.46 1236.3 365.5M1252.3 286.7Q1259.55 328.73 1252.5 370.8M1363.8 287.1Q1379.59 260.13 1403.4 239.9M1363.8 287.1Q1389.22 268.07 1419.5 258.5M1363.8 287.1Q1396.92 296.7 1425 316.7M1363.8 287.1Q1388.14 306.78 1404.6 333.4M1475 287.6Q1462.12 266.9 1456.8 243.1M1475 287.6Q1481.75 258.93 1497.6 234.1M1475 287.6Q1489.74 255.05 1514.4 229.2M1475 287.6Q1500.57 253.42 1536 229.6M1475 287.6Q1510.82 260.42 1553.6 246.6M1475 287.6Q1516.75 270.52 1561.8 268.2M1475 287.6Q1519.04 280.63 1562.9 288.6M1475 287.6Q1519.83 290.73 1561.1 308.5M1475 287.6Q1517.4 303.7 1552.1 332.9M1475 287.6Q1514.09 315.11 1541.9 354M1475 287.6Q1504.8 324.92 1520.6 370M1475 287.6Q1499.33 322.41 1510.8 363.3M1475 287.6Q1495.98 315.36 1506.6 348.5M1475 287.6Q1482.96 315.67 1481.2 344.8M1139.6 399.4Q1097.96 421.04 1051.5 427.7M1139.6 399.4Q1110.13 424.88 1073.9 439.2M1139.6 399.4Q1101.57 431.69 1055 449.6M1139.6 399.4Q1113.12 438.83 1075.1 467.3M1139.6 399.4Q1124.17 441.17 1095.8 475.5M1139.6 399.4Q1142.94 437.83 1133.4 475.2M1139.6 399.4Q1146.17 443.19 1137.9 486.7M1139.6 399.4Q1134.56 448.1 1113.7 492.4M1139.6 399.4Q1140.83 448.11 1125.9 494.5M1251.3 399.4Q1232.16 424.52 1205.8 441.9M1251.3 399.4Q1234.13 430.36 1207.7 453.9M1251.3 399.4Q1237.85 439.19 1212 472.3M1251.3 399.4Q1238.2 444.28 1211 482.3M1251.3 399.4Q1277.12 416 1296 440.2M1251.3 399.4Q1274.6 422.96 1288.8 452.9M1251.3 399.4Q1269.46 434.18 1275.1 473M1251.3 399.4Q1268.07 443.88 1269.2 491.4M1251.3 399.4Q1244.22 452.77 1219.9 500.8M1251.3 399.4Q1253.28 452.51 1237.6 503.3M1251.3 399.4Q1258.52 450.95 1248.3 502M1251.3 399.4Q1266.19 450.06 1263.5 502.8M1362.5 399.6Q1349.43 394.16 1338.9 384.7M1362.5 399.6Q1381.35 384.87 1404 377.2M1362.5 399.6Q1390.05 384.01 1421.2 378.4M1362.5 399.6Q1397.43 394.43 1432.1 401.1M1362.5 399.6Q1404.47 404.09 1442.6 422.2M1362.5 399.6Q1410.09 410.8 1451.3 437.1M1362.5 399.6Q1409.35 416.43 1448 447.8M1362.5 399.6Q1410.26 424.51 1447.1 463.8M1362.5 399.6Q1408.62 430.03 1442.1 474M1362.5 399.6Q1402.96 434.55 1429.6 480.9M1362.5 399.6Q1395.94 439.86 1414.2 488.9M1362.5 399.6Q1388.52 440.71 1399.5 488.1M1362.5 399.6Q1383.69 446.77 1388.1 498.3M1362.5 399.6Q1379.85 450.51 1379.4 504.3M1362.5 399.6Q1372.22 455.26 1363 511M1362.5 399.6Q1363.54 451.12 1347.5 500.1M1362.5 399.6Q1360.1 440.55 1344.3 478.4M1362.5 399.6Q1366.66 434.08 1359.2 468M1362.5 399.6Q1363.85 428.75 1355.5 456.7" fill="none" stroke="#b4c6e2" stroke-opacity="0.860" stroke-width="1"/>
<g fill="#2ca02c"><circle cx="1102.7" cy="82.3" r="4.5"/><circle cx="1124.5" cy="78.6" r="4.5"/><circle cx="1136.2" cy="81.9" r="2.8"/><circle cx="1125.3" cy="96.5" r="1"/><circle cx="1079.3" cy="106.4" r="4.5"/><circle cx="1053.6" cy="122.4" r="1.2"/><circle cx="1063.6" cy="128.6" r="1"/><circle cx="1213.1" cy="78.9" r="6.2"/><circle cx="1231" cy="71.9" r="6.2"/><circle cx="1245.9" cy="64.5" r="6.2"/><circle cx="1257.1" cy="69.7" r="6.2"/><circle cx="1271" cy="73.6" r="6.2"/><circle cx="1279.7" cy="86" r="6.2"/><circle cx="1293" cy="109.7" r="6.2"/><circle cx="1293" cy="124.4" r="6.2"/><circle cx="1203.7" cy="125.6" r="6.2"/><circle cx="1211.9" cy="112.9" r="4.5"/><circle cx="1209.6" cy="102.2" r="1"/><circle cx="1363.8" cy="64.9" r="6"/><circle cx="1382.9" cy="66.4" r="6"/><circle cx="1357.5" cy="83.1" r="6.2"/><circle cx="1392.1" cy="81.3" r="6.2"/><circle cx="1406.1" cy="89.7" r="4.5"/><circle cx="1421.3" cy="93" r="4.5"/><circle cx="1431.7" cy="105.9" r="4.5"/><circle cx="1433.5" cy="124.1" r="4.5"/><circle cx="1431.7" cy="154.4" r="4.5"/><circle cx="1422.3" cy="190.3" r="4.5"/><circle cx="1402.8" cy="195.7" r="2.8"/><circle cx="1344.6" cy="127" r="2.8"/><circle cx="1352.9" cy="107" r="1"/><circle cx="1505.3" cy="90" r="6.2"/><circle cx="1524.2" cy="111.9" r="4.5"/><circle cx="1554.1" cy="144.5" r="2.8"/><circle cx="1533" cy="158.4" r="1"/><circle cx="1115.4" cy="205.6" r="7.7"/><circle cx="1085.6" cy="203.9" r="2.8"/><circle cx="1071.5" cy="209.1" r="4.5"/><circle cx="1101.8" cy="211.7" r="2.8"/><circle cx="1132.9" cy="218.4" r="6.2"/><circle cx="1117.2" cy="223.9" r="7.7"/><circle cx="1137.1" cy="232.1" r="6.2"/><circle cx="1058.3" cy="223.6" r="4.5"/><circle cx="1059.5" cy="241" r="4.5"/><circle cx="1043.4" cy="247.4" r="6.2"/><circle cx="1055" cy="249.9" r="4.5"/><circle cx="1033.7" cy="256.7" r="6.2"/><circle cx="1030.9" cy="271.3" r="7.7"/><circle cx="1166" cy="270.6" r="6.2"/><circle cx="1039.1" cy="290.5" r="1"/><circle cx="1035.4" cy="312.9" r="2.8"/><circle cx="1043.6" cy="322.6" r="4.5"/><circle cx="1061.3" cy="323.1" r="4.5"/><circle cx="1035.6" cy="335.2" r="4.5"/><circle cx="1066.5" cy="333.5" r="4.5"/><circle cx="1075.2" cy="353.9" r="4.5"/><circle cx="1094.3" cy="348.9" r="6.2"/><circle cx="1128.4" cy="341.3" r="6.2"/><circle cx="1144.6" cy="347.2" r="6.2"/><circle cx="1125.4" cy="355.6" r="6.2"/><circle cx="1101.5" cy="362.6" r="6.2"/><circle cx="1113.7" cy="370.3" r="6.2"/><circle cx="1229.2" cy="207.4" r="6.2"/><circle cx="1241.4" cy="203.4" r="6.2"/><circle cx="1255.3" cy="209.9" r="6.2"/><circle cx="1210.8" cy="221.1" r="6.2"/><circle cx="1271.4" cy="221.9" r="6.2"/><circle cx="1291.8" cy="224.4" r="6.2"/><circle cx="1308.7" cy="226.6" r="6.2"/><circle cx="1312.2" cy="241.3" r="6.2"/><circle cx="1324.5" cy="253.2" r="6.2"/><circle cx="1205.5" cy="243.8" r="6.2"/><circle cx="1208.8" cy="263.1" r="7.7"/><circle cx="1324.4" cy="281.1" r="6.2"/><circle cx="1320.9" cy="311.4" r="4.5"/><circle cx="1320.4" cy="329" r="4.5"/><circle cx="1310.5" cy="339.3" r="4.5"/><circle cx="1291.9" cy="349" r="4.5"/><circle cx="1270" cy="360.3" r="4.5"/><circle cx="1206.8" cy="308.2" r="2.8"/><circle cx="1204.6" cy="332.3" r="2.8"/><circle cx="1199.1" cy="341.8" r="2.8"/><circle cx="1221.2" cy="355.7" r="2.8"/><circle cx="1236.3" cy="365.5" r="4.5"/><circle cx="1252.5" cy="370.8" r="4.5"/><circle cx="1403.4" cy="239.9" r="7.7"/><circle cx="1419.5" cy="258.5" r="6.2"/><circle cx="1425" cy="316.7" r="6.2"/><circle cx="1404.6" cy="333.4" r="4.5"/><circle cx="1456.8" cy="243.1" r="7.7"/><circle cx="1497.6" cy="234.1" r="7.7"/><circle cx="1514.4" cy="229.2" r="7.7"/><circle cx="1536" cy="229.6" r="7.7"/><circle cx="1553.6" cy="246.6" r="6.2"/><circle cx="1561.8" cy="268.2" r="6.2"/><circle cx="1562.9" cy="288.6" r="6.2"/><circle cx="1561.1" cy="308.5" r="6.2"/><circle cx="1552.1" cy="332.9" r="6.2"/><circle cx="1541.9" cy="354" r="6.2"/><circle cx="1520.6" cy="370" r="6.2"/><circle cx="1510.8" cy="363.3" r="4.5"/><circle cx="1506.6" cy="348.5" r="4.5"/><circle cx="1481.2" cy="344.8" r="4.5"/><circle cx="1051.5" cy="427.7" r="6.2"/><circle cx="1073.9" cy="439.2" r="6.2"/><circle cx="1055" cy="449.6" r="7.7"/><circle cx="1075.1" cy="467.3" r="1"/><circle cx="1095.8" cy="475.5" r="1"/><circle cx="1133.4" cy="475.2" r="4.5"/><circle cx="1137.9" cy="486.7" r="2.8"/><circle cx="1113.7" cy="492.4" r="1"/><circle cx="1125.9" cy="494.5" r="2.8"/><circle cx="1205.8" cy="441.9" r="6.2"/><circle cx="1207.7" cy="453.9" r="6.2"/><circle cx="1212" cy="472.3" r="7.7"/><circle cx="1211" cy="482.3" r="2.8"/><circle cx="1296" cy="440.2" r="6.2"/><circle cx="1288.8" cy="452.9" r="6.2"/><circle cx="1275.1" cy="473" r="6.2"/><circle cx="1269.2" cy="491.4" r="6.2"/><circle cx="1219.9" cy="500.8" r="2.8"/><circle cx="1237.6" cy="503.3" r="4.5"/><circle cx="1248.3" cy="502" r="4.5"/><circle cx="1263.5" cy="502.8" r="4.5"/><circle cx="1338.9" cy="384.7" r="6.2"/><circle cx="1404" cy="377.2" r="6.2"/><circle cx="1421.2" cy="378.4" r="6.2"/><circle cx="1432.1" cy="401.1" r="6.2"/><circle cx="1442.6" cy="422.2" r="6.2"/><circle cx="1451.3" cy="437.1" r="6.2"/><circle cx="1448" cy="447.8" r="6.2"/><circle cx="1447.1" cy="463.8" r="6.2"/><circle cx="1442.1" cy="474" r="6.2"/><circle cx="1429.6" cy="480.9" r="6.2"/><circle cx="1414.2" cy="488.9" r="6.2"/><circle cx="1399.5" cy="488.1" r="6.2"/><circle cx="1388.1" cy="498.3" r="6.2"/><circle cx="1379.4" cy="504.3" r="6.2"/><circle cx="1363" cy="511" r="6.2"/><circle cx="1347.5" cy="500.1" r="6.2"/><circle cx="1344.3" cy="478.4" r="6.2"/><circle cx="1359.2" cy="468" r="6.2"/><circle cx="1355.5" cy="456.7" r="6.2"/></g>
<path d="M1140.7 172.6Q1114.02 130.68 1102.7 82.3M1140.7 172.6Q1124.61 126.98 1124.5 78.6M1140.7 172.6Q1130.74 127.63 1136.2 81.9M1140.7 172.6Q1126.53 135.86 1125.3 96.5M1140.7 172.6Q1104.37 144.72 1079.3 106.4M1140.7 172.6Q1092.88 154.9 1053.6 122.4M1140.7 172.6Q1098.41 157.15 1063.6 128.6M1253.2 173.2Q1225.13 129.46 1213.1 78.9M1253.2 173.2Q1233.49 124.44 1231 71.9M1253.2 173.2Q1240.31 119.47 1245.9 64.5M1253.2 173.2Q1246.35 121.12 1257.1 69.7M1253.2 173.2Q1253.63 121.89 1271 73.6M1253.2 173.2Q1259.04 127.35 1279.7 86M1253.2 173.2Q1267.7 138.07 1293 109.7M1253.2 173.2Q1268.95 145.42 1293 124.4M1253.2 173.2Q1224.4 153.61 1203.7 125.6M1253.2 173.2Q1227.42 146.56 1211.9 112.9M1253.2 173.2Q1225.37 141.41 1209.6 102.2M1365.2 173.8Q1355.24 119.47 1363.8 64.9M1365.2 173.8Q1364.92 118.6 1382.9 66.4M1365.2 173.8Q1353.64 129.1 1357.5 83.1M1365.2 173.8Q1370.79 125.26 1392.1 81.3M1365.2 173.8Q1378.5 128.27 1406.1 89.7M1365.2 173.8Q1386.38 128.63 1421.3 93M1365.2 173.8Q1392.68 134.2 1431.7 105.9M1365.2 173.8Q1395.13 143.14 1433.5 124.1M1365.2 173.8Q1396.8 158.45 1431.7 154.4M1365.2 173.8Q1395.15 177.2 1422.3 190.3M1365.2 173.8Q1385.86 181.55 1402.8 195.7M1365.2 173.8Q1350.92 152.15 1344.6 127M1365.2 173.8Q1353.37 141.45 1352.9 107M1476.7 174.3Q1483.83 129.72 1505.3 90M1476.7 174.3Q1495.15 139.06 1524.2 111.9M1476.7 174.3Q1512.87 152.82 1554.1 144.5M1476.7 174.3Q1503.5 161.56 1533 158.4M1140.3 286.3Q1120.99 248.07 1115.4 205.6M1140.3 286.3Q1105.95 249.75 1085.6 203.9M1140.3 286.3Q1099.34 253.55 1071.5 209.1M1140.3 286.3Q1114.71 252.27 1101.8 211.7M1140.3 286.3Q1130.83 252.98 1132.9 218.4M1140.3 286.3Q1123.45 257.06 1117.2 223.9M1140.3 286.3Q1134.09 259.47 1137.1 232.1M1140.3 286.3Q1093.97 261.92 1058.3 223.6M1140.3 286.3Q1096.05 270.52 1059.5 241M1140.3 286.3Q1088.54 275.09 1043.4 247.4M1140.3 286.3Q1094.56 275.35 1055 249.9M1140.3 286.3Q1084.48 280.56 1033.7 256.7M1140.3 286.3Q1084.32 288.1 1030.9 271.3M1140.3 286.3Q1151.82 276.27 1166 270.6M1140.3 286.3Q1090.06 297 1039.1 290.5M1140.3 286.3Q1090.11 308.52 1035.4 312.9M1140.3 286.3Q1095.04 312.67 1043.6 322.6M1140.3 286.3Q1103.93 311.42 1061.3 323.1M1140.3 286.3Q1092.11 319.65 1035.6 335.2M1140.3 286.3Q1107.41 316.17 1066.5 333.5M1140.3 286.3Q1113.5 325.63 1075.2 353.9M1140.3 286.3Q1122.62 321.51 1094.3 348.9M1140.3 286.3Q1139.02 314.81 1128.4 341.3M1140.3 286.3Q1147.63 316.38 1144.6 347.2M1140.3 286.3Q1138.74 322.22 1125.4 355.6M1140.3 286.3Q1127.39 327.75 1101.5 362.6M1140.3 286.3Q1134.14 330.56 1113.7 370.3M1252.3 286.7Q1234.01 249.01 1229.2 207.4M1252.3 286.7Q1239.77 245.98 1241.4 203.4M1252.3 286.7Q1247.27 248.05 1255.3 209.9M1252.3 286.7Q1225.97 257.43 1210.8 221.1M1252.3 286.7Q1256.34 252.68 1271.4 221.9M1252.3 286.7Q1266.75 252.19 1291.8 224.4M1252.3 286.7Q1275.39 251.86 1308.7 226.6M1252.3 286.7Q1278.39 258.91 1312.2 241.3M1252.3 286.7Q1285.55 263.81 1324.5 253.2M1252.3 286.7Q1225.25 269.23 1205.5 243.8M1252.3 286.7Q1228.54 278.6 1208.8 263.1M1252.3 286.7Q1287.87 277.77 1324.4 281.1M1252.3 286.7Q1288.7 293.22 1320.9 311.4M1252.3 286.7Q1289.95 302.06 1320.4 329M1252.3 286.7Q1285.87 308.05 1310.5 339.3M1252.3 286.7Q1277.4 314.48 1291.9 349M1252.3 286.7Q1267.41 322 1270 360.3M1252.3 286.7Q1231.38 301.32 1206.8 308.2M1252.3 286.7Q1232.33 313.55 1204.6 332.3M1252.3 286.7Q1230.38 318.77 1199.1 341.8M1252.3 286.7Q1242.62 323.84 1221.2 355.7M1252.3 286.7Q1251 327.46 1236.3 365.5M1252.3 286.7Q1259.55 328.73 1252.5 370.8M1363.8 287.1Q1379.59 260.13 1403.4 239.9M1363.8 287.1Q1389.22 268.07 1419.5 258.5M1363.8 287.1Q1396.92 296.7 1425 316.7M1363.8 287.1Q1388.14 306.78 1404.6 333.4M1475 287.6Q1462.12 266.9 1456.8 243.1M1475 287.6Q1481.75 258.93 1497.6 234.1M1475 287.6Q1489.74 255.05 1514.4 229.2M1475 287.6Q1500.57 253.42 1536 229.6M1475 287.6Q1510.82 260.42 1553.6 246.6M1475 287.6Q1516.75 270.52 1561.8 268.2M1475 287.6Q1519.04 280.63 1562.9 288.6M1475 287.6Q1519.83 290.73 1561.1 308.5M1475 287.6Q1517.4 303.7 1552.1 332.9M1475 287.6Q1514.09 315.11 1541.9 354M1475 287.6Q1504.8 324.92 1520.6 370M1475 287.6Q1499.33 322.41 1510.8 363.3M1475 287.6Q1495.98 315.36 1506.6 348.5M1475 287.6Q1482.96 315.67 1481.2 344.8M1139.6 399.4Q1097.96 421.04 1051.5 427.7M1139.6 399.4Q1110.13 424.88 1073.9 439.2M1139.6 399.4Q1101.57 431.69 1055 449.6M1139.6 399.4Q1113.12 438.83 1075.1 467.3M1139.6 399.4Q1124.17 441.17 1095.8 475.5M1139.6 399.4Q1142.94 437.83 1133.4 475.2M1139.6 399.4Q1146.17 443.19 1137.9 486.7M1139.6 399.4Q1134.56 448.1 1113.7 492.4M1139.6 399.4Q1140.83 448.11 1125.9 494.5M1251.3 399.4Q1232.16 424.52 1205.8 441.9M1251.3 399.4Q1234.13 430.36 1207.7 453.9M1251.3 399.4Q1237.85 439.19 1212 472.3M1251.3 399.4Q1238.2 444.28 1211 482.3M1251.3 399.4Q1277.12 416 1296 440.2M1251.3 399.4Q1274.6 422.96 1288.8 452.9M1251.3 399.4Q1269.46 434.18 1275.1 473M1251.3 399.4Q1268.07 443.88 1269.2 491.4M1251.3 399.4Q1244.22 452.77 1219.9 500.8M1251.3 399.4Q1253.28 452.51 1237.6 503.3M1251.3 399.4Q1258.52 450.95 1248.3 502M1251.3 399.4Q1266.19 450.06 1263.5 502.8M1362.5 399.6Q1349.43 394.16 1338.9 384.7M1362.5 399.6Q1381.35 384.87 1404 377.2M1362.5 399.6Q1390.05 384.01 1421.2 378.4M1362.5 399.6Q1397.43 394.43 1432.1 401.1M1362.5 399.6Q1404.47 404.09 1442.6 422.2M1362.5 399.6Q1410.09 410.8 1451.3 437.1M1362.5 399.6Q1409.35 416.43 1448 447.8M1362.5 399.6Q1410.26 424.51 1447.1 463.8M1362.5 399.6Q1408.62 430.03 1442.1 474M1362.5 399.6Q1402.96 434.55 1429.6 480.9M1362.5 399.6Q1395.94 439.86 1414.2 488.9M1362.5 399.6Q1388.52 440.71 1399.5 488.1M1362.5 399.6Q1383.69 446.77 1388.1 498.3M1362.5 399.6Q1379.85 450.51 1379.4 504.3M1362.5 399.6Q1372.22 455.26 1363 511M1362.5 399.6Q1363.54 451.12 1347.5 500.1M1362.5 399.6Q1360.1 440.55 1344.3 478.4M1362.5 399.6Q1366.66 434.08 1359.2 468M1362.5 399.6Q1363.85 428.75 1355.5 456.7" fill="none" stroke="#cfe0c8" stroke-opacity="0.220" stroke-width="0.900"/>
<g fill="#ffd700"><circle cx="1140.7" cy="172.6" r="2"/><circle cx="1253.2" cy="173.2" r="2"/><circle cx="1365.2" cy="173.8" r="2"/><circle cx="1476.7" cy="174.3" r="2"/><circle cx="1140.3" cy="286.3" r="2"/><circle cx="1252.3" cy="286.7" r="2"/><circle cx="1363.8" cy="287.1" r="2"/><circle cx="1475" cy="287.6" r="2"/><circle cx="1139.6" cy="399.4" r="2"/><circle cx="1251.3" cy="399.4" r="2"/><circle cx="1362.5" cy="399.6" r="2"/></g>
<rect x="701.2" y="932.800" width="48.3" height="53" rx="9" fill="#333"/>
<rect x="762.8" y="932.800" width="48.3" height="53" rx="9" fill="#333"/>
<rect x="824.2" y="932.800" width="48.3" height="53" rx="9" fill="#333"/>
<rect x="885.8" y="932.800" width="48.3" height="53" rx="9" fill="#333"/>
<rect x="947.2" y="932.800" width="48.3" height="53" rx="9" fill="#333"/>
<rect x="1008.7" y="932.800" width="48.3" height="53" rx="9" fill="#333"/>
<rect x="1070" y="932.800" width="48.3" height="53" rx="9" fill="#333"/>
<rect x="1131.7" y="932.800" width="48.3" height="53" rx="9" fill="#333"/>
<rect x="1193" y="932.800" width="48.3" height="53" rx="9" fill="#333"/>
<rect x="1254.5" y="932.800" width="48.3" height="53" rx="9" fill="#333"/>
<rect x="1315.8" y="932.800" width="48.3" height="53" rx="9" fill="#333"/>
<rect x="1377.2" y="932.800" width="43.8" height="53" rx="9" fill="#333"/>
<rect x="1434.1" y="932.800" width="48.1" height="53" rx="9" fill="#333"/>
<rect x="1527.1" y="932.800" width="48.3" height="53" rx="9" fill="#333"/>
<rect x="1588.3" y="932.800" width="48.3" height="53" rx="9" fill="#333"/>
<rect x="1650" y="932.800" width="48.3" height="53" rx="9" fill="#333"/>
<path d="M708 959.500Q716.200 948 725.200 948Q734.300 948 742.500 959.500Q734.300 970.900 725.200 970.900Q716.200 970.900 708 959.500Z" fill="#c4c4c4"/>
<circle cx="725.200" cy="959.500" r="7.400" fill="#333"/><circle cx="725.200" cy="959.500" r="4.200" fill="#c4c4c4"/>
<rect x="777.8" y="943.3" width="3.400" height="3.400" fill="#c4c4c4"/>
<rect x="777.8" y="972.5" width="3.400" height="3.400" fill="#c4c4c4"/>
<rect x="785" y="943.3" width="3.400" height="3.400" fill="#c4c4c4"/>
<rect x="785" y="972.5" width="3.400" height="3.400" fill="#c4c4c4"/>
<rect x="792.2" y="943.3" width="3.400" height="3.400" fill="#c4c4c4"/>
<rect x="792.2" y="972.5" width="3.400" height="3.400" fill="#c4c4c4"/>
<rect x="770.3" y="950.7" width="3.400" height="3.400" fill="#c4c4c4"/>
<rect x="799.9" y="950.7" width="3.400" height="3.400" fill="#c4c4c4"/>
<rect x="770.3" y="957.9" width="3.400" height="3.400" fill="#c4c4c4"/>
<rect x="799.9" y="957.9" width="3.400" height="3.400" fill="#c4c4c4"/>
<rect x="770.3" y="965.1" width="3.400" height="3.400" fill="#c4c4c4"/>
<rect x="799.9" y="965.1" width="3.400" height="3.400" fill="#c4c4c4"/>
<path d="M772 949.200A4.200 4.200 0 0 1 776.200 945M797.400 945A4.200 4.200 0 0 1 801.600 949.200M801.600 970A4.200 4.200 0 0 1 797.400 974.200M776.200 974.200A4.200 4.200 0 0 1 772 970" fill="none" stroke="#c4c4c4" stroke-width="3.400"/>
<rect x="779.200" y="951.500" width="15.600" height="15.800" fill="none" stroke="#c4c4c4" stroke-width="2.800"/>
<path d="M833.500 951H845.400Q848.400 947 852 948.400Q855.500 950 857.800 951H863.200V971.200H833.500Z" fill="none" stroke="#c4c4c4" stroke-width="2" stroke-linejoin="miter"/>
<path d="M834.600 948.600H840.200M835.400 954.700H841.600" fill="none" stroke="#c4c4c4" stroke-width="1.600"/>
<circle cx="850" cy="960.200" r="6.800" fill="none" stroke="#c4c4c4" stroke-width="1.900"/><circle cx="850" cy="960.200" r="3.500" fill="none" stroke="#c4c4c4" stroke-width="1.700"/><circle cx="850" cy="960.200" r="1.100" fill="#c4c4c4"/>
<circle cx="909.700" cy="959.500" r="11.800" fill="none" stroke="#c4c4c4" stroke-width="3.200"/>
<circle cx="909.700" cy="959.500" r="5" fill="none" stroke="#c4c4c4" stroke-width="3.600"/>
<path d="M892.400 959.500H903M916.400 959.500H927M909.700 942.200V952.800M909.700 966.200V976.800" fill="none" stroke="#c4c4c4" stroke-width="2.600" stroke-linecap="round"/>
<path d="M958.800 956V949.500a2 2 0 0 1 2-2H967.300M975 947.500H981.500a2 2 0 0 1 2 2V956M983.500 963.500V970a2 2 0 0 1-2 2H975M967.300 972H960.800a2 2 0 0 1-2-2V963.500" fill="none" stroke="#c4c4c4" stroke-width="2.600"/>
<path d="M975.800 953L966.300 956.300L968.800 965.800Z" fill="none" stroke="#c4c4c4" stroke-width="1.100"/>
<circle cx="975.8" cy="953" r="1.500" fill="#333" stroke="#c4c4c4" stroke-width="1"/>
<circle cx="966.3" cy="956.3" r="1.500" fill="#333" stroke="#c4c4c4" stroke-width="1"/>
<circle cx="968.8" cy="965.8" r="1.500" fill="#333" stroke="#c4c4c4" stroke-width="1"/>
<clipPath id="c5"><rect x="1019.200" y="945.800" width="27.100" height="26.700"/></clipPath>
<g clip-path="url(#c5)" fill="#c4c4c4"><circle cx="1029.200" cy="955" r="3.500"/><circle cx="1038" cy="954.500" r="2.200"/><circle cx="1038" cy="962.500" r="3.900"/><circle cx="1033.600" cy="968.600" r="4.200"/></g>
<rect x="1020.300" y="946.900" width="24.900" height="24.500" fill="none" stroke="#c4c4c4" stroke-width="2.300"/>
<path d="M1084.500 953.800V951a1.600 1.600 0 0 1 1.600-1.600H1087.500M1101 949.400H1107.200a1.600 1.600 0 0 1 1.600 1.600V955.600M1108.800 965.300V970.200a1.600 1.600 0 0 1-1.600 1.600H1101.500M1092.500 971.800H1086.100a1.600 1.600 0 0 1-1.600-1.600V967.500" fill="none" stroke="#c4c4c4" stroke-width="2.300"/>
<circle cx="1092.2" cy="947.6" r="4.3" fill="#c4c4c4"/>
<circle cx="1082.6" cy="962" r="4.3" fill="#c4c4c4"/>
<circle cx="1098.7" cy="964.2" r="4.3" fill="#c4c4c4"/>
<circle cx="1101.7" cy="955" r="2.7" fill="#c4c4c4"/>
<path d="M1142.500 954.300H1161.300V973.200H1142.500ZM1150 946.800H1169.200V965.700H1150ZM1142.500 954.300L1150 946.800M1161.300 954.300L1169.200 946.800M1142.500 973.200L1150 965.700M1161.300 973.200L1169.200 965.700" fill="none" stroke="#c4c4c4" stroke-width="2"/>
<circle cx="1142.5" cy="954.3" r="2" fill="#c4c4c4"/>
<circle cx="1161.3" cy="954.3" r="2" fill="#c4c4c4"/>
<circle cx="1142.5" cy="973.2" r="2" fill="#c4c4c4"/>
<circle cx="1161.3" cy="973.2" r="2" fill="#c4c4c4"/>
<circle cx="1150" cy="946.8" r="2" fill="#c4c4c4"/>
<circle cx="1169.2" cy="946.8" r="2" fill="#c4c4c4"/>
<circle cx="1150" cy="965.7" r="2" fill="#c4c4c4"/>
<circle cx="1169.2" cy="965.7" r="2" fill="#c4c4c4"/>
<path d="M1207.200 949.500a4 4 0 0 1 4-4H1228a4 4 0 0 1 4 4V965a4 4 0 0 1-4 4H1227" fill="none" stroke="#c4c4c4" stroke-width="2.800"/>
<rect x="1200.200" y="953.200" width="24" height="22.600" rx="3.400" fill="#c4c4c4" stroke="#333" stroke-width="1.400" paint-order="stroke"/>
<rect x="1200.200" y="953.200" width="24" height="22.600" rx="3.400" fill="#c4c4c4"/>
<path d="M1206.600 964.600H1217.800M1212.200 959V970.200" stroke="#333" stroke-width="2.200" fill="none"/>
<path d="M1264.200 959.700H1276" fill="none" stroke="#c4c4c4" stroke-width="2.400"/>
<circle cx="1264.200" cy="959.700" r="3.700" fill="#c4c4c4"/><circle cx="1285.300" cy="959.700" r="10.700" fill="#c4c4c4"/>
<path d="M1280.100 959.700H1290.500M1285.300 954.500V964.900" stroke="#333" stroke-width="2.200" fill="none"/>
<path d="M1343.800 942.100L1350.600 943.900L1348.100 953L1355.300 956.400Q1352.600 968 1346.900 977.400L1324.700 971.100Q1331.400 961 1333.100 949.600L1341.300 950.800Z" fill="none" stroke="#c4c4c4" stroke-width="1.900" stroke-linejoin="round"/>
<path d="M1335.200 958.400L1349.200 962.100" fill="none" stroke="#c4c4c4" stroke-width="2.600" stroke-linecap="round"/>
<path d="M1334.700 964.900L1332.200 971.500M1340 966.400L1338.100 973.200M1345.600 967.700L1343.800 974.800" fill="none" stroke="#c4c4c4" stroke-width="2" stroke-linecap="round"/>
<path d="M1391.200 950.050A12.200 12.200 0 1 1 1389.500 967.100" fill="none" stroke="#c4c4c4" stroke-width="5.400"/>
<path d="M1383.700 945.600V956.900H1395Z" fill="#c4c4c4"/>
<path d="M1448.800 941.400H1467.400V945.800H1464.200L1465.200 958.500Q1469.600 961 1469.600 966.400H1459.300V977.400H1456.900V966.400H1446.600Q1446.600 961 1451 958.500L1452 945.800H1448.800Z" fill="#c4c4c4"/>
<rect x="1482.700" y="932.800" width="31.300" height="22.800" rx="11.400" fill="#00b2f2"/>
<path d="M1554 950.500H1538.600a4 4 0 0 0-4 4V972.500a4 4 0 0 0 4 4H1563.600a4 4 0 0 0 4-4V954.500a4 4 0 0 0-4-4H1563" fill="none" stroke="#c4c4c4" stroke-width="2"/>
<path d="M1558.800 946.500C1561 952 1560.600 958 1558.800 964.600C1557 958 1556.600 952 1558.800 946.500Z" fill="none" stroke="#c4c4c4" stroke-width="1.300"/>
<circle cx="1558.800" cy="943.400" r="1.700" fill="none" stroke="#c4c4c4" stroke-width="1.300"/>
<path d="M1597.100 946.900L1614.400 956.600L1626 950.200M1614.400 956.600L1600.800 968.800M1614.400 956.600V951.600" fill="none" stroke="#c4c4c4" stroke-width="2"/>
<circle cx="1597.1" cy="946.9" r="2.6" fill="#c4c4c4"/>
<circle cx="1626" cy="950.2" r="3" fill="#c4c4c4"/>
<circle cx="1600.8" cy="968.8" r="3.2" fill="#c4c4c4"/>
<circle cx="1614.4" cy="950.8" r="1.3" fill="#c4c4c4"/>
<path d="M1615.900 963.900V970.500M1620.700 963.900V970.500" fill="none" stroke="#c4c4c4" stroke-width="1.700"/>
<path d="M1658.800 967.600Q1671 976.600 1685.500 970.600" fill="none" stroke="#c4c4c4" stroke-width="2.500"/>
<path d="M1690.800 967.200L1682.600 966.800L1685.800 974Z" fill="#c4c4c4"/>
</svg>
<div id="tx">
<span class="t" style="left:197px;top:34.64px;font-size:22.4px;line-height:22.4px;color:#a9b0b8;letter-spacing:0.03px;">Build a pattern to query th...</span>
<span class="t" style="left:128.3px;top:171.98px;font-size:22px;line-height:22px;color:#5aa7e2;letter-spacing:0.56px;">Views</span>
<span class="t" style="left:264.6px;top:171.98px;font-size:22px;line-height:22px;color:#c9c9c9;letter-spacing:0.69px;">Category</span>
<span class="t" style="left:435.3px;top:171.98px;font-size:22px;line-height:22px;color:#c9c9c9;letter-spacing:0.46px;">Relationship</span>
<span class="t" style="left:630.8px;top:171.98px;font-size:22px;line-height:22px;color:#c9c9c9;letter-spacing:0.74px;">Settings</span>
<span class="t" style="left:784.7px;top:171.98px;font-size:22px;line-height:22px;color:#c9c9c9;letter-spacing:0.47px;">Data Store</span>
<span class="t" style="left:183.2px;top:256.21px;font-size:17px;line-height:17px;color:#c6c6c6;letter-spacing:-0.35px;-webkit-text-stroke:0.500px #c6c6c6;">1</span>
<span class="t" style="left:183.2px;top:273.21px;font-size:17px;line-height:17px;color:#c6c6c6;letter-spacing:-0.35px;-webkit-text-stroke:0.500px #c6c6c6;">9</span>
<span class="t" style="left:245.6px;top:262.72px;font-size:21px;line-height:21px;color:#c9c9c9;letter-spacing:0.29px;">Date Created</span>
<span class="t" style="left:727px;top:264.3px;font-size:21.5px;line-height:21.5px;color:#787878;letter-spacing:-1.05px;">Save</span>
<span class="t" style="left:834.6px;top:264.3px;font-size:21.5px;line-height:21.5px;color:#d2d2d2;letter-spacing:-0.38px;">Save As</span>
<span class="t" style="left:105px;top:553.73px;font-size:23px;line-height:23px;color:#bfbfbf;letter-spacing:-0.65px;width:171.5px;overflow:hidden;">ContactTracing_M</span>
<span class="t" style="left:310.5px;top:553.73px;font-size:23px;line-height:23px;color:#bfbfbf;letter-spacing:-0.66px;">ContactTrace</span>
<span class="t" style="left:516px;top:553.73px;font-size:23px;line-height:23px;color:#bfbfbf;letter-spacing:-0.56px;">Crime_Map</span>
<span class="t" style="left:721.5px;top:553.73px;font-size:23px;line-height:23px;color:#bfbfbf;letter-spacing:-0.93px;">SG_OysterShare</span>
<div style="position:absolute;left:62px;top:800px;width:896px;height:37px;overflow:hidden">
<span class="t" style="left:43px;top:12.63px;font-size:23px;line-height:23px;color:#bfbfbf;letter-spacing:-0.93px;">Racing</span>
<span class="t" style="left:248.5px;top:12.63px;font-size:23px;line-height:23px;color:#bfbfbf;letter-spacing:-0.65px;width:170px;overflow:hidden;">Racing_RingLayou</span>
<span class="t" style="left:454px;top:12.63px;font-size:23px;line-height:23px;color:#bfbfbf;letter-spacing:-0.72px;">SW_Photos</span>
<span class="t" style="left:659.5px;top:12.63px;font-size:23px;line-height:23px;color:#bfbfbf;letter-spacing:-0.71px;">SW_Photos_Map</span>
</div>
<span class="t" style="left:793.5px;top:29.83px;font-size:23px;line-height:23px;color:#414141;letter-spacing:-0.62px;">GraphXR Tutorial</span>
<span class="t" style="left:969.6px;top:29.83px;font-size:23px;line-height:23px;color:#5a5a5a;">/</span>
<span class="t" style="left:984.7px;top:29.83px;font-size:23px;line-height:23px;color:#dedede;letter-spacing:-0.77px;">SW_Photos</span>
<span class="t" style="left:1694px;top:110.68px;font-size:22px;line-height:22px;color:#2ca02c;letter-spacing:0.51px;">Photos 0/143</span>
<span class="t" style="left:1691.8px;top:168.98px;font-size:22px;line-height:22px;color:#ffd80a;letter-spacing:0.58px;-webkit-text-stroke:0.35px #ffd80a;">Location 0/11</span>
<span class="t" style="left:1655px;top:272.58px;font-size:22px;line-height:22px;color:#b3cbee;letter-spacing:0.26px;">TAKEN_AT 0/143</span>
<span class="t" style="left:1203.4px;top:622.3px;font-size:8.5px;line-height:8.5px;color:#c4c4c4;">?</span>
<span class="t" style="left:1227.7px;top:614.65px;font-size:20.5px;line-height:20.5px;color:#f3ecde;letter-spacing:0.17px;-webkit-text-stroke:0.300px #f3ecde;">default_export (3).kuzu</span>
<span class="t" style="left:1489.6px;top:937.19px;font-size:16.2px;line-height:16.2px;color:#000;letter-spacing:0.59px;-webkit-text-stroke:0.300px #000;">11</span>
<span class="t" style="left:1656px;top:946.09px;font-size:19.5px;line-height:19.5px;color:#c4c4c4;letter-spacing:-0.26px;-webkit-text-stroke:0.500px #c4c4c4;">3D</span>
<span class="t" style="left:1682.3px;top:952.21px;font-size:7.2px;line-height:7.2px;color:#c4c4c4;letter-spacing:0.35px;font-weight:bold;">2D</span>
</div>
</body></html>
